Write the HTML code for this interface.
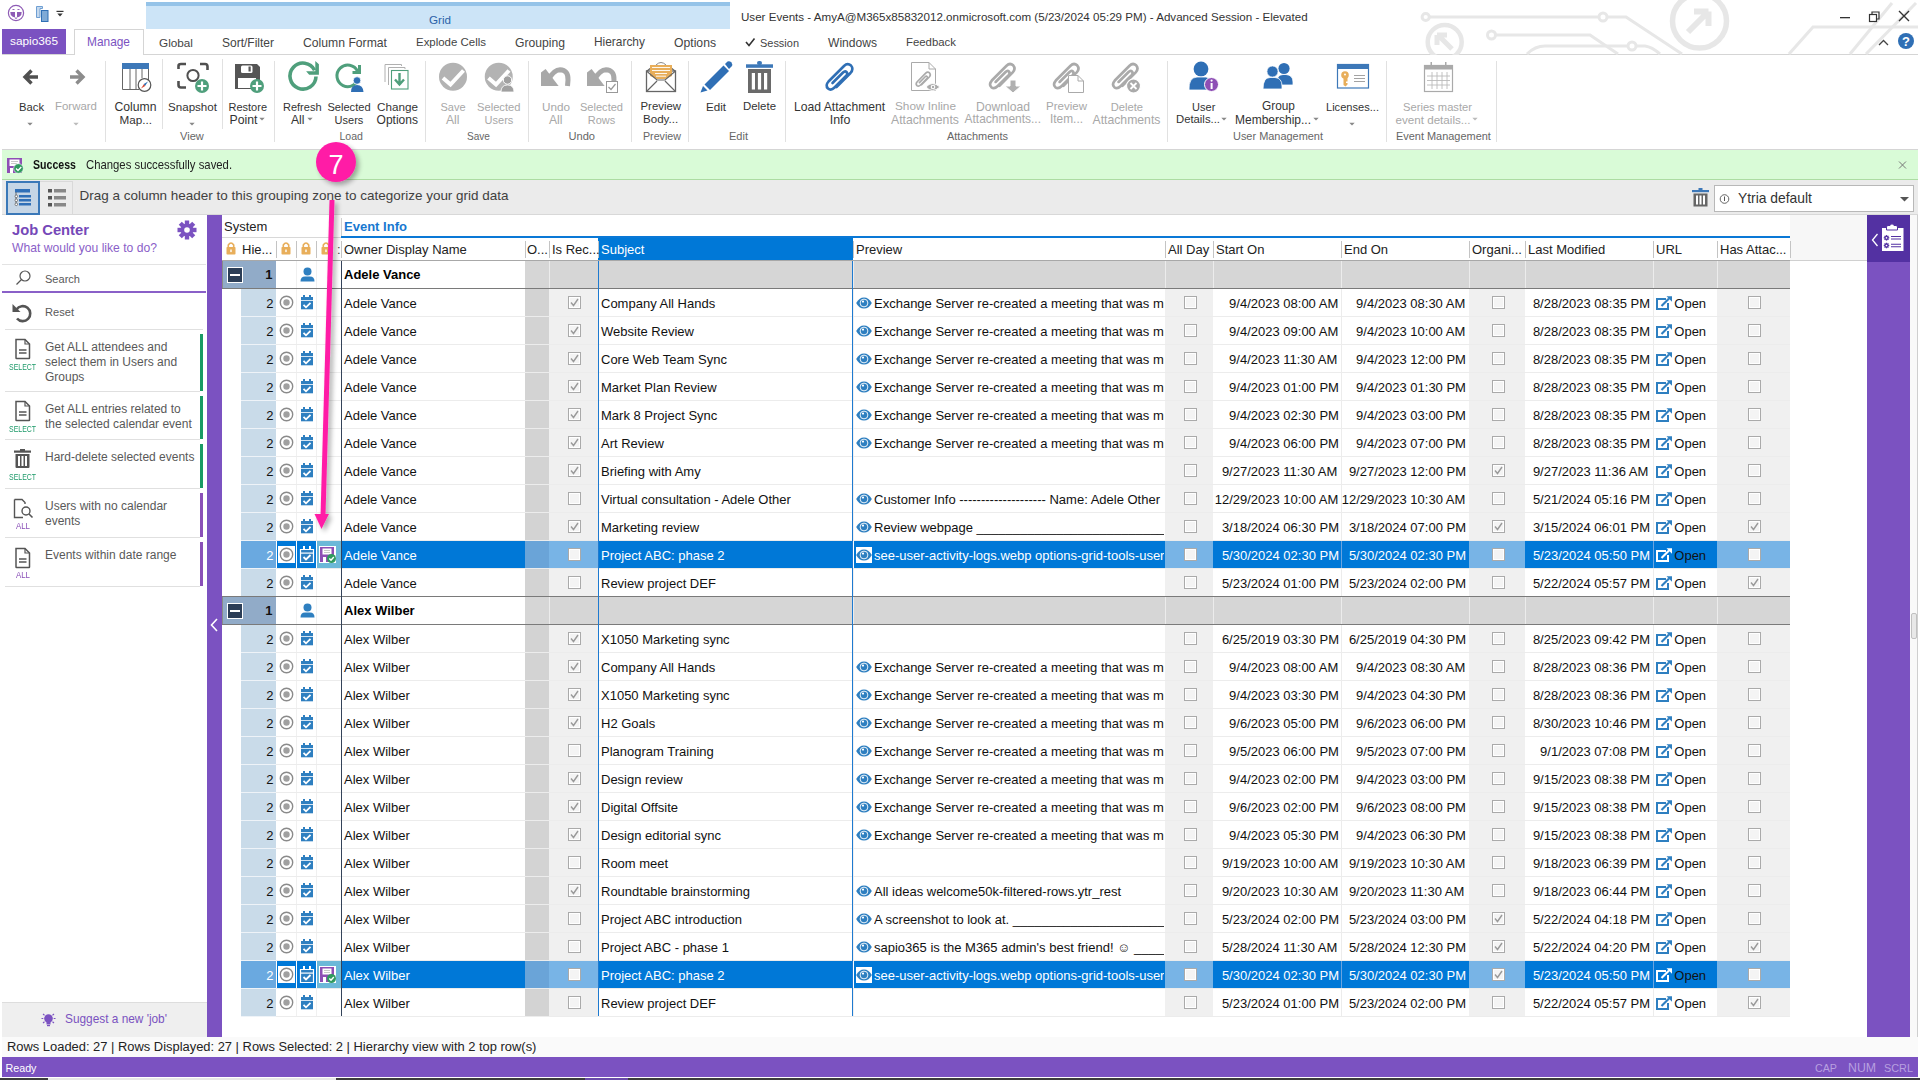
<!DOCTYPE html><html><head><meta charset="utf-8"><style>
html,body{margin:0;padding:0;width:1920px;height:1080px;overflow:hidden;background:#fff;}
body{position:relative;font-family:"Liberation Sans",sans-serif;}
div,svg{position:absolute;box-sizing:border-box;}
.t{white-space:nowrap;}
</style></head><body>
<div style="left:146px;top:2px;width:584px;height:27px;background:#cce4f7;"></div>
<div style="left:146px;top:2px;width:584px;height:4px;background:#95c3e8;"></div>
<div class="t" style="left:429.0px;top:14.1px;font-size:11.65px;line-height:11.65px;color:#2a62a8;">Grid</div>
<div class="t" style="left:741.0px;top:11.2px;font-size:11.6px;line-height:11.6px;color:#333;">User Events - AmyA@M365x85832012.onmicrosoft.com (5/23/2024 05:29 PM) - Advanced Session - Elevated</div>
<div style="left:2px;top:54px;width:1916px;height:1px;background:#d5d5d5;"></div>
<div style="left:2px;top:29px;width:64px;height:25px;background:#7b52c1;"></div>
<div class="t" style="left:10.0px;top:36.0px;font-size:11.83px;line-height:11.83px;color:#fff;">sapio365</div>
<div style="left:74px;top:29px;width:70px;height:26px;background:#fff;border:1px solid #d5d5d5;border-bottom:none"></div>
<div class="t" style="left:87.0px;top:36.9px;font-size:11.9px;line-height:11.9px;color:#7b52c1;">Manage</div>
<div class="t" style="left:159.0px;top:37.0px;font-size:11.76px;line-height:11.76px;color:#444;">Global</div>
<div class="t" style="left:222.0px;top:36.8px;font-size:12.0px;line-height:12.0px;color:#444;">Sort/Filter</div>
<div class="t" style="left:303.0px;top:36.7px;font-size:12.19px;line-height:12.19px;color:#444;">Column Format</div>
<div class="t" style="left:416.0px;top:37.3px;font-size:11.45px;line-height:11.45px;color:#444;">Explode Cells</div>
<div class="t" style="left:515.0px;top:36.7px;font-size:12.15px;line-height:12.15px;color:#444;">Grouping</div>
<div class="t" style="left:594.0px;top:36.9px;font-size:11.92px;line-height:11.92px;color:#444;">Hierarchy</div>
<div class="t" style="left:674.0px;top:36.7px;font-size:12.19px;line-height:12.19px;color:#444;">Options</div>
<div class="t" style="left:760.0px;top:37.7px;font-size:10.96px;line-height:10.96px;color:#444;">Session</div>
<div class="t" style="left:828.0px;top:36.8px;font-size:12.08px;line-height:12.08px;color:#444;">Windows</div>
<div class="t" style="left:906.0px;top:37.4px;font-size:11.39px;line-height:11.39px;color:#444;">Feedback</div>
<div style="left:2px;top:149px;width:1916px;height:1px;background:#d5d5d5;"></div>
<div style="left:105px;top:61px;width:1px;height:81px;background:#e1e1e1;"></div>
<div style="left:162px;top:59px;width:1px;height:70px;background:#e1e1e1;"></div>
<div style="left:222px;top:59px;width:1px;height:70px;background:#e1e1e1;"></div>
<div style="left:274px;top:61px;width:1px;height:81px;background:#e1e1e1;"></div>
<div style="left:425px;top:61px;width:1px;height:81px;background:#e1e1e1;"></div>
<div style="left:528px;top:61px;width:1px;height:81px;background:#e1e1e1;"></div>
<div style="left:631px;top:61px;width:1px;height:81px;background:#e1e1e1;"></div>
<div style="left:688px;top:61px;width:1px;height:81px;background:#e1e1e1;"></div>
<div style="left:785px;top:61px;width:1px;height:81px;background:#e1e1e1;"></div>
<div style="left:1167px;top:61px;width:1px;height:81px;background:#e1e1e1;"></div>
<div style="left:1386px;top:61px;width:1px;height:81px;background:#e1e1e1;"></div>
<div style="left:1496px;top:61px;width:1px;height:81px;background:#e1e1e1;"></div>
<div class="t" style="left:19.0px;top:101.5px;font-size:11.25px;line-height:11.25px;color:#333;">Back</div>
<div class="t" style="left:55.0px;top:101.3px;font-size:11.45px;line-height:11.45px;color:#a8a8a8;">Forward</div>
<div class="t" style="left:114.5px;top:100.7px;font-size:12.19px;line-height:12.19px;color:#333;">Column</div>
<div class="t" style="left:119.5px;top:114.1px;font-size:11.7px;line-height:11.7px;color:#333;">Map...</div>
<div class="t" style="left:168.0px;top:101.2px;font-size:11.6px;line-height:11.6px;color:#333;">Snapshot</div>
<div class="t" style="left:228.5px;top:101.7px;font-size:11.0px;line-height:11.0px;color:#333;">Restore</div>
<div class="t" style="left:229.5px;top:113.6px;font-size:12.28px;line-height:12.28px;color:#333;">Point</div>
<div class="t" style="left:283.0px;top:101.7px;font-size:11.0px;line-height:11.0px;color:#333;">Refresh</div>
<div class="t" style="left:291.0px;top:113.7px;font-size:12.15px;line-height:12.15px;color:#333;">All</div>
<div class="t" style="left:327.4px;top:101.6px;font-size:11.1px;line-height:11.1px;color:#333;">Selected</div>
<div class="t" style="left:334.6px;top:114.7px;font-size:11.0px;line-height:11.0px;color:#333;">Users</div>
<div class="t" style="left:377.0px;top:101.1px;font-size:11.7px;line-height:11.7px;color:#333;">Change</div>
<div class="t" style="left:376.6px;top:113.8px;font-size:12.01px;line-height:12.01px;color:#333;">Options</div>
<div class="t" style="left:440.5px;top:101.7px;font-size:11.0px;line-height:11.0px;color:#a8a8a8;">Save</div>
<div class="t" style="left:446.0px;top:113.7px;font-size:12.15px;line-height:12.15px;color:#a8a8a8;">All</div>
<div class="t" style="left:477.0px;top:101.5px;font-size:11.18px;line-height:11.18px;color:#a8a8a8;">Selected</div>
<div class="t" style="left:484.6px;top:114.7px;font-size:11.0px;line-height:11.0px;color:#a8a8a8;">Users</div>
<div class="t" style="left:542.0px;top:101.1px;font-size:11.71px;line-height:11.71px;color:#a8a8a8;">Undo</div>
<div class="t" style="left:549.0px;top:113.7px;font-size:12.15px;line-height:12.15px;color:#a8a8a8;">All</div>
<div class="t" style="left:580.0px;top:101.6px;font-size:11.05px;line-height:11.05px;color:#a8a8a8;">Selected</div>
<div class="t" style="left:587.7px;top:114.7px;font-size:11.0px;line-height:11.0px;color:#a8a8a8;">Rows</div>
<div class="t" style="left:640.5px;top:101.4px;font-size:11.39px;line-height:11.39px;color:#333;">Preview</div>
<div class="t" style="left:643.0px;top:114.2px;font-size:11.57px;line-height:11.57px;color:#333;">Body...</div>
<div class="t" style="left:706.0px;top:101.2px;font-size:11.61px;line-height:11.61px;color:#333;">Edit</div>
<div class="t" style="left:743.0px;top:101.3px;font-size:11.42px;line-height:11.42px;color:#333;">Delete</div>
<div class="t" style="left:794.0px;top:100.7px;font-size:12.17px;line-height:12.17px;color:#333;">Load Attachment</div>
<div class="t" style="left:829.7px;top:113.5px;font-size:12.4px;line-height:12.4px;color:#333;">Info</div>
<div class="t" style="left:895.0px;top:101.0px;font-size:11.8px;line-height:11.8px;color:#a8a8a8;">Show Inline</div>
<div class="t" style="left:891.0px;top:113.6px;font-size:12.23px;line-height:12.23px;color:#a8a8a8;">Attachments</div>
<div class="t" style="left:976.0px;top:100.7px;font-size:12.14px;line-height:12.14px;color:#a8a8a8;">Download</div>
<div class="t" style="left:964.5px;top:113.9px;font-size:11.97px;line-height:11.97px;color:#a8a8a8;">Attachments...</div>
<div class="t" style="left:1046.0px;top:101.2px;font-size:11.53px;line-height:11.53px;color:#a8a8a8;">Preview</div>
<div class="t" style="left:1050.0px;top:113.9px;font-size:11.88px;line-height:11.88px;color:#a8a8a8;">Item...</div>
<div class="t" style="left:1110.7px;top:101.5px;font-size:11.17px;line-height:11.17px;color:#a8a8a8;">Delete</div>
<div class="t" style="left:1092.5px;top:113.6px;font-size:12.23px;line-height:12.23px;color:#a8a8a8;">Attachments</div>
<div class="t" style="left:1192.1px;top:101.7px;font-size:11.0px;line-height:11.0px;color:#333;">User</div>
<div class="t" style="left:1176.0px;top:114.4px;font-size:11.31px;line-height:11.31px;color:#333;">Details...</div>
<div class="t" style="left:1262.0px;top:101.0px;font-size:11.87px;line-height:11.87px;color:#333;">Group</div>
<div class="t" style="left:1235.0px;top:113.8px;font-size:12.0px;line-height:12.0px;color:#333;">Membership...</div>
<div class="t" style="left:1326.0px;top:101.6px;font-size:11.09px;line-height:11.09px;color:#333;">Licenses...</div>
<div class="t" style="left:1403.0px;top:101.5px;font-size:11.19px;line-height:11.19px;color:#a8a8a8;">Series master</div>
<div class="t" style="left:1395.5px;top:114.2px;font-size:11.63px;line-height:11.63px;color:#a8a8a8;">event details...</div>
<div class="t" style="left:180.0px;top:130.6px;font-size:11.07px;line-height:11.07px;color:#666;">View</div>
<div class="t" style="left:339.5px;top:131.1px;font-size:10.56px;line-height:10.56px;color:#666;">Load</div>
<div class="t" style="left:467.0px;top:131.5px;font-size:10.09px;line-height:10.09px;color:#666;">Save</div>
<div class="t" style="left:568.5px;top:130.6px;font-size:11.08px;line-height:11.08px;color:#666;">Undo</div>
<div class="t" style="left:643.0px;top:131.0px;font-size:10.68px;line-height:10.68px;color:#666;">Preview</div>
<div class="t" style="left:729.0px;top:130.7px;font-size:11.03px;line-height:11.03px;color:#666;">Edit</div>
<div class="t" style="left:947.0px;top:130.7px;font-size:10.97px;line-height:10.97px;color:#666;">Attachments</div>
<div class="t" style="left:1233.0px;top:130.7px;font-size:10.94px;line-height:10.94px;color:#666;">User Management</div>
<div class="t" style="left:1396.0px;top:130.7px;font-size:10.95px;line-height:10.95px;color:#666;">Event Management</div>
<div style="left:2px;top:150px;width:1916px;height:30px;background:#d9fbd7;"></div>
<div style="left:2px;top:179px;width:1916px;height:1px;background:#acdca2;"></div>
<div class="t" style="left:33.0px;top:159.3px;font-size:12.6px;line-height:12.6px;color:#111;font-weight:bold;transform:scaleX(0.841);transform-origin:0 0;">Success</div>
<div class="t" style="left:86.0px;top:159.2px;font-size:12.8px;line-height:12.8px;color:#222;transform:scaleX(0.885);transform-origin:0 0;">Changes successfully saved.</div>
<div style="left:2px;top:180px;width:1916px;height:35px;background:#ebebeb;"></div>
<div style="left:2px;top:214px;width:1916px;height:1px;background:#d8d8d8;"></div>
<div style="left:6px;top:181px;width:34px;height:34px;background:#c6d6e6;border:2px solid #3a78b8"></div>
<div style="left:40px;top:181px;width:33px;height:34px;background:#ececec;border:1px solid #d9d9d9;border-left:none"></div>
<div class="t" style="left:79.5px;top:188.6px;font-size:13.48px;line-height:13.48px;color:#404040;">Drag a column header to this grouping zone to categorize your grid data</div>
<div style="left:1714px;top:185px;width:200px;height:27px;background:#fff;border:1px solid #b8b8b8"></div>
<div class="t" style="left:1738.0px;top:192.3px;font-size:13.87px;line-height:13.87px;color:#333;">Ytria default</div>
<div style="left:0px;top:215px;width:207px;height:822px;background:#fff;"></div>
<div style="left:207px;top:215px;width:15px;height:822px;background:#7b52c1;"></div>
<div class="t" style="left:12.0px;top:223.0px;font-size:14.74px;line-height:14.74px;color:#7548b8;font-weight:bold;">Job Center</div>
<div class="t" style="left:12.0px;top:241.7px;font-size:12.13px;line-height:12.13px;color:#8a60c8;">What would you like to do?</div>
<div style="left:2px;top:264px;width:204px;height:1px;background:#e3e3e3;"></div>
<div class="t" style="left:45.0px;top:273.6px;font-size:11.05px;line-height:11.05px;color:#595959;">Search</div>
<div style="left:2px;top:291px;width:204px;height:2px;background:#8a60c8;"></div>
<div class="t" style="left:45.0px;top:306.6px;font-size:11.1px;line-height:11.1px;color:#595959;">Reset</div>
<div style="left:5px;top:329px;width:198px;height:1px;background:#e0e0e0;"></div>
<div style="left:200px;top:334px;width:3px;height:57px;background:#1a9a64;"></div>
<div style="left:5px;top:391px;width:195px;height:1px;background:#e0e0e0;"></div>
<div class="t" style="left:45.0px;top:340.8px;font-size:12px;line-height:12px;color:#595959;">Get ALL attendees and</div>
<div class="t" style="left:45.0px;top:356.1px;font-size:12px;line-height:12px;color:#595959;">select them in Users and</div>
<div class="t" style="left:45.0px;top:371.4px;font-size:12px;line-height:12px;color:#595959;">Groups</div>
<div class="t" style="left:9.0px;top:362.0px;font-size:9.5px;line-height:9.5px;color:#1e9a6a;transform:scaleX(0.731);transform-origin:0 0;">SELECT</div>
<div style="left:200px;top:396px;width:3px;height:43px;background:#1a9a64;"></div>
<div style="left:5px;top:439px;width:195px;height:1px;background:#e0e0e0;"></div>
<div class="t" style="left:45.0px;top:402.8px;font-size:12px;line-height:12px;color:#595959;">Get ALL entries related to</div>
<div class="t" style="left:45.0px;top:418.1px;font-size:12px;line-height:12px;color:#595959;">the selected calendar event</div>
<div class="t" style="left:9.0px;top:424.0px;font-size:9.5px;line-height:9.5px;color:#1e9a6a;transform:scaleX(0.731);transform-origin:0 0;">SELECT</div>
<div style="left:200px;top:444px;width:3px;height:44px;background:#1a9a64;"></div>
<div style="left:5px;top:488px;width:195px;height:1px;background:#e0e0e0;"></div>
<div class="t" style="left:45.0px;top:450.8px;font-size:12px;line-height:12px;color:#595959;">Hard-delete selected events</div>
<div class="t" style="left:9.0px;top:472.0px;font-size:9.5px;line-height:9.5px;color:#1e9a6a;transform:scaleX(0.731);transform-origin:0 0;">SELECT</div>
<div style="left:200px;top:493px;width:3px;height:44px;background:#8a50b8;"></div>
<div style="left:5px;top:537px;width:195px;height:1px;background:#e0e0e0;"></div>
<div class="t" style="left:45.0px;top:499.8px;font-size:12px;line-height:12px;color:#595959;">Users with no calendar</div>
<div class="t" style="left:45.0px;top:515.1px;font-size:12px;line-height:12px;color:#595959;">events</div>
<div class="t" style="left:15.5px;top:521.0px;font-size:9.5px;line-height:9.5px;color:#8a50b8;transform:scaleX(0.828);transform-origin:0 0;">ALL</div>
<div style="left:200px;top:542px;width:3px;height:44px;background:#8a50b8;"></div>
<div style="left:5px;top:586px;width:195px;height:1px;background:#e0e0e0;"></div>
<div class="t" style="left:45.0px;top:548.8px;font-size:12px;line-height:12px;color:#595959;">Events within date range</div>
<div class="t" style="left:15.5px;top:570.0px;font-size:9.5px;line-height:9.5px;color:#8a50b8;transform:scaleX(0.828);transform-origin:0 0;">ALL</div>
<div style="left:2px;top:1002px;width:205px;height:35px;background:#efefef;"></div>
<div style="left:2px;top:1002px;width:205px;height:1px;background:#dddddd;"></div>
<div class="t" style="left:65.0px;top:1014.0px;font-size:11.85px;line-height:11.85px;color:#7a52c0;">Suggest a new &#x27;job&#x27;</div>
<div style="left:1790px;top:215px;width:77px;height:46px;background:#f7f7f7;"></div>
<div style="left:1790px;top:260px;width:77px;height:1px;background:#d0d0d0;"></div>
<div style="left:1867px;top:215px;width:43px;height:822px;background:#7b52c1;"></div>
<div style="left:1867px;top:215px;width:43px;height:47px;background:#5331a2;"></div>
<div style="left:1910px;top:215px;width:8px;height:822px;background:#f9f9f9;"></div>
<div style="left:1917px;top:215px;width:1px;height:822px;background:#cfcfcf;"></div>
<div style="left:1911px;top:613px;width:6px;height:26px;background:#e8e8e8;border:1px solid #c0c0c0;border-radius:2px"></div>
<div style="left:2px;top:1037px;width:1916px;height:20px;background:#fafafa;"></div>
<div class="t" style="left:7.0px;top:1041.1px;font-size:12.92px;line-height:12.92px;color:#222;">Rows Loaded: 27 | Rows Displayed: 27 | Rows Selected: 2 | Hierarchy view with 2 top row(s)</div>
<div style="left:0px;top:1057px;width:1920px;height:23px;background:#fff;"></div>
<div style="left:2px;top:1057px;width:1916px;height:20px;background:#7b52c1;"></div>
<div style="left:0px;top:1078px;width:1920px;height:2px;background:#3c3c3c;"></div>
<div style="left:48px;top:1078px;width:288px;height:2px;background:#e6e6e6;"></div>
<div style="left:585px;top:1078px;width:43px;height:2px;background:#6a4aa8;"></div>
<div class="t" style="left:5.5px;top:1062.9px;font-size:10.72px;line-height:10.72px;color:#fff;">Ready</div>
<div class="t" style="left:1815.0px;top:1062.9px;font-size:10.7px;line-height:10.7px;color:#b8a0e0;">CAP</div>
<div class="t" style="left:1848.0px;top:1061.6px;font-size:12.3px;line-height:12.3px;color:#b8a0e0;">NUM</div>
<div class="t" style="left:1884.0px;top:1062.8px;font-size:10.87px;line-height:10.87px;color:#b8a0e0;">SCRL</div>
<div style="left:222px;top:215px;width:1568px;height:46px;background:#fff;"></div>
<div class="t" style="left:224.0px;top:220.0px;font-size:13px;line-height:13px;color:#222;">System</div>
<div class="t" style="left:344.0px;top:220.0px;font-size:13.03px;line-height:13.03px;color:#1878d0;font-weight:bold;">Event Info</div>
<div style="left:341px;top:218px;width:1px;height:19px;background:#d0d0d0;"></div>
<div style="left:222px;top:237px;width:119px;height:1px;background:#d8d8d8;"></div>
<div style="left:341px;top:236px;width:1449px;height:2px;background:#0a78d6;"></div>
<div style="left:598px;top:238px;width:255px;height:22px;background:#0078d7;"></div>
<div style="left:222px;top:260px;width:1568px;height:1px;background:#a8a8a8;"></div>
<div style="left:276px;top:241px;width:1px;height:17px;background:#c4c4c4;"></div>
<div style="left:296px;top:241px;width:1px;height:17px;background:#c4c4c4;"></div>
<div style="left:316px;top:241px;width:1px;height:17px;background:#c4c4c4;"></div>
<div style="left:341px;top:241px;width:1px;height:17px;background:#c4c4c4;"></div>
<div style="left:525px;top:241px;width:1px;height:17px;background:#c4c4c4;"></div>
<div style="left:549px;top:241px;width:1px;height:17px;background:#c4c4c4;"></div>
<div style="left:598px;top:241px;width:1px;height:17px;background:#c4c4c4;"></div>
<div style="left:853px;top:241px;width:1px;height:17px;background:#c4c4c4;"></div>
<div style="left:1165px;top:241px;width:1px;height:17px;background:#c4c4c4;"></div>
<div style="left:1213px;top:241px;width:1px;height:17px;background:#c4c4c4;"></div>
<div style="left:1341px;top:241px;width:1px;height:17px;background:#c4c4c4;"></div>
<div style="left:1469px;top:241px;width:1px;height:17px;background:#c4c4c4;"></div>
<div style="left:1525px;top:241px;width:1px;height:17px;background:#c4c4c4;"></div>
<div style="left:1653px;top:241px;width:1px;height:17px;background:#c4c4c4;"></div>
<div style="left:1717px;top:241px;width:1px;height:17px;background:#c4c4c4;"></div>
<div style="left:1790px;top:241px;width:1px;height:17px;background:#c4c4c4;"></div>
<div class="t" style="left:242.0px;top:243.0px;font-size:13px;line-height:13px;color:#222;">Hie...</div>
<div class="t" style="left:344.0px;top:243.0px;font-size:13px;line-height:13px;color:#222;">Owner Display Name</div>
<div class="t" style="left:527.0px;top:243.0px;font-size:13px;line-height:13px;color:#222;">O...</div>
<div class="t" style="left:552.0px;top:243.0px;font-size:13px;line-height:13px;color:#222;">Is Rec...</div>
<div class="t" style="left:601.0px;top:243.0px;font-size:13px;line-height:13px;color:#fff;">Subject</div>
<div class="t" style="left:856.0px;top:243.0px;font-size:13px;line-height:13px;color:#222;">Preview</div>
<div class="t" style="left:1168.0px;top:243.0px;font-size:13px;line-height:13px;color:#222;">All Day</div>
<div class="t" style="left:1216.0px;top:243.0px;font-size:13px;line-height:13px;color:#222;">Start On</div>
<div class="t" style="left:1344.0px;top:243.0px;font-size:13px;line-height:13px;color:#222;">End On</div>
<div class="t" style="left:1472.0px;top:243.0px;font-size:13px;line-height:13px;color:#222;">Organi...</div>
<div class="t" style="left:1528.0px;top:243.0px;font-size:13px;line-height:13px;color:#222;">Last Modified</div>
<div class="t" style="left:1656.0px;top:243.0px;font-size:13px;line-height:13px;color:#222;">URL</div>
<div class="t" style="left:1720.0px;top:243.0px;font-size:13px;line-height:13px;color:#222;">Has Attac...</div>
<div class="t" style="left:337.0px;top:243.0px;font-size:13px;line-height:13px;color:#444;">:</div>
<div style="left:222px;top:261px;width:1568px;height:27px;background:#fff;"></div>
<div style="left:222px;top:261px;width:54px;height:27px;background:#91abc8;"></div>
<div style="left:525px;top:261px;width:1265px;height:27px;background:#d6d6d6;"></div>
<div style="left:549px;top:261px;width:1px;height:27px;background:#ececec;"></div>
<div style="left:598px;top:261px;width:1px;height:27px;background:#ececec;"></div>
<div style="left:853px;top:261px;width:1px;height:27px;background:#ececec;"></div>
<div style="left:1165px;top:261px;width:1px;height:27px;background:#ececec;"></div>
<div style="left:1213px;top:261px;width:1px;height:27px;background:#ececec;"></div>
<div style="left:1341px;top:261px;width:1px;height:27px;background:#ececec;"></div>
<div style="left:1469px;top:261px;width:1px;height:27px;background:#ececec;"></div>
<div style="left:1525px;top:261px;width:1px;height:27px;background:#ececec;"></div>
<div style="left:1653px;top:261px;width:1px;height:27px;background:#ececec;"></div>
<div style="left:1717px;top:261px;width:1px;height:27px;background:#ececec;"></div>
<div style="left:296px;top:261px;width:1px;height:27px;background:#f0f0f0;"></div>
<div style="left:316px;top:261px;width:1px;height:27px;background:#f0f0f0;"></div>
<div style="left:222px;top:288px;width:1568px;height:1px;background:#7a7a7a;"></div>
<div style="left:222px;top:261px;width:1px;height:27px;background:#8a8a8a;"></div>
<svg style="left:227px;top:267px" width="16" height="16" viewBox="0 0 16 16"><rect x="0.5" y="0.5" width="15" height="15" fill="#2c3e57" stroke="#fff"/><rect x="3" y="7" width="10" height="2" fill="#fff"/></svg>
<div class="t" style="left:265.3px;top:268.0px;font-size:13px;line-height:13px;color:#111;font-weight:bold;">1</div>
<svg style="left:300px;top:267px" width="15" height="15" viewBox="0 0 15 15"><circle cx="7.5" cy="4.5" r="4" fill="#2e7fc0"/><path d="M0.5 14.5 Q0.5 9.5 5 9.5 H10 Q14.5 9.5 14.5 14.5 Z" fill="#2e7fc0"/></svg>
<div class="t" style="left:344.0px;top:268.0px;font-size:13px;line-height:13px;color:#000;font-weight:bold;">Adele Vance</div>
<div style="left:222px;top:289px;width:19px;height:27px;background:#fff;"></div>
<div style="left:241px;top:289px;width:35px;height:27px;background:#c9dbe9;"></div>
<div style="left:276px;top:289px;width:65px;height:27px;background:#fff;"></div>
<div style="left:341px;top:289px;width:184px;height:27px;background:#fff;"></div>
<div style="left:525px;top:289px;width:24px;height:27px;background:#d3d3d3;"></div>
<div style="left:549px;top:289px;width:49px;height:27px;background:#f0f0f0;"></div>
<div style="left:598px;top:289px;width:567px;height:27px;background:#fff;"></div>
<div style="left:1165px;top:289px;width:48px;height:27px;background:#f0f0f0;"></div>
<div style="left:1213px;top:289px;width:256px;height:27px;background:#fff;"></div>
<div style="left:1469px;top:289px;width:56px;height:27px;background:#f0f0f0;"></div>
<div style="left:1525px;top:289px;width:192px;height:27px;background:#fff;"></div>
<div style="left:1717px;top:289px;width:73px;height:27px;background:#f0f0f0;"></div>
<div style="left:241px;top:316px;width:1549px;height:1px;background:#ececec;"></div>
<div style="left:241px;top:316px;width:35px;height:1px;background:#eef3f8;"></div>
<div style="left:1341px;top:289px;width:1px;height:27px;background:#ececec;"></div>
<div style="left:1653px;top:289px;width:1px;height:27px;background:#ececec;"></div>
<div style="left:296px;top:289px;width:1px;height:27px;background:#f0f0f0;"></div>
<div style="left:316px;top:289px;width:1px;height:27px;background:#f0f0f0;"></div>
<div style="left:853px;top:289px;width:1px;height:27px;background:#f0f0f0;"></div>
<div class="t" style="left:266.3px;top:296.8px;font-size:13px;line-height:13px;color:#111;">2</div>
<svg style="left:278px;top:294px" width="17" height="17" viewBox="0 0 17 17"><circle cx="8.5" cy="8.5" r="6.2" fill="none" stroke="#8a8a8a" stroke-width="1.4"/><circle cx="8.5" cy="8.5" r="3.2" fill="#a0a0a0"/></svg>
<svg style="left:299px;top:294px" width="16" height="18" viewBox="0 0 16 18"><rect x="2" y="3" width="12" height="3.2" fill="#2e7fc0"/><rect x="4" y="1" width="2" height="3" fill="#2e7fc0"/><rect x="10" y="1" width="2" height="3" fill="#2e7fc0"/><rect x="2" y="7" width="12" height="8.3" fill="#2e7fc0"/><path d="M4.5 10.8 L7 13.3 L11.5 8.8" fill="none" stroke="#fff" stroke-width="1.8"/></svg>
<div class="t" style="left:344.0px;top:296.8px;font-size:13px;line-height:13px;color:#111;">Adele Vance</div>
<svg style="left:568px;top:296px" width="13" height="13" viewBox="0 0 13 13"><rect x="0.5" y="0.5" width="12" height="12" fill="#fff" stroke="#aaaaaa"/><rect x="2" y="2" width="9" height="9" fill="#f4f4f4"/><path d="M3 6.5 L5.5 9.5 L10 3" fill="none" stroke="#9a9a9a" stroke-width="1.4"/></svg>
<div class="t" style="left:601.0px;top:296.8px;font-size:13px;line-height:13px;color:#111;">Company All Hands</div>
<svg style="left:856px;top:296.5px" width="16" height="12" viewBox="0 0 16 12"><path d="M0.2 6 Q3 0.4 8 0.4 Q13 0.4 15.8 6 Q13 11.6 8 11.6 Q3 11.6 0.2 6 Z" fill="#2e7fc0"/><circle cx="8" cy="6" r="3.9" fill="none" stroke="#fff" stroke-width="0.9"/><circle cx="7" cy="4.6" r="1.1" fill="#fff"/></svg>
<div class="t" style="left:874.0px;top:296.8px;font-size:13px;line-height:13px;color:#111;width:290px;overflow:hidden;height:18.2px;">Exchange Server re-created a meeting that was missing</div>
<svg style="left:1184px;top:296px" width="13" height="13" viewBox="0 0 13 13"><rect x="0.5" y="0.5" width="12" height="12" fill="#fff" stroke="#aaaaaa"/><rect x="2" y="2" width="9" height="9" fill="#f4f4f4"/></svg>
<div class="t" style="left:1229.1px;top:296.8px;font-size:13px;line-height:13px;color:#111;">9/4/2023 08:00 AM</div>
<div class="t" style="left:1356.1px;top:296.8px;font-size:13px;line-height:13px;color:#111;">9/4/2023 08:30 AM</div>
<svg style="left:1492px;top:296px" width="13" height="13" viewBox="0 0 13 13"><rect x="0.5" y="0.5" width="12" height="12" fill="#fff" stroke="#aaaaaa"/><rect x="2" y="2" width="9" height="9" fill="#f4f4f4"/></svg>
<div class="t" style="left:1532.9px;top:296.8px;font-size:13px;line-height:13px;color:#111;">8/28/2023 08:35 PM</div>
<svg style="left:1656px;top:294px" width="17" height="17" viewBox="0 0 17 17"><path d="M10 5 H1 V15 H12 V9" fill="none" stroke="#2e7fc0" stroke-width="2"/><path d="M5.5 12 L13 4.5" stroke="#2e7fc0" stroke-width="2.2"/><path d="M10.5 2.2 H16 V7.8 Z" fill="#2e7fc0"/></svg>
<div class="t" style="left:1674.3px;top:296.8px;font-size:13px;line-height:13px;color:#111;">Open</div>
<svg style="left:1748px;top:296px" width="13" height="13" viewBox="0 0 13 13"><rect x="0.5" y="0.5" width="12" height="12" fill="#fff" stroke="#aaaaaa"/><rect x="2" y="2" width="9" height="9" fill="#f4f4f4"/></svg>
<div style="left:222px;top:317px;width:19px;height:27px;background:#fff;"></div>
<div style="left:241px;top:317px;width:35px;height:27px;background:#c9dbe9;"></div>
<div style="left:276px;top:317px;width:65px;height:27px;background:#fff;"></div>
<div style="left:341px;top:317px;width:184px;height:27px;background:#fff;"></div>
<div style="left:525px;top:317px;width:24px;height:27px;background:#d3d3d3;"></div>
<div style="left:549px;top:317px;width:49px;height:27px;background:#f0f0f0;"></div>
<div style="left:598px;top:317px;width:567px;height:27px;background:#fff;"></div>
<div style="left:1165px;top:317px;width:48px;height:27px;background:#f0f0f0;"></div>
<div style="left:1213px;top:317px;width:256px;height:27px;background:#fff;"></div>
<div style="left:1469px;top:317px;width:56px;height:27px;background:#f0f0f0;"></div>
<div style="left:1525px;top:317px;width:192px;height:27px;background:#fff;"></div>
<div style="left:1717px;top:317px;width:73px;height:27px;background:#f0f0f0;"></div>
<div style="left:241px;top:344px;width:1549px;height:1px;background:#ececec;"></div>
<div style="left:241px;top:344px;width:35px;height:1px;background:#eef3f8;"></div>
<div style="left:1341px;top:317px;width:1px;height:27px;background:#ececec;"></div>
<div style="left:1653px;top:317px;width:1px;height:27px;background:#ececec;"></div>
<div style="left:296px;top:317px;width:1px;height:27px;background:#f0f0f0;"></div>
<div style="left:316px;top:317px;width:1px;height:27px;background:#f0f0f0;"></div>
<div style="left:853px;top:317px;width:1px;height:27px;background:#f0f0f0;"></div>
<div class="t" style="left:266.3px;top:324.8px;font-size:13px;line-height:13px;color:#111;">2</div>
<svg style="left:278px;top:322px" width="17" height="17" viewBox="0 0 17 17"><circle cx="8.5" cy="8.5" r="6.2" fill="none" stroke="#8a8a8a" stroke-width="1.4"/><circle cx="8.5" cy="8.5" r="3.2" fill="#a0a0a0"/></svg>
<svg style="left:299px;top:322px" width="16" height="18" viewBox="0 0 16 18"><rect x="2" y="3" width="12" height="3.2" fill="#2e7fc0"/><rect x="4" y="1" width="2" height="3" fill="#2e7fc0"/><rect x="10" y="1" width="2" height="3" fill="#2e7fc0"/><rect x="2" y="7" width="12" height="8.3" fill="#2e7fc0"/><path d="M4.5 10.8 L7 13.3 L11.5 8.8" fill="none" stroke="#fff" stroke-width="1.8"/></svg>
<div class="t" style="left:344.0px;top:324.8px;font-size:13px;line-height:13px;color:#111;">Adele Vance</div>
<svg style="left:568px;top:324px" width="13" height="13" viewBox="0 0 13 13"><rect x="0.5" y="0.5" width="12" height="12" fill="#fff" stroke="#aaaaaa"/><rect x="2" y="2" width="9" height="9" fill="#f4f4f4"/><path d="M3 6.5 L5.5 9.5 L10 3" fill="none" stroke="#9a9a9a" stroke-width="1.4"/></svg>
<div class="t" style="left:601.0px;top:324.8px;font-size:13px;line-height:13px;color:#111;">Website Review</div>
<svg style="left:856px;top:324.5px" width="16" height="12" viewBox="0 0 16 12"><path d="M0.2 6 Q3 0.4 8 0.4 Q13 0.4 15.8 6 Q13 11.6 8 11.6 Q3 11.6 0.2 6 Z" fill="#2e7fc0"/><circle cx="8" cy="6" r="3.9" fill="none" stroke="#fff" stroke-width="0.9"/><circle cx="7" cy="4.6" r="1.1" fill="#fff"/></svg>
<div class="t" style="left:874.0px;top:324.8px;font-size:13px;line-height:13px;color:#111;width:290px;overflow:hidden;height:18.2px;">Exchange Server re-created a meeting that was missing</div>
<svg style="left:1184px;top:324px" width="13" height="13" viewBox="0 0 13 13"><rect x="0.5" y="0.5" width="12" height="12" fill="#fff" stroke="#aaaaaa"/><rect x="2" y="2" width="9" height="9" fill="#f4f4f4"/></svg>
<div class="t" style="left:1229.1px;top:324.8px;font-size:13px;line-height:13px;color:#111;">9/4/2023 09:00 AM</div>
<div class="t" style="left:1356.1px;top:324.8px;font-size:13px;line-height:13px;color:#111;">9/4/2023 10:00 AM</div>
<svg style="left:1492px;top:324px" width="13" height="13" viewBox="0 0 13 13"><rect x="0.5" y="0.5" width="12" height="12" fill="#fff" stroke="#aaaaaa"/><rect x="2" y="2" width="9" height="9" fill="#f4f4f4"/></svg>
<div class="t" style="left:1532.9px;top:324.8px;font-size:13px;line-height:13px;color:#111;">8/28/2023 08:35 PM</div>
<svg style="left:1656px;top:322px" width="17" height="17" viewBox="0 0 17 17"><path d="M10 5 H1 V15 H12 V9" fill="none" stroke="#2e7fc0" stroke-width="2"/><path d="M5.5 12 L13 4.5" stroke="#2e7fc0" stroke-width="2.2"/><path d="M10.5 2.2 H16 V7.8 Z" fill="#2e7fc0"/></svg>
<div class="t" style="left:1674.3px;top:324.8px;font-size:13px;line-height:13px;color:#111;">Open</div>
<svg style="left:1748px;top:324px" width="13" height="13" viewBox="0 0 13 13"><rect x="0.5" y="0.5" width="12" height="12" fill="#fff" stroke="#aaaaaa"/><rect x="2" y="2" width="9" height="9" fill="#f4f4f4"/></svg>
<div style="left:222px;top:345px;width:19px;height:27px;background:#fff;"></div>
<div style="left:241px;top:345px;width:35px;height:27px;background:#c9dbe9;"></div>
<div style="left:276px;top:345px;width:65px;height:27px;background:#fff;"></div>
<div style="left:341px;top:345px;width:184px;height:27px;background:#fff;"></div>
<div style="left:525px;top:345px;width:24px;height:27px;background:#d3d3d3;"></div>
<div style="left:549px;top:345px;width:49px;height:27px;background:#f0f0f0;"></div>
<div style="left:598px;top:345px;width:567px;height:27px;background:#fff;"></div>
<div style="left:1165px;top:345px;width:48px;height:27px;background:#f0f0f0;"></div>
<div style="left:1213px;top:345px;width:256px;height:27px;background:#fff;"></div>
<div style="left:1469px;top:345px;width:56px;height:27px;background:#f0f0f0;"></div>
<div style="left:1525px;top:345px;width:192px;height:27px;background:#fff;"></div>
<div style="left:1717px;top:345px;width:73px;height:27px;background:#f0f0f0;"></div>
<div style="left:241px;top:372px;width:1549px;height:1px;background:#ececec;"></div>
<div style="left:241px;top:372px;width:35px;height:1px;background:#eef3f8;"></div>
<div style="left:1341px;top:345px;width:1px;height:27px;background:#ececec;"></div>
<div style="left:1653px;top:345px;width:1px;height:27px;background:#ececec;"></div>
<div style="left:296px;top:345px;width:1px;height:27px;background:#f0f0f0;"></div>
<div style="left:316px;top:345px;width:1px;height:27px;background:#f0f0f0;"></div>
<div style="left:853px;top:345px;width:1px;height:27px;background:#f0f0f0;"></div>
<div class="t" style="left:266.3px;top:352.8px;font-size:13px;line-height:13px;color:#111;">2</div>
<svg style="left:278px;top:350px" width="17" height="17" viewBox="0 0 17 17"><circle cx="8.5" cy="8.5" r="6.2" fill="none" stroke="#8a8a8a" stroke-width="1.4"/><circle cx="8.5" cy="8.5" r="3.2" fill="#a0a0a0"/></svg>
<svg style="left:299px;top:350px" width="16" height="18" viewBox="0 0 16 18"><rect x="2" y="3" width="12" height="3.2" fill="#2e7fc0"/><rect x="4" y="1" width="2" height="3" fill="#2e7fc0"/><rect x="10" y="1" width="2" height="3" fill="#2e7fc0"/><rect x="2" y="7" width="12" height="8.3" fill="#2e7fc0"/><path d="M4.5 10.8 L7 13.3 L11.5 8.8" fill="none" stroke="#fff" stroke-width="1.8"/></svg>
<div class="t" style="left:344.0px;top:352.8px;font-size:13px;line-height:13px;color:#111;">Adele Vance</div>
<svg style="left:568px;top:352px" width="13" height="13" viewBox="0 0 13 13"><rect x="0.5" y="0.5" width="12" height="12" fill="#fff" stroke="#aaaaaa"/><rect x="2" y="2" width="9" height="9" fill="#f4f4f4"/><path d="M3 6.5 L5.5 9.5 L10 3" fill="none" stroke="#9a9a9a" stroke-width="1.4"/></svg>
<div class="t" style="left:601.0px;top:352.8px;font-size:13px;line-height:13px;color:#111;">Core Web Team Sync</div>
<svg style="left:856px;top:352.5px" width="16" height="12" viewBox="0 0 16 12"><path d="M0.2 6 Q3 0.4 8 0.4 Q13 0.4 15.8 6 Q13 11.6 8 11.6 Q3 11.6 0.2 6 Z" fill="#2e7fc0"/><circle cx="8" cy="6" r="3.9" fill="none" stroke="#fff" stroke-width="0.9"/><circle cx="7" cy="4.6" r="1.1" fill="#fff"/></svg>
<div class="t" style="left:874.0px;top:352.8px;font-size:13px;line-height:13px;color:#111;width:290px;overflow:hidden;height:18.2px;">Exchange Server re-created a meeting that was missing</div>
<svg style="left:1184px;top:352px" width="13" height="13" viewBox="0 0 13 13"><rect x="0.5" y="0.5" width="12" height="12" fill="#fff" stroke="#aaaaaa"/><rect x="2" y="2" width="9" height="9" fill="#f4f4f4"/></svg>
<div class="t" style="left:1229.1px;top:352.8px;font-size:13px;line-height:13px;color:#111;">9/4/2023 11:30 AM</div>
<div class="t" style="left:1356.1px;top:352.8px;font-size:13px;line-height:13px;color:#111;">9/4/2023 12:00 PM</div>
<svg style="left:1492px;top:352px" width="13" height="13" viewBox="0 0 13 13"><rect x="0.5" y="0.5" width="12" height="12" fill="#fff" stroke="#aaaaaa"/><rect x="2" y="2" width="9" height="9" fill="#f4f4f4"/></svg>
<div class="t" style="left:1532.9px;top:352.8px;font-size:13px;line-height:13px;color:#111;">8/28/2023 08:35 PM</div>
<svg style="left:1656px;top:350px" width="17" height="17" viewBox="0 0 17 17"><path d="M10 5 H1 V15 H12 V9" fill="none" stroke="#2e7fc0" stroke-width="2"/><path d="M5.5 12 L13 4.5" stroke="#2e7fc0" stroke-width="2.2"/><path d="M10.5 2.2 H16 V7.8 Z" fill="#2e7fc0"/></svg>
<div class="t" style="left:1674.3px;top:352.8px;font-size:13px;line-height:13px;color:#111;">Open</div>
<svg style="left:1748px;top:352px" width="13" height="13" viewBox="0 0 13 13"><rect x="0.5" y="0.5" width="12" height="12" fill="#fff" stroke="#aaaaaa"/><rect x="2" y="2" width="9" height="9" fill="#f4f4f4"/></svg>
<div style="left:222px;top:373px;width:19px;height:27px;background:#fff;"></div>
<div style="left:241px;top:373px;width:35px;height:27px;background:#c9dbe9;"></div>
<div style="left:276px;top:373px;width:65px;height:27px;background:#fff;"></div>
<div style="left:341px;top:373px;width:184px;height:27px;background:#fff;"></div>
<div style="left:525px;top:373px;width:24px;height:27px;background:#d3d3d3;"></div>
<div style="left:549px;top:373px;width:49px;height:27px;background:#f0f0f0;"></div>
<div style="left:598px;top:373px;width:567px;height:27px;background:#fff;"></div>
<div style="left:1165px;top:373px;width:48px;height:27px;background:#f0f0f0;"></div>
<div style="left:1213px;top:373px;width:256px;height:27px;background:#fff;"></div>
<div style="left:1469px;top:373px;width:56px;height:27px;background:#f0f0f0;"></div>
<div style="left:1525px;top:373px;width:192px;height:27px;background:#fff;"></div>
<div style="left:1717px;top:373px;width:73px;height:27px;background:#f0f0f0;"></div>
<div style="left:241px;top:400px;width:1549px;height:1px;background:#ececec;"></div>
<div style="left:241px;top:400px;width:35px;height:1px;background:#eef3f8;"></div>
<div style="left:1341px;top:373px;width:1px;height:27px;background:#ececec;"></div>
<div style="left:1653px;top:373px;width:1px;height:27px;background:#ececec;"></div>
<div style="left:296px;top:373px;width:1px;height:27px;background:#f0f0f0;"></div>
<div style="left:316px;top:373px;width:1px;height:27px;background:#f0f0f0;"></div>
<div style="left:853px;top:373px;width:1px;height:27px;background:#f0f0f0;"></div>
<div class="t" style="left:266.3px;top:380.8px;font-size:13px;line-height:13px;color:#111;">2</div>
<svg style="left:278px;top:378px" width="17" height="17" viewBox="0 0 17 17"><circle cx="8.5" cy="8.5" r="6.2" fill="none" stroke="#8a8a8a" stroke-width="1.4"/><circle cx="8.5" cy="8.5" r="3.2" fill="#a0a0a0"/></svg>
<svg style="left:299px;top:378px" width="16" height="18" viewBox="0 0 16 18"><rect x="2" y="3" width="12" height="3.2" fill="#2e7fc0"/><rect x="4" y="1" width="2" height="3" fill="#2e7fc0"/><rect x="10" y="1" width="2" height="3" fill="#2e7fc0"/><rect x="2" y="7" width="12" height="8.3" fill="#2e7fc0"/><path d="M4.5 10.8 L7 13.3 L11.5 8.8" fill="none" stroke="#fff" stroke-width="1.8"/></svg>
<div class="t" style="left:344.0px;top:380.8px;font-size:13px;line-height:13px;color:#111;">Adele Vance</div>
<svg style="left:568px;top:380px" width="13" height="13" viewBox="0 0 13 13"><rect x="0.5" y="0.5" width="12" height="12" fill="#fff" stroke="#aaaaaa"/><rect x="2" y="2" width="9" height="9" fill="#f4f4f4"/><path d="M3 6.5 L5.5 9.5 L10 3" fill="none" stroke="#9a9a9a" stroke-width="1.4"/></svg>
<div class="t" style="left:601.0px;top:380.8px;font-size:13px;line-height:13px;color:#111;">Market Plan Review</div>
<svg style="left:856px;top:380.5px" width="16" height="12" viewBox="0 0 16 12"><path d="M0.2 6 Q3 0.4 8 0.4 Q13 0.4 15.8 6 Q13 11.6 8 11.6 Q3 11.6 0.2 6 Z" fill="#2e7fc0"/><circle cx="8" cy="6" r="3.9" fill="none" stroke="#fff" stroke-width="0.9"/><circle cx="7" cy="4.6" r="1.1" fill="#fff"/></svg>
<div class="t" style="left:874.0px;top:380.8px;font-size:13px;line-height:13px;color:#111;width:290px;overflow:hidden;height:18.2px;">Exchange Server re-created a meeting that was missing</div>
<svg style="left:1184px;top:380px" width="13" height="13" viewBox="0 0 13 13"><rect x="0.5" y="0.5" width="12" height="12" fill="#fff" stroke="#aaaaaa"/><rect x="2" y="2" width="9" height="9" fill="#f4f4f4"/></svg>
<div class="t" style="left:1229.1px;top:380.8px;font-size:13px;line-height:13px;color:#111;">9/4/2023 01:00 PM</div>
<div class="t" style="left:1356.1px;top:380.8px;font-size:13px;line-height:13px;color:#111;">9/4/2023 01:30 PM</div>
<svg style="left:1492px;top:380px" width="13" height="13" viewBox="0 0 13 13"><rect x="0.5" y="0.5" width="12" height="12" fill="#fff" stroke="#aaaaaa"/><rect x="2" y="2" width="9" height="9" fill="#f4f4f4"/></svg>
<div class="t" style="left:1532.9px;top:380.8px;font-size:13px;line-height:13px;color:#111;">8/28/2023 08:35 PM</div>
<svg style="left:1656px;top:378px" width="17" height="17" viewBox="0 0 17 17"><path d="M10 5 H1 V15 H12 V9" fill="none" stroke="#2e7fc0" stroke-width="2"/><path d="M5.5 12 L13 4.5" stroke="#2e7fc0" stroke-width="2.2"/><path d="M10.5 2.2 H16 V7.8 Z" fill="#2e7fc0"/></svg>
<div class="t" style="left:1674.3px;top:380.8px;font-size:13px;line-height:13px;color:#111;">Open</div>
<svg style="left:1748px;top:380px" width="13" height="13" viewBox="0 0 13 13"><rect x="0.5" y="0.5" width="12" height="12" fill="#fff" stroke="#aaaaaa"/><rect x="2" y="2" width="9" height="9" fill="#f4f4f4"/></svg>
<div style="left:222px;top:401px;width:19px;height:27px;background:#fff;"></div>
<div style="left:241px;top:401px;width:35px;height:27px;background:#c9dbe9;"></div>
<div style="left:276px;top:401px;width:65px;height:27px;background:#fff;"></div>
<div style="left:341px;top:401px;width:184px;height:27px;background:#fff;"></div>
<div style="left:525px;top:401px;width:24px;height:27px;background:#d3d3d3;"></div>
<div style="left:549px;top:401px;width:49px;height:27px;background:#f0f0f0;"></div>
<div style="left:598px;top:401px;width:567px;height:27px;background:#fff;"></div>
<div style="left:1165px;top:401px;width:48px;height:27px;background:#f0f0f0;"></div>
<div style="left:1213px;top:401px;width:256px;height:27px;background:#fff;"></div>
<div style="left:1469px;top:401px;width:56px;height:27px;background:#f0f0f0;"></div>
<div style="left:1525px;top:401px;width:192px;height:27px;background:#fff;"></div>
<div style="left:1717px;top:401px;width:73px;height:27px;background:#f0f0f0;"></div>
<div style="left:241px;top:428px;width:1549px;height:1px;background:#ececec;"></div>
<div style="left:241px;top:428px;width:35px;height:1px;background:#eef3f8;"></div>
<div style="left:1341px;top:401px;width:1px;height:27px;background:#ececec;"></div>
<div style="left:1653px;top:401px;width:1px;height:27px;background:#ececec;"></div>
<div style="left:296px;top:401px;width:1px;height:27px;background:#f0f0f0;"></div>
<div style="left:316px;top:401px;width:1px;height:27px;background:#f0f0f0;"></div>
<div style="left:853px;top:401px;width:1px;height:27px;background:#f0f0f0;"></div>
<div class="t" style="left:266.3px;top:408.8px;font-size:13px;line-height:13px;color:#111;">2</div>
<svg style="left:278px;top:406px" width="17" height="17" viewBox="0 0 17 17"><circle cx="8.5" cy="8.5" r="6.2" fill="none" stroke="#8a8a8a" stroke-width="1.4"/><circle cx="8.5" cy="8.5" r="3.2" fill="#a0a0a0"/></svg>
<svg style="left:299px;top:406px" width="16" height="18" viewBox="0 0 16 18"><rect x="2" y="3" width="12" height="3.2" fill="#2e7fc0"/><rect x="4" y="1" width="2" height="3" fill="#2e7fc0"/><rect x="10" y="1" width="2" height="3" fill="#2e7fc0"/><rect x="2" y="7" width="12" height="8.3" fill="#2e7fc0"/><path d="M4.5 10.8 L7 13.3 L11.5 8.8" fill="none" stroke="#fff" stroke-width="1.8"/></svg>
<div class="t" style="left:344.0px;top:408.8px;font-size:13px;line-height:13px;color:#111;">Adele Vance</div>
<svg style="left:568px;top:408px" width="13" height="13" viewBox="0 0 13 13"><rect x="0.5" y="0.5" width="12" height="12" fill="#fff" stroke="#aaaaaa"/><rect x="2" y="2" width="9" height="9" fill="#f4f4f4"/><path d="M3 6.5 L5.5 9.5 L10 3" fill="none" stroke="#9a9a9a" stroke-width="1.4"/></svg>
<div class="t" style="left:601.0px;top:408.8px;font-size:13px;line-height:13px;color:#111;">Mark 8 Project Sync</div>
<svg style="left:856px;top:408.5px" width="16" height="12" viewBox="0 0 16 12"><path d="M0.2 6 Q3 0.4 8 0.4 Q13 0.4 15.8 6 Q13 11.6 8 11.6 Q3 11.6 0.2 6 Z" fill="#2e7fc0"/><circle cx="8" cy="6" r="3.9" fill="none" stroke="#fff" stroke-width="0.9"/><circle cx="7" cy="4.6" r="1.1" fill="#fff"/></svg>
<div class="t" style="left:874.0px;top:408.8px;font-size:13px;line-height:13px;color:#111;width:290px;overflow:hidden;height:18.2px;">Exchange Server re-created a meeting that was missing</div>
<svg style="left:1184px;top:408px" width="13" height="13" viewBox="0 0 13 13"><rect x="0.5" y="0.5" width="12" height="12" fill="#fff" stroke="#aaaaaa"/><rect x="2" y="2" width="9" height="9" fill="#f4f4f4"/></svg>
<div class="t" style="left:1229.1px;top:408.8px;font-size:13px;line-height:13px;color:#111;">9/4/2023 02:30 PM</div>
<div class="t" style="left:1356.1px;top:408.8px;font-size:13px;line-height:13px;color:#111;">9/4/2023 03:00 PM</div>
<svg style="left:1492px;top:408px" width="13" height="13" viewBox="0 0 13 13"><rect x="0.5" y="0.5" width="12" height="12" fill="#fff" stroke="#aaaaaa"/><rect x="2" y="2" width="9" height="9" fill="#f4f4f4"/></svg>
<div class="t" style="left:1532.9px;top:408.8px;font-size:13px;line-height:13px;color:#111;">8/28/2023 08:35 PM</div>
<svg style="left:1656px;top:406px" width="17" height="17" viewBox="0 0 17 17"><path d="M10 5 H1 V15 H12 V9" fill="none" stroke="#2e7fc0" stroke-width="2"/><path d="M5.5 12 L13 4.5" stroke="#2e7fc0" stroke-width="2.2"/><path d="M10.5 2.2 H16 V7.8 Z" fill="#2e7fc0"/></svg>
<div class="t" style="left:1674.3px;top:408.8px;font-size:13px;line-height:13px;color:#111;">Open</div>
<svg style="left:1748px;top:408px" width="13" height="13" viewBox="0 0 13 13"><rect x="0.5" y="0.5" width="12" height="12" fill="#fff" stroke="#aaaaaa"/><rect x="2" y="2" width="9" height="9" fill="#f4f4f4"/></svg>
<div style="left:222px;top:429px;width:19px;height:27px;background:#fff;"></div>
<div style="left:241px;top:429px;width:35px;height:27px;background:#c9dbe9;"></div>
<div style="left:276px;top:429px;width:65px;height:27px;background:#fff;"></div>
<div style="left:341px;top:429px;width:184px;height:27px;background:#fff;"></div>
<div style="left:525px;top:429px;width:24px;height:27px;background:#d3d3d3;"></div>
<div style="left:549px;top:429px;width:49px;height:27px;background:#f0f0f0;"></div>
<div style="left:598px;top:429px;width:567px;height:27px;background:#fff;"></div>
<div style="left:1165px;top:429px;width:48px;height:27px;background:#f0f0f0;"></div>
<div style="left:1213px;top:429px;width:256px;height:27px;background:#fff;"></div>
<div style="left:1469px;top:429px;width:56px;height:27px;background:#f0f0f0;"></div>
<div style="left:1525px;top:429px;width:192px;height:27px;background:#fff;"></div>
<div style="left:1717px;top:429px;width:73px;height:27px;background:#f0f0f0;"></div>
<div style="left:241px;top:456px;width:1549px;height:1px;background:#ececec;"></div>
<div style="left:241px;top:456px;width:35px;height:1px;background:#eef3f8;"></div>
<div style="left:1341px;top:429px;width:1px;height:27px;background:#ececec;"></div>
<div style="left:1653px;top:429px;width:1px;height:27px;background:#ececec;"></div>
<div style="left:296px;top:429px;width:1px;height:27px;background:#f0f0f0;"></div>
<div style="left:316px;top:429px;width:1px;height:27px;background:#f0f0f0;"></div>
<div style="left:853px;top:429px;width:1px;height:27px;background:#f0f0f0;"></div>
<div class="t" style="left:266.3px;top:436.8px;font-size:13px;line-height:13px;color:#111;">2</div>
<svg style="left:278px;top:434px" width="17" height="17" viewBox="0 0 17 17"><circle cx="8.5" cy="8.5" r="6.2" fill="none" stroke="#8a8a8a" stroke-width="1.4"/><circle cx="8.5" cy="8.5" r="3.2" fill="#a0a0a0"/></svg>
<svg style="left:299px;top:434px" width="16" height="18" viewBox="0 0 16 18"><rect x="2" y="3" width="12" height="3.2" fill="#2e7fc0"/><rect x="4" y="1" width="2" height="3" fill="#2e7fc0"/><rect x="10" y="1" width="2" height="3" fill="#2e7fc0"/><rect x="2" y="7" width="12" height="8.3" fill="#2e7fc0"/><path d="M4.5 10.8 L7 13.3 L11.5 8.8" fill="none" stroke="#fff" stroke-width="1.8"/></svg>
<div class="t" style="left:344.0px;top:436.8px;font-size:13px;line-height:13px;color:#111;">Adele Vance</div>
<svg style="left:568px;top:436px" width="13" height="13" viewBox="0 0 13 13"><rect x="0.5" y="0.5" width="12" height="12" fill="#fff" stroke="#aaaaaa"/><rect x="2" y="2" width="9" height="9" fill="#f4f4f4"/><path d="M3 6.5 L5.5 9.5 L10 3" fill="none" stroke="#9a9a9a" stroke-width="1.4"/></svg>
<div class="t" style="left:601.0px;top:436.8px;font-size:13px;line-height:13px;color:#111;">Art Review</div>
<svg style="left:856px;top:436.5px" width="16" height="12" viewBox="0 0 16 12"><path d="M0.2 6 Q3 0.4 8 0.4 Q13 0.4 15.8 6 Q13 11.6 8 11.6 Q3 11.6 0.2 6 Z" fill="#2e7fc0"/><circle cx="8" cy="6" r="3.9" fill="none" stroke="#fff" stroke-width="0.9"/><circle cx="7" cy="4.6" r="1.1" fill="#fff"/></svg>
<div class="t" style="left:874.0px;top:436.8px;font-size:13px;line-height:13px;color:#111;width:290px;overflow:hidden;height:18.2px;">Exchange Server re-created a meeting that was missing</div>
<svg style="left:1184px;top:436px" width="13" height="13" viewBox="0 0 13 13"><rect x="0.5" y="0.5" width="12" height="12" fill="#fff" stroke="#aaaaaa"/><rect x="2" y="2" width="9" height="9" fill="#f4f4f4"/></svg>
<div class="t" style="left:1229.1px;top:436.8px;font-size:13px;line-height:13px;color:#111;">9/4/2023 06:00 PM</div>
<div class="t" style="left:1356.1px;top:436.8px;font-size:13px;line-height:13px;color:#111;">9/4/2023 07:00 PM</div>
<svg style="left:1492px;top:436px" width="13" height="13" viewBox="0 0 13 13"><rect x="0.5" y="0.5" width="12" height="12" fill="#fff" stroke="#aaaaaa"/><rect x="2" y="2" width="9" height="9" fill="#f4f4f4"/></svg>
<div class="t" style="left:1532.9px;top:436.8px;font-size:13px;line-height:13px;color:#111;">8/28/2023 08:35 PM</div>
<svg style="left:1656px;top:434px" width="17" height="17" viewBox="0 0 17 17"><path d="M10 5 H1 V15 H12 V9" fill="none" stroke="#2e7fc0" stroke-width="2"/><path d="M5.5 12 L13 4.5" stroke="#2e7fc0" stroke-width="2.2"/><path d="M10.5 2.2 H16 V7.8 Z" fill="#2e7fc0"/></svg>
<div class="t" style="left:1674.3px;top:436.8px;font-size:13px;line-height:13px;color:#111;">Open</div>
<svg style="left:1748px;top:436px" width="13" height="13" viewBox="0 0 13 13"><rect x="0.5" y="0.5" width="12" height="12" fill="#fff" stroke="#aaaaaa"/><rect x="2" y="2" width="9" height="9" fill="#f4f4f4"/></svg>
<div style="left:222px;top:457px;width:19px;height:27px;background:#fff;"></div>
<div style="left:241px;top:457px;width:35px;height:27px;background:#c9dbe9;"></div>
<div style="left:276px;top:457px;width:65px;height:27px;background:#fff;"></div>
<div style="left:341px;top:457px;width:184px;height:27px;background:#fff;"></div>
<div style="left:525px;top:457px;width:24px;height:27px;background:#d3d3d3;"></div>
<div style="left:549px;top:457px;width:49px;height:27px;background:#f0f0f0;"></div>
<div style="left:598px;top:457px;width:567px;height:27px;background:#fff;"></div>
<div style="left:1165px;top:457px;width:48px;height:27px;background:#f0f0f0;"></div>
<div style="left:1213px;top:457px;width:256px;height:27px;background:#fff;"></div>
<div style="left:1469px;top:457px;width:56px;height:27px;background:#f0f0f0;"></div>
<div style="left:1525px;top:457px;width:192px;height:27px;background:#fff;"></div>
<div style="left:1717px;top:457px;width:73px;height:27px;background:#f0f0f0;"></div>
<div style="left:241px;top:484px;width:1549px;height:1px;background:#ececec;"></div>
<div style="left:241px;top:484px;width:35px;height:1px;background:#eef3f8;"></div>
<div style="left:1341px;top:457px;width:1px;height:27px;background:#ececec;"></div>
<div style="left:1653px;top:457px;width:1px;height:27px;background:#ececec;"></div>
<div style="left:296px;top:457px;width:1px;height:27px;background:#f0f0f0;"></div>
<div style="left:316px;top:457px;width:1px;height:27px;background:#f0f0f0;"></div>
<div style="left:853px;top:457px;width:1px;height:27px;background:#f0f0f0;"></div>
<div class="t" style="left:266.3px;top:464.8px;font-size:13px;line-height:13px;color:#111;">2</div>
<svg style="left:278px;top:462px" width="17" height="17" viewBox="0 0 17 17"><circle cx="8.5" cy="8.5" r="6.2" fill="none" stroke="#8a8a8a" stroke-width="1.4"/><circle cx="8.5" cy="8.5" r="3.2" fill="#a0a0a0"/></svg>
<svg style="left:299px;top:462px" width="16" height="18" viewBox="0 0 16 18"><rect x="2" y="3" width="12" height="3.2" fill="#2e7fc0"/><rect x="4" y="1" width="2" height="3" fill="#2e7fc0"/><rect x="10" y="1" width="2" height="3" fill="#2e7fc0"/><rect x="2" y="7" width="12" height="8.3" fill="#2e7fc0"/><path d="M4.5 10.8 L7 13.3 L11.5 8.8" fill="none" stroke="#fff" stroke-width="1.8"/></svg>
<div class="t" style="left:344.0px;top:464.8px;font-size:13px;line-height:13px;color:#111;">Adele Vance</div>
<svg style="left:568px;top:464px" width="13" height="13" viewBox="0 0 13 13"><rect x="0.5" y="0.5" width="12" height="12" fill="#fff" stroke="#aaaaaa"/><rect x="2" y="2" width="9" height="9" fill="#f4f4f4"/><path d="M3 6.5 L5.5 9.5 L10 3" fill="none" stroke="#9a9a9a" stroke-width="1.4"/></svg>
<div class="t" style="left:601.0px;top:464.8px;font-size:13px;line-height:13px;color:#111;">Briefing with Amy</div>
<svg style="left:1184px;top:464px" width="13" height="13" viewBox="0 0 13 13"><rect x="0.5" y="0.5" width="12" height="12" fill="#fff" stroke="#aaaaaa"/><rect x="2" y="2" width="9" height="9" fill="#f4f4f4"/></svg>
<div class="t" style="left:1221.9px;top:464.8px;font-size:13px;line-height:13px;color:#111;">9/27/2023 11:30 AM</div>
<div class="t" style="left:1348.9px;top:464.8px;font-size:13px;line-height:13px;color:#111;">9/27/2023 12:00 PM</div>
<svg style="left:1492px;top:464px" width="13" height="13" viewBox="0 0 13 13"><rect x="0.5" y="0.5" width="12" height="12" fill="#fff" stroke="#aaaaaa"/><rect x="2" y="2" width="9" height="9" fill="#f4f4f4"/><path d="M3 6.5 L5.5 9.5 L10 3" fill="none" stroke="#9a9a9a" stroke-width="1.4"/></svg>
<div class="t" style="left:1532.9px;top:464.8px;font-size:13px;line-height:13px;color:#111;">9/27/2023 11:36 AM</div>
<svg style="left:1656px;top:462px" width="17" height="17" viewBox="0 0 17 17"><path d="M10 5 H1 V15 H12 V9" fill="none" stroke="#2e7fc0" stroke-width="2"/><path d="M5.5 12 L13 4.5" stroke="#2e7fc0" stroke-width="2.2"/><path d="M10.5 2.2 H16 V7.8 Z" fill="#2e7fc0"/></svg>
<div class="t" style="left:1674.3px;top:464.8px;font-size:13px;line-height:13px;color:#111;">Open</div>
<svg style="left:1748px;top:464px" width="13" height="13" viewBox="0 0 13 13"><rect x="0.5" y="0.5" width="12" height="12" fill="#fff" stroke="#aaaaaa"/><rect x="2" y="2" width="9" height="9" fill="#f4f4f4"/></svg>
<div style="left:222px;top:485px;width:19px;height:27px;background:#fff;"></div>
<div style="left:241px;top:485px;width:35px;height:27px;background:#c9dbe9;"></div>
<div style="left:276px;top:485px;width:65px;height:27px;background:#fff;"></div>
<div style="left:341px;top:485px;width:184px;height:27px;background:#fff;"></div>
<div style="left:525px;top:485px;width:24px;height:27px;background:#d3d3d3;"></div>
<div style="left:549px;top:485px;width:49px;height:27px;background:#f0f0f0;"></div>
<div style="left:598px;top:485px;width:567px;height:27px;background:#fff;"></div>
<div style="left:1165px;top:485px;width:48px;height:27px;background:#f0f0f0;"></div>
<div style="left:1213px;top:485px;width:256px;height:27px;background:#fff;"></div>
<div style="left:1469px;top:485px;width:56px;height:27px;background:#f0f0f0;"></div>
<div style="left:1525px;top:485px;width:192px;height:27px;background:#fff;"></div>
<div style="left:1717px;top:485px;width:73px;height:27px;background:#f0f0f0;"></div>
<div style="left:241px;top:512px;width:1549px;height:1px;background:#ececec;"></div>
<div style="left:241px;top:512px;width:35px;height:1px;background:#eef3f8;"></div>
<div style="left:1341px;top:485px;width:1px;height:27px;background:#ececec;"></div>
<div style="left:1653px;top:485px;width:1px;height:27px;background:#ececec;"></div>
<div style="left:296px;top:485px;width:1px;height:27px;background:#f0f0f0;"></div>
<div style="left:316px;top:485px;width:1px;height:27px;background:#f0f0f0;"></div>
<div style="left:853px;top:485px;width:1px;height:27px;background:#f0f0f0;"></div>
<div class="t" style="left:266.3px;top:492.8px;font-size:13px;line-height:13px;color:#111;">2</div>
<svg style="left:278px;top:490px" width="17" height="17" viewBox="0 0 17 17"><circle cx="8.5" cy="8.5" r="6.2" fill="none" stroke="#8a8a8a" stroke-width="1.4"/><circle cx="8.5" cy="8.5" r="3.2" fill="#a0a0a0"/></svg>
<svg style="left:299px;top:490px" width="16" height="18" viewBox="0 0 16 18"><rect x="2" y="3" width="12" height="3.2" fill="#2e7fc0"/><rect x="4" y="1" width="2" height="3" fill="#2e7fc0"/><rect x="10" y="1" width="2" height="3" fill="#2e7fc0"/><rect x="2" y="7" width="12" height="8.3" fill="#2e7fc0"/><path d="M4.5 10.8 L7 13.3 L11.5 8.8" fill="none" stroke="#fff" stroke-width="1.8"/></svg>
<div class="t" style="left:344.0px;top:492.8px;font-size:13px;line-height:13px;color:#111;">Adele Vance</div>
<svg style="left:568px;top:492px" width="13" height="13" viewBox="0 0 13 13"><rect x="0.5" y="0.5" width="12" height="12" fill="#fff" stroke="#aaaaaa"/><rect x="2" y="2" width="9" height="9" fill="#f4f4f4"/></svg>
<div class="t" style="left:601.0px;top:492.8px;font-size:13px;line-height:13px;color:#111;">Virtual consultation - Adele Other</div>
<svg style="left:856px;top:492.5px" width="16" height="12" viewBox="0 0 16 12"><path d="M0.2 6 Q3 0.4 8 0.4 Q13 0.4 15.8 6 Q13 11.6 8 11.6 Q3 11.6 0.2 6 Z" fill="#2e7fc0"/><circle cx="8" cy="6" r="3.9" fill="none" stroke="#fff" stroke-width="0.9"/><circle cx="7" cy="4.6" r="1.1" fill="#fff"/></svg>
<div class="t" style="left:874.0px;top:492.8px;font-size:13px;line-height:13px;color:#111;width:290px;overflow:hidden;height:18.2px;">Customer Info -------------------- Name: Adele Other</div>
<svg style="left:1184px;top:492px" width="13" height="13" viewBox="0 0 13 13"><rect x="0.5" y="0.5" width="12" height="12" fill="#fff" stroke="#aaaaaa"/><rect x="2" y="2" width="9" height="9" fill="#f4f4f4"/></svg>
<div class="t" style="left:1214.7px;top:492.8px;font-size:13px;line-height:13px;color:#111;">12/29/2023 10:00 AM</div>
<div class="t" style="left:1341.7px;top:492.8px;font-size:13px;line-height:13px;color:#111;">12/29/2023 10:30 AM</div>
<svg style="left:1492px;top:492px" width="13" height="13" viewBox="0 0 13 13"><rect x="0.5" y="0.5" width="12" height="12" fill="#fff" stroke="#aaaaaa"/><rect x="2" y="2" width="9" height="9" fill="#f4f4f4"/></svg>
<div class="t" style="left:1532.9px;top:492.8px;font-size:13px;line-height:13px;color:#111;">5/21/2024 05:16 PM</div>
<svg style="left:1656px;top:490px" width="17" height="17" viewBox="0 0 17 17"><path d="M10 5 H1 V15 H12 V9" fill="none" stroke="#2e7fc0" stroke-width="2"/><path d="M5.5 12 L13 4.5" stroke="#2e7fc0" stroke-width="2.2"/><path d="M10.5 2.2 H16 V7.8 Z" fill="#2e7fc0"/></svg>
<div class="t" style="left:1674.3px;top:492.8px;font-size:13px;line-height:13px;color:#111;">Open</div>
<svg style="left:1748px;top:492px" width="13" height="13" viewBox="0 0 13 13"><rect x="0.5" y="0.5" width="12" height="12" fill="#fff" stroke="#aaaaaa"/><rect x="2" y="2" width="9" height="9" fill="#f4f4f4"/></svg>
<div style="left:222px;top:513px;width:19px;height:27px;background:#fff;"></div>
<div style="left:241px;top:513px;width:35px;height:27px;background:#c9dbe9;"></div>
<div style="left:276px;top:513px;width:65px;height:27px;background:#fff;"></div>
<div style="left:341px;top:513px;width:184px;height:27px;background:#fff;"></div>
<div style="left:525px;top:513px;width:24px;height:27px;background:#d3d3d3;"></div>
<div style="left:549px;top:513px;width:49px;height:27px;background:#f0f0f0;"></div>
<div style="left:598px;top:513px;width:567px;height:27px;background:#fff;"></div>
<div style="left:1165px;top:513px;width:48px;height:27px;background:#f0f0f0;"></div>
<div style="left:1213px;top:513px;width:256px;height:27px;background:#fff;"></div>
<div style="left:1469px;top:513px;width:56px;height:27px;background:#f0f0f0;"></div>
<div style="left:1525px;top:513px;width:192px;height:27px;background:#fff;"></div>
<div style="left:1717px;top:513px;width:73px;height:27px;background:#f0f0f0;"></div>
<div style="left:241px;top:540px;width:1549px;height:1px;background:#ececec;"></div>
<div style="left:241px;top:540px;width:35px;height:1px;background:#eef3f8;"></div>
<div style="left:1341px;top:513px;width:1px;height:27px;background:#ececec;"></div>
<div style="left:1653px;top:513px;width:1px;height:27px;background:#ececec;"></div>
<div style="left:296px;top:513px;width:1px;height:27px;background:#f0f0f0;"></div>
<div style="left:316px;top:513px;width:1px;height:27px;background:#f0f0f0;"></div>
<div style="left:853px;top:513px;width:1px;height:27px;background:#f0f0f0;"></div>
<div class="t" style="left:266.3px;top:520.8px;font-size:13px;line-height:13px;color:#111;">2</div>
<svg style="left:278px;top:518px" width="17" height="17" viewBox="0 0 17 17"><circle cx="8.5" cy="8.5" r="6.2" fill="none" stroke="#8a8a8a" stroke-width="1.4"/><circle cx="8.5" cy="8.5" r="3.2" fill="#a0a0a0"/></svg>
<svg style="left:299px;top:518px" width="16" height="18" viewBox="0 0 16 18"><rect x="2" y="3" width="12" height="3.2" fill="#2e7fc0"/><rect x="4" y="1" width="2" height="3" fill="#2e7fc0"/><rect x="10" y="1" width="2" height="3" fill="#2e7fc0"/><rect x="2" y="7" width="12" height="8.3" fill="#2e7fc0"/><path d="M4.5 10.8 L7 13.3 L11.5 8.8" fill="none" stroke="#fff" stroke-width="1.8"/></svg>
<div class="t" style="left:344.0px;top:520.8px;font-size:13px;line-height:13px;color:#111;">Adele Vance</div>
<svg style="left:568px;top:520px" width="13" height="13" viewBox="0 0 13 13"><rect x="0.5" y="0.5" width="12" height="12" fill="#fff" stroke="#aaaaaa"/><rect x="2" y="2" width="9" height="9" fill="#f4f4f4"/><path d="M3 6.5 L5.5 9.5 L10 3" fill="none" stroke="#9a9a9a" stroke-width="1.4"/></svg>
<div class="t" style="left:601.0px;top:520.8px;font-size:13px;line-height:13px;color:#111;">Marketing review</div>
<svg style="left:856px;top:520.5px" width="16" height="12" viewBox="0 0 16 12"><path d="M0.2 6 Q3 0.4 8 0.4 Q13 0.4 15.8 6 Q13 11.6 8 11.6 Q3 11.6 0.2 6 Z" fill="#2e7fc0"/><circle cx="8" cy="6" r="3.9" fill="none" stroke="#fff" stroke-width="0.9"/><circle cx="7" cy="4.6" r="1.1" fill="#fff"/></svg>
<div class="t" style="left:874.0px;top:520.8px;font-size:13px;line-height:13px;color:#111;width:290px;overflow:hidden;height:18.2px;">Review webpage ______________________________</div>
<svg style="left:1184px;top:520px" width="13" height="13" viewBox="0 0 13 13"><rect x="0.5" y="0.5" width="12" height="12" fill="#fff" stroke="#aaaaaa"/><rect x="2" y="2" width="9" height="9" fill="#f4f4f4"/></svg>
<div class="t" style="left:1221.9px;top:520.8px;font-size:13px;line-height:13px;color:#111;">3/18/2024 06:30 PM</div>
<div class="t" style="left:1348.9px;top:520.8px;font-size:13px;line-height:13px;color:#111;">3/18/2024 07:00 PM</div>
<svg style="left:1492px;top:520px" width="13" height="13" viewBox="0 0 13 13"><rect x="0.5" y="0.5" width="12" height="12" fill="#fff" stroke="#aaaaaa"/><rect x="2" y="2" width="9" height="9" fill="#f4f4f4"/><path d="M3 6.5 L5.5 9.5 L10 3" fill="none" stroke="#9a9a9a" stroke-width="1.4"/></svg>
<div class="t" style="left:1532.9px;top:520.8px;font-size:13px;line-height:13px;color:#111;">3/15/2024 06:01 PM</div>
<svg style="left:1656px;top:518px" width="17" height="17" viewBox="0 0 17 17"><path d="M10 5 H1 V15 H12 V9" fill="none" stroke="#2e7fc0" stroke-width="2"/><path d="M5.5 12 L13 4.5" stroke="#2e7fc0" stroke-width="2.2"/><path d="M10.5 2.2 H16 V7.8 Z" fill="#2e7fc0"/></svg>
<div class="t" style="left:1674.3px;top:520.8px;font-size:13px;line-height:13px;color:#111;">Open</div>
<svg style="left:1748px;top:520px" width="13" height="13" viewBox="0 0 13 13"><rect x="0.5" y="0.5" width="12" height="12" fill="#fff" stroke="#aaaaaa"/><rect x="2" y="2" width="9" height="9" fill="#f4f4f4"/><path d="M3 6.5 L5.5 9.5 L10 3" fill="none" stroke="#9a9a9a" stroke-width="1.4"/></svg>
<div style="left:222px;top:541px;width:19px;height:27px;background:#fff;"></div>
<div style="left:241px;top:541px;width:35px;height:27px;background:#6aa9e0;"></div>
<div style="left:276px;top:541px;width:65px;height:27px;background:#fff;"></div>
<div style="left:277px;top:541px;width:19px;height:27px;background:#0078d7;"></div>
<div style="left:297px;top:541px;width:19px;height:27px;background:#0078d7;"></div>
<div style="left:317px;top:541px;width:24px;height:27px;background:#6cb8d8;"></div>
<div style="left:341px;top:541px;width:184px;height:27px;background:#0078d7;"></div>
<div style="left:525px;top:541px;width:24px;height:27px;background:#6aa4d8;"></div>
<div style="left:549px;top:541px;width:49px;height:27px;background:#78b4e6;"></div>
<div style="left:598px;top:541px;width:567px;height:27px;background:#0078d7;"></div>
<div style="left:1165px;top:541px;width:48px;height:27px;background:#78b4e6;"></div>
<div style="left:1213px;top:541px;width:256px;height:27px;background:#0078d7;"></div>
<div style="left:1469px;top:541px;width:56px;height:27px;background:#78b4e6;"></div>
<div style="left:1525px;top:541px;width:192px;height:27px;background:#0078d7;"></div>
<div style="left:1717px;top:541px;width:73px;height:27px;background:#78b4e6;"></div>
<div style="left:241px;top:568px;width:1549px;height:1px;background:#ececec;"></div>
<div style="left:241px;top:568px;width:35px;height:1px;background:#eef3f8;"></div>
<div style="left:1341px;top:541px;width:1px;height:27px;background:#6aa4e0;"></div>
<div style="left:1653px;top:541px;width:1px;height:27px;background:#6aa4e0;"></div>
<div style="left:296px;top:541px;width:1px;height:27px;background:#fff;"></div>
<div style="left:316px;top:541px;width:1px;height:27px;background:#fff;"></div>
<div style="left:853px;top:541px;width:1px;height:27px;background:#fff;"></div>
<div class="t" style="left:266.3px;top:548.8px;font-size:13px;line-height:13px;color:#fff;">2</div>
<svg style="left:278px;top:546px" width="17" height="17" viewBox="0 0 17 17"><rect x="0" y="0" width="17" height="17" fill="#fff"/><circle cx="8.5" cy="8.5" r="6.2" fill="none" stroke="#8a8a8a" stroke-width="1.4"/><circle cx="8.5" cy="8.5" r="3.2" fill="#a0a0a0"/></svg>
<svg style="left:299px;top:545px" width="16" height="19" viewBox="0 0 16 19"><path d="M1.5 4.5 H14.5 V17.5 H1.5 Z" fill="#2e7fc0" stroke="#fff" stroke-width="1.2"/><rect x="4" y="1" width="2" height="4" fill="#fff"/><rect x="10" y="1" width="2" height="4" fill="#fff"/><rect x="2" y="7.5" width="12" height="1.2" fill="#fff"/><path d="M4.5 12 L7 14.5 L11.5 10" fill="none" stroke="#fff" stroke-width="1.8"/></svg>
<svg style="left:319px;top:546px" width="17" height="17" viewBox="0 0 17 17"><rect x="0" y="0" width="17" height="17" fill="#fff"/><path d="M1 1 H15 V16 H1 Z" fill="#8e4fb5"/><rect x="3.5" y="2.5" width="9" height="6" fill="#fff"/><rect x="5" y="4" width="6" height="0.8" fill="#bbb"/><rect x="5" y="6" width="6" height="0.8" fill="#bbb"/><rect x="4" y="11" width="3" height="5" fill="#fff"/><circle cx="12.5" cy="12.5" r="4.5" fill="#2f9a5e"/><path d="M10.3 12.5 L12 14.2 L14.8 11" fill="none" stroke="#fff" stroke-width="1.4"/></svg>
<div class="t" style="left:344.0px;top:548.8px;font-size:13px;line-height:13px;color:#fff;">Adele Vance</div>
<svg style="left:568px;top:548px" width="13" height="13" viewBox="0 0 13 13"><rect x="0.5" y="0.5" width="12" height="12" fill="#fff" stroke="#aaaaaa"/><rect x="2" y="2" width="9" height="9" fill="#f4f4f4"/></svg>
<div class="t" style="left:601.0px;top:548.8px;font-size:13px;line-height:13px;color:#fff;">Project ABC: phase 2</div>
<div style="left:856px;top:547px;width:16px;height:16px;background:#fff;"></div>
<svg style="left:856px;top:548.5px" width="16" height="12" viewBox="0 0 16 12"><path d="M0.2 6 Q3 0.4 8 0.4 Q13 0.4 15.8 6 Q13 11.6 8 11.6 Q3 11.6 0.2 6 Z" fill="#2e7fc0"/><circle cx="8" cy="6" r="3.9" fill="none" stroke="#fff" stroke-width="0.9"/><circle cx="7" cy="4.6" r="1.1" fill="#fff"/></svg>
<div class="t" style="left:874.0px;top:548.8px;font-size:13px;line-height:13px;color:#fff;width:290px;overflow:hidden;height:18.2px;">see-user-activity-logs.webp options-grid-tools-user</div>
<svg style="left:1184px;top:548px" width="13" height="13" viewBox="0 0 13 13"><rect x="0.5" y="0.5" width="12" height="12" fill="#fff" stroke="#aaaaaa"/><rect x="2" y="2" width="9" height="9" fill="#f4f4f4"/></svg>
<div class="t" style="left:1221.9px;top:548.8px;font-size:13px;line-height:13px;color:#fff;">5/30/2024 02:30 PM</div>
<div class="t" style="left:1348.9px;top:548.8px;font-size:13px;line-height:13px;color:#fff;">5/30/2024 02:30 PM</div>
<svg style="left:1492px;top:548px" width="13" height="13" viewBox="0 0 13 13"><rect x="0.5" y="0.5" width="12" height="12" fill="#fff" stroke="#aaaaaa"/><rect x="2" y="2" width="9" height="9" fill="#f4f4f4"/></svg>
<div class="t" style="left:1532.9px;top:548.8px;font-size:13px;line-height:13px;color:#fff;">5/23/2024 05:50 PM</div>
<svg style="left:1656px;top:546px" width="17" height="17" viewBox="0 0 17 17"><path d="M10 5 H1 V15 H12 V9" fill="none" stroke="#fff" stroke-width="2"/><path d="M5.5 12 L13 4.5" stroke="#fff" stroke-width="2.2"/><path d="M10.5 2.2 H16 V7.8 Z" fill="#fff"/></svg>
<div class="t" style="left:1674.3px;top:548.8px;font-size:13px;line-height:13px;color:#111;">Open</div>
<svg style="left:1748px;top:548px" width="13" height="13" viewBox="0 0 13 13"><rect x="0.5" y="0.5" width="12" height="12" fill="#fff" stroke="#aaaaaa"/><rect x="2" y="2" width="9" height="9" fill="#f4f4f4"/></svg>
<div style="left:222px;top:569px;width:19px;height:27px;background:#fff;"></div>
<div style="left:241px;top:569px;width:35px;height:27px;background:#c9dbe9;"></div>
<div style="left:276px;top:569px;width:65px;height:27px;background:#fff;"></div>
<div style="left:341px;top:569px;width:184px;height:27px;background:#fff;"></div>
<div style="left:525px;top:569px;width:24px;height:27px;background:#d3d3d3;"></div>
<div style="left:549px;top:569px;width:49px;height:27px;background:#f0f0f0;"></div>
<div style="left:598px;top:569px;width:567px;height:27px;background:#fff;"></div>
<div style="left:1165px;top:569px;width:48px;height:27px;background:#f0f0f0;"></div>
<div style="left:1213px;top:569px;width:256px;height:27px;background:#fff;"></div>
<div style="left:1469px;top:569px;width:56px;height:27px;background:#f0f0f0;"></div>
<div style="left:1525px;top:569px;width:192px;height:27px;background:#fff;"></div>
<div style="left:1717px;top:569px;width:73px;height:27px;background:#f0f0f0;"></div>
<div style="left:241px;top:596px;width:1549px;height:1px;background:#ececec;"></div>
<div style="left:241px;top:596px;width:35px;height:1px;background:#eef3f8;"></div>
<div style="left:1341px;top:569px;width:1px;height:27px;background:#ececec;"></div>
<div style="left:1653px;top:569px;width:1px;height:27px;background:#ececec;"></div>
<div style="left:296px;top:569px;width:1px;height:27px;background:#f0f0f0;"></div>
<div style="left:316px;top:569px;width:1px;height:27px;background:#f0f0f0;"></div>
<div style="left:853px;top:569px;width:1px;height:27px;background:#f0f0f0;"></div>
<div class="t" style="left:266.3px;top:576.8px;font-size:13px;line-height:13px;color:#111;">2</div>
<svg style="left:278px;top:574px" width="17" height="17" viewBox="0 0 17 17"><circle cx="8.5" cy="8.5" r="6.2" fill="none" stroke="#8a8a8a" stroke-width="1.4"/><circle cx="8.5" cy="8.5" r="3.2" fill="#a0a0a0"/></svg>
<svg style="left:299px;top:574px" width="16" height="18" viewBox="0 0 16 18"><rect x="2" y="3" width="12" height="3.2" fill="#2e7fc0"/><rect x="4" y="1" width="2" height="3" fill="#2e7fc0"/><rect x="10" y="1" width="2" height="3" fill="#2e7fc0"/><rect x="2" y="7" width="12" height="8.3" fill="#2e7fc0"/><path d="M4.5 10.8 L7 13.3 L11.5 8.8" fill="none" stroke="#fff" stroke-width="1.8"/></svg>
<div class="t" style="left:344.0px;top:576.8px;font-size:13px;line-height:13px;color:#111;">Adele Vance</div>
<svg style="left:568px;top:576px" width="13" height="13" viewBox="0 0 13 13"><rect x="0.5" y="0.5" width="12" height="12" fill="#fff" stroke="#aaaaaa"/><rect x="2" y="2" width="9" height="9" fill="#f4f4f4"/></svg>
<div class="t" style="left:601.0px;top:576.8px;font-size:13px;line-height:13px;color:#111;">Review project DEF</div>
<svg style="left:1184px;top:576px" width="13" height="13" viewBox="0 0 13 13"><rect x="0.5" y="0.5" width="12" height="12" fill="#fff" stroke="#aaaaaa"/><rect x="2" y="2" width="9" height="9" fill="#f4f4f4"/></svg>
<div class="t" style="left:1221.9px;top:576.8px;font-size:13px;line-height:13px;color:#111;">5/23/2024 01:00 PM</div>
<div class="t" style="left:1348.9px;top:576.8px;font-size:13px;line-height:13px;color:#111;">5/23/2024 02:00 PM</div>
<svg style="left:1492px;top:576px" width="13" height="13" viewBox="0 0 13 13"><rect x="0.5" y="0.5" width="12" height="12" fill="#fff" stroke="#aaaaaa"/><rect x="2" y="2" width="9" height="9" fill="#f4f4f4"/></svg>
<div class="t" style="left:1532.9px;top:576.8px;font-size:13px;line-height:13px;color:#111;">5/22/2024 05:57 PM</div>
<svg style="left:1656px;top:574px" width="17" height="17" viewBox="0 0 17 17"><path d="M10 5 H1 V15 H12 V9" fill="none" stroke="#2e7fc0" stroke-width="2"/><path d="M5.5 12 L13 4.5" stroke="#2e7fc0" stroke-width="2.2"/><path d="M10.5 2.2 H16 V7.8 Z" fill="#2e7fc0"/></svg>
<div class="t" style="left:1674.3px;top:576.8px;font-size:13px;line-height:13px;color:#111;">Open</div>
<svg style="left:1748px;top:576px" width="13" height="13" viewBox="0 0 13 13"><rect x="0.5" y="0.5" width="12" height="12" fill="#fff" stroke="#aaaaaa"/><rect x="2" y="2" width="9" height="9" fill="#f4f4f4"/><path d="M3 6.5 L5.5 9.5 L10 3" fill="none" stroke="#9a9a9a" stroke-width="1.4"/></svg>
<div style="left:222px;top:597px;width:1568px;height:27px;background:#fff;"></div>
<div style="left:222px;top:597px;width:54px;height:27px;background:#91abc8;"></div>
<div style="left:525px;top:597px;width:1265px;height:27px;background:#d6d6d6;"></div>
<div style="left:549px;top:597px;width:1px;height:27px;background:#ececec;"></div>
<div style="left:598px;top:597px;width:1px;height:27px;background:#ececec;"></div>
<div style="left:853px;top:597px;width:1px;height:27px;background:#ececec;"></div>
<div style="left:1165px;top:597px;width:1px;height:27px;background:#ececec;"></div>
<div style="left:1213px;top:597px;width:1px;height:27px;background:#ececec;"></div>
<div style="left:1341px;top:597px;width:1px;height:27px;background:#ececec;"></div>
<div style="left:1469px;top:597px;width:1px;height:27px;background:#ececec;"></div>
<div style="left:1525px;top:597px;width:1px;height:27px;background:#ececec;"></div>
<div style="left:1653px;top:597px;width:1px;height:27px;background:#ececec;"></div>
<div style="left:1717px;top:597px;width:1px;height:27px;background:#ececec;"></div>
<div style="left:296px;top:597px;width:1px;height:27px;background:#f0f0f0;"></div>
<div style="left:316px;top:597px;width:1px;height:27px;background:#f0f0f0;"></div>
<div style="left:222px;top:624px;width:1568px;height:1px;background:#7a7a7a;"></div>
<div style="left:222px;top:597px;width:1px;height:27px;background:#8a8a8a;"></div>
<div style="left:222px;top:596px;width:1568px;height:1px;background:#7a7a7a;"></div>
<svg style="left:227px;top:603px" width="16" height="16" viewBox="0 0 16 16"><rect x="0.5" y="0.5" width="15" height="15" fill="#2c3e57" stroke="#fff"/><rect x="3" y="7" width="10" height="2" fill="#fff"/></svg>
<div class="t" style="left:265.3px;top:604.0px;font-size:13px;line-height:13px;color:#111;font-weight:bold;">1</div>
<svg style="left:300px;top:603px" width="15" height="15" viewBox="0 0 15 15"><circle cx="7.5" cy="4.5" r="4" fill="#2e7fc0"/><path d="M0.5 14.5 Q0.5 9.5 5 9.5 H10 Q14.5 9.5 14.5 14.5 Z" fill="#2e7fc0"/></svg>
<div class="t" style="left:344.0px;top:604.0px;font-size:13px;line-height:13px;color:#000;font-weight:bold;">Alex Wilber</div>
<div style="left:222px;top:625px;width:19px;height:27px;background:#fff;"></div>
<div style="left:241px;top:625px;width:35px;height:27px;background:#c9dbe9;"></div>
<div style="left:276px;top:625px;width:65px;height:27px;background:#fff;"></div>
<div style="left:341px;top:625px;width:184px;height:27px;background:#fff;"></div>
<div style="left:525px;top:625px;width:24px;height:27px;background:#d3d3d3;"></div>
<div style="left:549px;top:625px;width:49px;height:27px;background:#f0f0f0;"></div>
<div style="left:598px;top:625px;width:567px;height:27px;background:#fff;"></div>
<div style="left:1165px;top:625px;width:48px;height:27px;background:#f0f0f0;"></div>
<div style="left:1213px;top:625px;width:256px;height:27px;background:#fff;"></div>
<div style="left:1469px;top:625px;width:56px;height:27px;background:#f0f0f0;"></div>
<div style="left:1525px;top:625px;width:192px;height:27px;background:#fff;"></div>
<div style="left:1717px;top:625px;width:73px;height:27px;background:#f0f0f0;"></div>
<div style="left:241px;top:652px;width:1549px;height:1px;background:#ececec;"></div>
<div style="left:241px;top:652px;width:35px;height:1px;background:#eef3f8;"></div>
<div style="left:1341px;top:625px;width:1px;height:27px;background:#ececec;"></div>
<div style="left:1653px;top:625px;width:1px;height:27px;background:#ececec;"></div>
<div style="left:296px;top:625px;width:1px;height:27px;background:#f0f0f0;"></div>
<div style="left:316px;top:625px;width:1px;height:27px;background:#f0f0f0;"></div>
<div style="left:853px;top:625px;width:1px;height:27px;background:#f0f0f0;"></div>
<div class="t" style="left:266.3px;top:632.8px;font-size:13px;line-height:13px;color:#111;">2</div>
<svg style="left:278px;top:630px" width="17" height="17" viewBox="0 0 17 17"><circle cx="8.5" cy="8.5" r="6.2" fill="none" stroke="#8a8a8a" stroke-width="1.4"/><circle cx="8.5" cy="8.5" r="3.2" fill="#a0a0a0"/></svg>
<svg style="left:299px;top:630px" width="16" height="18" viewBox="0 0 16 18"><rect x="2" y="3" width="12" height="3.2" fill="#2e7fc0"/><rect x="4" y="1" width="2" height="3" fill="#2e7fc0"/><rect x="10" y="1" width="2" height="3" fill="#2e7fc0"/><rect x="2" y="7" width="12" height="8.3" fill="#2e7fc0"/><path d="M4.5 10.8 L7 13.3 L11.5 8.8" fill="none" stroke="#fff" stroke-width="1.8"/></svg>
<div class="t" style="left:344.0px;top:632.8px;font-size:13px;line-height:13px;color:#111;">Alex Wilber</div>
<svg style="left:568px;top:632px" width="13" height="13" viewBox="0 0 13 13"><rect x="0.5" y="0.5" width="12" height="12" fill="#fff" stroke="#aaaaaa"/><rect x="2" y="2" width="9" height="9" fill="#f4f4f4"/><path d="M3 6.5 L5.5 9.5 L10 3" fill="none" stroke="#9a9a9a" stroke-width="1.4"/></svg>
<div class="t" style="left:601.0px;top:632.8px;font-size:13px;line-height:13px;color:#111;">X1050 Marketing sync</div>
<svg style="left:1184px;top:632px" width="13" height="13" viewBox="0 0 13 13"><rect x="0.5" y="0.5" width="12" height="12" fill="#fff" stroke="#aaaaaa"/><rect x="2" y="2" width="9" height="9" fill="#f4f4f4"/></svg>
<div class="t" style="left:1221.9px;top:632.8px;font-size:13px;line-height:13px;color:#111;">6/25/2019 03:30 PM</div>
<div class="t" style="left:1348.9px;top:632.8px;font-size:13px;line-height:13px;color:#111;">6/25/2019 04:30 PM</div>
<svg style="left:1492px;top:632px" width="13" height="13" viewBox="0 0 13 13"><rect x="0.5" y="0.5" width="12" height="12" fill="#fff" stroke="#aaaaaa"/><rect x="2" y="2" width="9" height="9" fill="#f4f4f4"/></svg>
<div class="t" style="left:1532.9px;top:632.8px;font-size:13px;line-height:13px;color:#111;">8/25/2023 09:42 PM</div>
<svg style="left:1656px;top:630px" width="17" height="17" viewBox="0 0 17 17"><path d="M10 5 H1 V15 H12 V9" fill="none" stroke="#2e7fc0" stroke-width="2"/><path d="M5.5 12 L13 4.5" stroke="#2e7fc0" stroke-width="2.2"/><path d="M10.5 2.2 H16 V7.8 Z" fill="#2e7fc0"/></svg>
<div class="t" style="left:1674.3px;top:632.8px;font-size:13px;line-height:13px;color:#111;">Open</div>
<svg style="left:1748px;top:632px" width="13" height="13" viewBox="0 0 13 13"><rect x="0.5" y="0.5" width="12" height="12" fill="#fff" stroke="#aaaaaa"/><rect x="2" y="2" width="9" height="9" fill="#f4f4f4"/></svg>
<div style="left:222px;top:653px;width:19px;height:27px;background:#fff;"></div>
<div style="left:241px;top:653px;width:35px;height:27px;background:#c9dbe9;"></div>
<div style="left:276px;top:653px;width:65px;height:27px;background:#fff;"></div>
<div style="left:341px;top:653px;width:184px;height:27px;background:#fff;"></div>
<div style="left:525px;top:653px;width:24px;height:27px;background:#d3d3d3;"></div>
<div style="left:549px;top:653px;width:49px;height:27px;background:#f0f0f0;"></div>
<div style="left:598px;top:653px;width:567px;height:27px;background:#fff;"></div>
<div style="left:1165px;top:653px;width:48px;height:27px;background:#f0f0f0;"></div>
<div style="left:1213px;top:653px;width:256px;height:27px;background:#fff;"></div>
<div style="left:1469px;top:653px;width:56px;height:27px;background:#f0f0f0;"></div>
<div style="left:1525px;top:653px;width:192px;height:27px;background:#fff;"></div>
<div style="left:1717px;top:653px;width:73px;height:27px;background:#f0f0f0;"></div>
<div style="left:241px;top:680px;width:1549px;height:1px;background:#ececec;"></div>
<div style="left:241px;top:680px;width:35px;height:1px;background:#eef3f8;"></div>
<div style="left:1341px;top:653px;width:1px;height:27px;background:#ececec;"></div>
<div style="left:1653px;top:653px;width:1px;height:27px;background:#ececec;"></div>
<div style="left:296px;top:653px;width:1px;height:27px;background:#f0f0f0;"></div>
<div style="left:316px;top:653px;width:1px;height:27px;background:#f0f0f0;"></div>
<div style="left:853px;top:653px;width:1px;height:27px;background:#f0f0f0;"></div>
<div class="t" style="left:266.3px;top:660.8px;font-size:13px;line-height:13px;color:#111;">2</div>
<svg style="left:278px;top:658px" width="17" height="17" viewBox="0 0 17 17"><circle cx="8.5" cy="8.5" r="6.2" fill="none" stroke="#8a8a8a" stroke-width="1.4"/><circle cx="8.5" cy="8.5" r="3.2" fill="#a0a0a0"/></svg>
<svg style="left:299px;top:658px" width="16" height="18" viewBox="0 0 16 18"><rect x="2" y="3" width="12" height="3.2" fill="#2e7fc0"/><rect x="4" y="1" width="2" height="3" fill="#2e7fc0"/><rect x="10" y="1" width="2" height="3" fill="#2e7fc0"/><rect x="2" y="7" width="12" height="8.3" fill="#2e7fc0"/><path d="M4.5 10.8 L7 13.3 L11.5 8.8" fill="none" stroke="#fff" stroke-width="1.8"/></svg>
<div class="t" style="left:344.0px;top:660.8px;font-size:13px;line-height:13px;color:#111;">Alex Wilber</div>
<svg style="left:568px;top:660px" width="13" height="13" viewBox="0 0 13 13"><rect x="0.5" y="0.5" width="12" height="12" fill="#fff" stroke="#aaaaaa"/><rect x="2" y="2" width="9" height="9" fill="#f4f4f4"/><path d="M3 6.5 L5.5 9.5 L10 3" fill="none" stroke="#9a9a9a" stroke-width="1.4"/></svg>
<div class="t" style="left:601.0px;top:660.8px;font-size:13px;line-height:13px;color:#111;">Company All Hands</div>
<svg style="left:856px;top:660.5px" width="16" height="12" viewBox="0 0 16 12"><path d="M0.2 6 Q3 0.4 8 0.4 Q13 0.4 15.8 6 Q13 11.6 8 11.6 Q3 11.6 0.2 6 Z" fill="#2e7fc0"/><circle cx="8" cy="6" r="3.9" fill="none" stroke="#fff" stroke-width="0.9"/><circle cx="7" cy="4.6" r="1.1" fill="#fff"/></svg>
<div class="t" style="left:874.0px;top:660.8px;font-size:13px;line-height:13px;color:#111;width:290px;overflow:hidden;height:18.2px;">Exchange Server re-created a meeting that was missing</div>
<svg style="left:1184px;top:660px" width="13" height="13" viewBox="0 0 13 13"><rect x="0.5" y="0.5" width="12" height="12" fill="#fff" stroke="#aaaaaa"/><rect x="2" y="2" width="9" height="9" fill="#f4f4f4"/></svg>
<div class="t" style="left:1229.1px;top:660.8px;font-size:13px;line-height:13px;color:#111;">9/4/2023 08:00 AM</div>
<div class="t" style="left:1356.1px;top:660.8px;font-size:13px;line-height:13px;color:#111;">9/4/2023 08:30 AM</div>
<svg style="left:1492px;top:660px" width="13" height="13" viewBox="0 0 13 13"><rect x="0.5" y="0.5" width="12" height="12" fill="#fff" stroke="#aaaaaa"/><rect x="2" y="2" width="9" height="9" fill="#f4f4f4"/></svg>
<div class="t" style="left:1532.9px;top:660.8px;font-size:13px;line-height:13px;color:#111;">8/28/2023 08:36 PM</div>
<svg style="left:1656px;top:658px" width="17" height="17" viewBox="0 0 17 17"><path d="M10 5 H1 V15 H12 V9" fill="none" stroke="#2e7fc0" stroke-width="2"/><path d="M5.5 12 L13 4.5" stroke="#2e7fc0" stroke-width="2.2"/><path d="M10.5 2.2 H16 V7.8 Z" fill="#2e7fc0"/></svg>
<div class="t" style="left:1674.3px;top:660.8px;font-size:13px;line-height:13px;color:#111;">Open</div>
<svg style="left:1748px;top:660px" width="13" height="13" viewBox="0 0 13 13"><rect x="0.5" y="0.5" width="12" height="12" fill="#fff" stroke="#aaaaaa"/><rect x="2" y="2" width="9" height="9" fill="#f4f4f4"/></svg>
<div style="left:222px;top:681px;width:19px;height:27px;background:#fff;"></div>
<div style="left:241px;top:681px;width:35px;height:27px;background:#c9dbe9;"></div>
<div style="left:276px;top:681px;width:65px;height:27px;background:#fff;"></div>
<div style="left:341px;top:681px;width:184px;height:27px;background:#fff;"></div>
<div style="left:525px;top:681px;width:24px;height:27px;background:#d3d3d3;"></div>
<div style="left:549px;top:681px;width:49px;height:27px;background:#f0f0f0;"></div>
<div style="left:598px;top:681px;width:567px;height:27px;background:#fff;"></div>
<div style="left:1165px;top:681px;width:48px;height:27px;background:#f0f0f0;"></div>
<div style="left:1213px;top:681px;width:256px;height:27px;background:#fff;"></div>
<div style="left:1469px;top:681px;width:56px;height:27px;background:#f0f0f0;"></div>
<div style="left:1525px;top:681px;width:192px;height:27px;background:#fff;"></div>
<div style="left:1717px;top:681px;width:73px;height:27px;background:#f0f0f0;"></div>
<div style="left:241px;top:708px;width:1549px;height:1px;background:#ececec;"></div>
<div style="left:241px;top:708px;width:35px;height:1px;background:#eef3f8;"></div>
<div style="left:1341px;top:681px;width:1px;height:27px;background:#ececec;"></div>
<div style="left:1653px;top:681px;width:1px;height:27px;background:#ececec;"></div>
<div style="left:296px;top:681px;width:1px;height:27px;background:#f0f0f0;"></div>
<div style="left:316px;top:681px;width:1px;height:27px;background:#f0f0f0;"></div>
<div style="left:853px;top:681px;width:1px;height:27px;background:#f0f0f0;"></div>
<div class="t" style="left:266.3px;top:688.8px;font-size:13px;line-height:13px;color:#111;">2</div>
<svg style="left:278px;top:686px" width="17" height="17" viewBox="0 0 17 17"><circle cx="8.5" cy="8.5" r="6.2" fill="none" stroke="#8a8a8a" stroke-width="1.4"/><circle cx="8.5" cy="8.5" r="3.2" fill="#a0a0a0"/></svg>
<svg style="left:299px;top:686px" width="16" height="18" viewBox="0 0 16 18"><rect x="2" y="3" width="12" height="3.2" fill="#2e7fc0"/><rect x="4" y="1" width="2" height="3" fill="#2e7fc0"/><rect x="10" y="1" width="2" height="3" fill="#2e7fc0"/><rect x="2" y="7" width="12" height="8.3" fill="#2e7fc0"/><path d="M4.5 10.8 L7 13.3 L11.5 8.8" fill="none" stroke="#fff" stroke-width="1.8"/></svg>
<div class="t" style="left:344.0px;top:688.8px;font-size:13px;line-height:13px;color:#111;">Alex Wilber</div>
<svg style="left:568px;top:688px" width="13" height="13" viewBox="0 0 13 13"><rect x="0.5" y="0.5" width="12" height="12" fill="#fff" stroke="#aaaaaa"/><rect x="2" y="2" width="9" height="9" fill="#f4f4f4"/><path d="M3 6.5 L5.5 9.5 L10 3" fill="none" stroke="#9a9a9a" stroke-width="1.4"/></svg>
<div class="t" style="left:601.0px;top:688.8px;font-size:13px;line-height:13px;color:#111;">X1050 Marketing sync</div>
<svg style="left:856px;top:688.5px" width="16" height="12" viewBox="0 0 16 12"><path d="M0.2 6 Q3 0.4 8 0.4 Q13 0.4 15.8 6 Q13 11.6 8 11.6 Q3 11.6 0.2 6 Z" fill="#2e7fc0"/><circle cx="8" cy="6" r="3.9" fill="none" stroke="#fff" stroke-width="0.9"/><circle cx="7" cy="4.6" r="1.1" fill="#fff"/></svg>
<div class="t" style="left:874.0px;top:688.8px;font-size:13px;line-height:13px;color:#111;width:290px;overflow:hidden;height:18.2px;">Exchange Server re-created a meeting that was missing</div>
<svg style="left:1184px;top:688px" width="13" height="13" viewBox="0 0 13 13"><rect x="0.5" y="0.5" width="12" height="12" fill="#fff" stroke="#aaaaaa"/><rect x="2" y="2" width="9" height="9" fill="#f4f4f4"/></svg>
<div class="t" style="left:1229.1px;top:688.8px;font-size:13px;line-height:13px;color:#111;">9/4/2023 03:30 PM</div>
<div class="t" style="left:1356.1px;top:688.8px;font-size:13px;line-height:13px;color:#111;">9/4/2023 04:30 PM</div>
<svg style="left:1492px;top:688px" width="13" height="13" viewBox="0 0 13 13"><rect x="0.5" y="0.5" width="12" height="12" fill="#fff" stroke="#aaaaaa"/><rect x="2" y="2" width="9" height="9" fill="#f4f4f4"/></svg>
<div class="t" style="left:1532.9px;top:688.8px;font-size:13px;line-height:13px;color:#111;">8/28/2023 08:36 PM</div>
<svg style="left:1656px;top:686px" width="17" height="17" viewBox="0 0 17 17"><path d="M10 5 H1 V15 H12 V9" fill="none" stroke="#2e7fc0" stroke-width="2"/><path d="M5.5 12 L13 4.5" stroke="#2e7fc0" stroke-width="2.2"/><path d="M10.5 2.2 H16 V7.8 Z" fill="#2e7fc0"/></svg>
<div class="t" style="left:1674.3px;top:688.8px;font-size:13px;line-height:13px;color:#111;">Open</div>
<svg style="left:1748px;top:688px" width="13" height="13" viewBox="0 0 13 13"><rect x="0.5" y="0.5" width="12" height="12" fill="#fff" stroke="#aaaaaa"/><rect x="2" y="2" width="9" height="9" fill="#f4f4f4"/></svg>
<div style="left:222px;top:709px;width:19px;height:27px;background:#fff;"></div>
<div style="left:241px;top:709px;width:35px;height:27px;background:#c9dbe9;"></div>
<div style="left:276px;top:709px;width:65px;height:27px;background:#fff;"></div>
<div style="left:341px;top:709px;width:184px;height:27px;background:#fff;"></div>
<div style="left:525px;top:709px;width:24px;height:27px;background:#d3d3d3;"></div>
<div style="left:549px;top:709px;width:49px;height:27px;background:#f0f0f0;"></div>
<div style="left:598px;top:709px;width:567px;height:27px;background:#fff;"></div>
<div style="left:1165px;top:709px;width:48px;height:27px;background:#f0f0f0;"></div>
<div style="left:1213px;top:709px;width:256px;height:27px;background:#fff;"></div>
<div style="left:1469px;top:709px;width:56px;height:27px;background:#f0f0f0;"></div>
<div style="left:1525px;top:709px;width:192px;height:27px;background:#fff;"></div>
<div style="left:1717px;top:709px;width:73px;height:27px;background:#f0f0f0;"></div>
<div style="left:241px;top:736px;width:1549px;height:1px;background:#ececec;"></div>
<div style="left:241px;top:736px;width:35px;height:1px;background:#eef3f8;"></div>
<div style="left:1341px;top:709px;width:1px;height:27px;background:#ececec;"></div>
<div style="left:1653px;top:709px;width:1px;height:27px;background:#ececec;"></div>
<div style="left:296px;top:709px;width:1px;height:27px;background:#f0f0f0;"></div>
<div style="left:316px;top:709px;width:1px;height:27px;background:#f0f0f0;"></div>
<div style="left:853px;top:709px;width:1px;height:27px;background:#f0f0f0;"></div>
<div class="t" style="left:266.3px;top:716.8px;font-size:13px;line-height:13px;color:#111;">2</div>
<svg style="left:278px;top:714px" width="17" height="17" viewBox="0 0 17 17"><circle cx="8.5" cy="8.5" r="6.2" fill="none" stroke="#8a8a8a" stroke-width="1.4"/><circle cx="8.5" cy="8.5" r="3.2" fill="#a0a0a0"/></svg>
<svg style="left:299px;top:714px" width="16" height="18" viewBox="0 0 16 18"><rect x="2" y="3" width="12" height="3.2" fill="#2e7fc0"/><rect x="4" y="1" width="2" height="3" fill="#2e7fc0"/><rect x="10" y="1" width="2" height="3" fill="#2e7fc0"/><rect x="2" y="7" width="12" height="8.3" fill="#2e7fc0"/><path d="M4.5 10.8 L7 13.3 L11.5 8.8" fill="none" stroke="#fff" stroke-width="1.8"/></svg>
<div class="t" style="left:344.0px;top:716.8px;font-size:13px;line-height:13px;color:#111;">Alex Wilber</div>
<svg style="left:568px;top:716px" width="13" height="13" viewBox="0 0 13 13"><rect x="0.5" y="0.5" width="12" height="12" fill="#fff" stroke="#aaaaaa"/><rect x="2" y="2" width="9" height="9" fill="#f4f4f4"/><path d="M3 6.5 L5.5 9.5 L10 3" fill="none" stroke="#9a9a9a" stroke-width="1.4"/></svg>
<div class="t" style="left:601.0px;top:716.8px;font-size:13px;line-height:13px;color:#111;">H2 Goals</div>
<svg style="left:856px;top:716.5px" width="16" height="12" viewBox="0 0 16 12"><path d="M0.2 6 Q3 0.4 8 0.4 Q13 0.4 15.8 6 Q13 11.6 8 11.6 Q3 11.6 0.2 6 Z" fill="#2e7fc0"/><circle cx="8" cy="6" r="3.9" fill="none" stroke="#fff" stroke-width="0.9"/><circle cx="7" cy="4.6" r="1.1" fill="#fff"/></svg>
<div class="t" style="left:874.0px;top:716.8px;font-size:13px;line-height:13px;color:#111;width:290px;overflow:hidden;height:18.2px;">Exchange Server re-created a meeting that was missing</div>
<svg style="left:1184px;top:716px" width="13" height="13" viewBox="0 0 13 13"><rect x="0.5" y="0.5" width="12" height="12" fill="#fff" stroke="#aaaaaa"/><rect x="2" y="2" width="9" height="9" fill="#f4f4f4"/></svg>
<div class="t" style="left:1229.1px;top:716.8px;font-size:13px;line-height:13px;color:#111;">9/6/2023 05:00 PM</div>
<div class="t" style="left:1356.1px;top:716.8px;font-size:13px;line-height:13px;color:#111;">9/6/2023 06:00 PM</div>
<svg style="left:1492px;top:716px" width="13" height="13" viewBox="0 0 13 13"><rect x="0.5" y="0.5" width="12" height="12" fill="#fff" stroke="#aaaaaa"/><rect x="2" y="2" width="9" height="9" fill="#f4f4f4"/></svg>
<div class="t" style="left:1532.9px;top:716.8px;font-size:13px;line-height:13px;color:#111;">8/30/2023 10:46 PM</div>
<svg style="left:1656px;top:714px" width="17" height="17" viewBox="0 0 17 17"><path d="M10 5 H1 V15 H12 V9" fill="none" stroke="#2e7fc0" stroke-width="2"/><path d="M5.5 12 L13 4.5" stroke="#2e7fc0" stroke-width="2.2"/><path d="M10.5 2.2 H16 V7.8 Z" fill="#2e7fc0"/></svg>
<div class="t" style="left:1674.3px;top:716.8px;font-size:13px;line-height:13px;color:#111;">Open</div>
<svg style="left:1748px;top:716px" width="13" height="13" viewBox="0 0 13 13"><rect x="0.5" y="0.5" width="12" height="12" fill="#fff" stroke="#aaaaaa"/><rect x="2" y="2" width="9" height="9" fill="#f4f4f4"/></svg>
<div style="left:222px;top:737px;width:19px;height:27px;background:#fff;"></div>
<div style="left:241px;top:737px;width:35px;height:27px;background:#c9dbe9;"></div>
<div style="left:276px;top:737px;width:65px;height:27px;background:#fff;"></div>
<div style="left:341px;top:737px;width:184px;height:27px;background:#fff;"></div>
<div style="left:525px;top:737px;width:24px;height:27px;background:#d3d3d3;"></div>
<div style="left:549px;top:737px;width:49px;height:27px;background:#f0f0f0;"></div>
<div style="left:598px;top:737px;width:567px;height:27px;background:#fff;"></div>
<div style="left:1165px;top:737px;width:48px;height:27px;background:#f0f0f0;"></div>
<div style="left:1213px;top:737px;width:256px;height:27px;background:#fff;"></div>
<div style="left:1469px;top:737px;width:56px;height:27px;background:#f0f0f0;"></div>
<div style="left:1525px;top:737px;width:192px;height:27px;background:#fff;"></div>
<div style="left:1717px;top:737px;width:73px;height:27px;background:#f0f0f0;"></div>
<div style="left:241px;top:764px;width:1549px;height:1px;background:#ececec;"></div>
<div style="left:241px;top:764px;width:35px;height:1px;background:#eef3f8;"></div>
<div style="left:1341px;top:737px;width:1px;height:27px;background:#ececec;"></div>
<div style="left:1653px;top:737px;width:1px;height:27px;background:#ececec;"></div>
<div style="left:296px;top:737px;width:1px;height:27px;background:#f0f0f0;"></div>
<div style="left:316px;top:737px;width:1px;height:27px;background:#f0f0f0;"></div>
<div style="left:853px;top:737px;width:1px;height:27px;background:#f0f0f0;"></div>
<div class="t" style="left:266.3px;top:744.8px;font-size:13px;line-height:13px;color:#111;">2</div>
<svg style="left:278px;top:742px" width="17" height="17" viewBox="0 0 17 17"><circle cx="8.5" cy="8.5" r="6.2" fill="none" stroke="#8a8a8a" stroke-width="1.4"/><circle cx="8.5" cy="8.5" r="3.2" fill="#a0a0a0"/></svg>
<svg style="left:299px;top:742px" width="16" height="18" viewBox="0 0 16 18"><rect x="2" y="3" width="12" height="3.2" fill="#2e7fc0"/><rect x="4" y="1" width="2" height="3" fill="#2e7fc0"/><rect x="10" y="1" width="2" height="3" fill="#2e7fc0"/><rect x="2" y="7" width="12" height="8.3" fill="#2e7fc0"/><path d="M4.5 10.8 L7 13.3 L11.5 8.8" fill="none" stroke="#fff" stroke-width="1.8"/></svg>
<div class="t" style="left:344.0px;top:744.8px;font-size:13px;line-height:13px;color:#111;">Alex Wilber</div>
<svg style="left:568px;top:744px" width="13" height="13" viewBox="0 0 13 13"><rect x="0.5" y="0.5" width="12" height="12" fill="#fff" stroke="#aaaaaa"/><rect x="2" y="2" width="9" height="9" fill="#f4f4f4"/></svg>
<div class="t" style="left:601.0px;top:744.8px;font-size:13px;line-height:13px;color:#111;">Planogram Training</div>
<svg style="left:856px;top:744.5px" width="16" height="12" viewBox="0 0 16 12"><path d="M0.2 6 Q3 0.4 8 0.4 Q13 0.4 15.8 6 Q13 11.6 8 11.6 Q3 11.6 0.2 6 Z" fill="#2e7fc0"/><circle cx="8" cy="6" r="3.9" fill="none" stroke="#fff" stroke-width="0.9"/><circle cx="7" cy="4.6" r="1.1" fill="#fff"/></svg>
<div class="t" style="left:874.0px;top:744.8px;font-size:13px;line-height:13px;color:#111;width:290px;overflow:hidden;height:18.2px;">Exchange Server re-created a meeting that was missing</div>
<svg style="left:1184px;top:744px" width="13" height="13" viewBox="0 0 13 13"><rect x="0.5" y="0.5" width="12" height="12" fill="#fff" stroke="#aaaaaa"/><rect x="2" y="2" width="9" height="9" fill="#f4f4f4"/></svg>
<div class="t" style="left:1229.1px;top:744.8px;font-size:13px;line-height:13px;color:#111;">9/5/2023 06:00 PM</div>
<div class="t" style="left:1356.1px;top:744.8px;font-size:13px;line-height:13px;color:#111;">9/5/2023 07:00 PM</div>
<svg style="left:1492px;top:744px" width="13" height="13" viewBox="0 0 13 13"><rect x="0.5" y="0.5" width="12" height="12" fill="#fff" stroke="#aaaaaa"/><rect x="2" y="2" width="9" height="9" fill="#f4f4f4"/></svg>
<div class="t" style="left:1540.1px;top:744.8px;font-size:13px;line-height:13px;color:#111;">9/1/2023 07:08 PM</div>
<svg style="left:1656px;top:742px" width="17" height="17" viewBox="0 0 17 17"><path d="M10 5 H1 V15 H12 V9" fill="none" stroke="#2e7fc0" stroke-width="2"/><path d="M5.5 12 L13 4.5" stroke="#2e7fc0" stroke-width="2.2"/><path d="M10.5 2.2 H16 V7.8 Z" fill="#2e7fc0"/></svg>
<div class="t" style="left:1674.3px;top:744.8px;font-size:13px;line-height:13px;color:#111;">Open</div>
<svg style="left:1748px;top:744px" width="13" height="13" viewBox="0 0 13 13"><rect x="0.5" y="0.5" width="12" height="12" fill="#fff" stroke="#aaaaaa"/><rect x="2" y="2" width="9" height="9" fill="#f4f4f4"/></svg>
<div style="left:222px;top:765px;width:19px;height:27px;background:#fff;"></div>
<div style="left:241px;top:765px;width:35px;height:27px;background:#c9dbe9;"></div>
<div style="left:276px;top:765px;width:65px;height:27px;background:#fff;"></div>
<div style="left:341px;top:765px;width:184px;height:27px;background:#fff;"></div>
<div style="left:525px;top:765px;width:24px;height:27px;background:#d3d3d3;"></div>
<div style="left:549px;top:765px;width:49px;height:27px;background:#f0f0f0;"></div>
<div style="left:598px;top:765px;width:567px;height:27px;background:#fff;"></div>
<div style="left:1165px;top:765px;width:48px;height:27px;background:#f0f0f0;"></div>
<div style="left:1213px;top:765px;width:256px;height:27px;background:#fff;"></div>
<div style="left:1469px;top:765px;width:56px;height:27px;background:#f0f0f0;"></div>
<div style="left:1525px;top:765px;width:192px;height:27px;background:#fff;"></div>
<div style="left:1717px;top:765px;width:73px;height:27px;background:#f0f0f0;"></div>
<div style="left:241px;top:792px;width:1549px;height:1px;background:#ececec;"></div>
<div style="left:241px;top:792px;width:35px;height:1px;background:#eef3f8;"></div>
<div style="left:1341px;top:765px;width:1px;height:27px;background:#ececec;"></div>
<div style="left:1653px;top:765px;width:1px;height:27px;background:#ececec;"></div>
<div style="left:296px;top:765px;width:1px;height:27px;background:#f0f0f0;"></div>
<div style="left:316px;top:765px;width:1px;height:27px;background:#f0f0f0;"></div>
<div style="left:853px;top:765px;width:1px;height:27px;background:#f0f0f0;"></div>
<div class="t" style="left:266.3px;top:772.8px;font-size:13px;line-height:13px;color:#111;">2</div>
<svg style="left:278px;top:770px" width="17" height="17" viewBox="0 0 17 17"><circle cx="8.5" cy="8.5" r="6.2" fill="none" stroke="#8a8a8a" stroke-width="1.4"/><circle cx="8.5" cy="8.5" r="3.2" fill="#a0a0a0"/></svg>
<svg style="left:299px;top:770px" width="16" height="18" viewBox="0 0 16 18"><rect x="2" y="3" width="12" height="3.2" fill="#2e7fc0"/><rect x="4" y="1" width="2" height="3" fill="#2e7fc0"/><rect x="10" y="1" width="2" height="3" fill="#2e7fc0"/><rect x="2" y="7" width="12" height="8.3" fill="#2e7fc0"/><path d="M4.5 10.8 L7 13.3 L11.5 8.8" fill="none" stroke="#fff" stroke-width="1.8"/></svg>
<div class="t" style="left:344.0px;top:772.8px;font-size:13px;line-height:13px;color:#111;">Alex Wilber</div>
<svg style="left:568px;top:772px" width="13" height="13" viewBox="0 0 13 13"><rect x="0.5" y="0.5" width="12" height="12" fill="#fff" stroke="#aaaaaa"/><rect x="2" y="2" width="9" height="9" fill="#f4f4f4"/><path d="M3 6.5 L5.5 9.5 L10 3" fill="none" stroke="#9a9a9a" stroke-width="1.4"/></svg>
<div class="t" style="left:601.0px;top:772.8px;font-size:13px;line-height:13px;color:#111;">Design review</div>
<svg style="left:856px;top:772.5px" width="16" height="12" viewBox="0 0 16 12"><path d="M0.2 6 Q3 0.4 8 0.4 Q13 0.4 15.8 6 Q13 11.6 8 11.6 Q3 11.6 0.2 6 Z" fill="#2e7fc0"/><circle cx="8" cy="6" r="3.9" fill="none" stroke="#fff" stroke-width="0.9"/><circle cx="7" cy="4.6" r="1.1" fill="#fff"/></svg>
<div class="t" style="left:874.0px;top:772.8px;font-size:13px;line-height:13px;color:#111;width:290px;overflow:hidden;height:18.2px;">Exchange Server re-created a meeting that was missing</div>
<svg style="left:1184px;top:772px" width="13" height="13" viewBox="0 0 13 13"><rect x="0.5" y="0.5" width="12" height="12" fill="#fff" stroke="#aaaaaa"/><rect x="2" y="2" width="9" height="9" fill="#f4f4f4"/></svg>
<div class="t" style="left:1229.1px;top:772.8px;font-size:13px;line-height:13px;color:#111;">9/4/2023 02:00 PM</div>
<div class="t" style="left:1356.1px;top:772.8px;font-size:13px;line-height:13px;color:#111;">9/4/2023 03:00 PM</div>
<svg style="left:1492px;top:772px" width="13" height="13" viewBox="0 0 13 13"><rect x="0.5" y="0.5" width="12" height="12" fill="#fff" stroke="#aaaaaa"/><rect x="2" y="2" width="9" height="9" fill="#f4f4f4"/></svg>
<div class="t" style="left:1532.9px;top:772.8px;font-size:13px;line-height:13px;color:#111;">9/15/2023 08:38 PM</div>
<svg style="left:1656px;top:770px" width="17" height="17" viewBox="0 0 17 17"><path d="M10 5 H1 V15 H12 V9" fill="none" stroke="#2e7fc0" stroke-width="2"/><path d="M5.5 12 L13 4.5" stroke="#2e7fc0" stroke-width="2.2"/><path d="M10.5 2.2 H16 V7.8 Z" fill="#2e7fc0"/></svg>
<div class="t" style="left:1674.3px;top:772.8px;font-size:13px;line-height:13px;color:#111;">Open</div>
<svg style="left:1748px;top:772px" width="13" height="13" viewBox="0 0 13 13"><rect x="0.5" y="0.5" width="12" height="12" fill="#fff" stroke="#aaaaaa"/><rect x="2" y="2" width="9" height="9" fill="#f4f4f4"/></svg>
<div style="left:222px;top:793px;width:19px;height:27px;background:#fff;"></div>
<div style="left:241px;top:793px;width:35px;height:27px;background:#c9dbe9;"></div>
<div style="left:276px;top:793px;width:65px;height:27px;background:#fff;"></div>
<div style="left:341px;top:793px;width:184px;height:27px;background:#fff;"></div>
<div style="left:525px;top:793px;width:24px;height:27px;background:#d3d3d3;"></div>
<div style="left:549px;top:793px;width:49px;height:27px;background:#f0f0f0;"></div>
<div style="left:598px;top:793px;width:567px;height:27px;background:#fff;"></div>
<div style="left:1165px;top:793px;width:48px;height:27px;background:#f0f0f0;"></div>
<div style="left:1213px;top:793px;width:256px;height:27px;background:#fff;"></div>
<div style="left:1469px;top:793px;width:56px;height:27px;background:#f0f0f0;"></div>
<div style="left:1525px;top:793px;width:192px;height:27px;background:#fff;"></div>
<div style="left:1717px;top:793px;width:73px;height:27px;background:#f0f0f0;"></div>
<div style="left:241px;top:820px;width:1549px;height:1px;background:#ececec;"></div>
<div style="left:241px;top:820px;width:35px;height:1px;background:#eef3f8;"></div>
<div style="left:1341px;top:793px;width:1px;height:27px;background:#ececec;"></div>
<div style="left:1653px;top:793px;width:1px;height:27px;background:#ececec;"></div>
<div style="left:296px;top:793px;width:1px;height:27px;background:#f0f0f0;"></div>
<div style="left:316px;top:793px;width:1px;height:27px;background:#f0f0f0;"></div>
<div style="left:853px;top:793px;width:1px;height:27px;background:#f0f0f0;"></div>
<div class="t" style="left:266.3px;top:800.8px;font-size:13px;line-height:13px;color:#111;">2</div>
<svg style="left:278px;top:798px" width="17" height="17" viewBox="0 0 17 17"><circle cx="8.5" cy="8.5" r="6.2" fill="none" stroke="#8a8a8a" stroke-width="1.4"/><circle cx="8.5" cy="8.5" r="3.2" fill="#a0a0a0"/></svg>
<svg style="left:299px;top:798px" width="16" height="18" viewBox="0 0 16 18"><rect x="2" y="3" width="12" height="3.2" fill="#2e7fc0"/><rect x="4" y="1" width="2" height="3" fill="#2e7fc0"/><rect x="10" y="1" width="2" height="3" fill="#2e7fc0"/><rect x="2" y="7" width="12" height="8.3" fill="#2e7fc0"/><path d="M4.5 10.8 L7 13.3 L11.5 8.8" fill="none" stroke="#fff" stroke-width="1.8"/></svg>
<div class="t" style="left:344.0px;top:800.8px;font-size:13px;line-height:13px;color:#111;">Alex Wilber</div>
<svg style="left:568px;top:800px" width="13" height="13" viewBox="0 0 13 13"><rect x="0.5" y="0.5" width="12" height="12" fill="#fff" stroke="#aaaaaa"/><rect x="2" y="2" width="9" height="9" fill="#f4f4f4"/><path d="M3 6.5 L5.5 9.5 L10 3" fill="none" stroke="#9a9a9a" stroke-width="1.4"/></svg>
<div class="t" style="left:601.0px;top:800.8px;font-size:13px;line-height:13px;color:#111;">Digital Offsite</div>
<svg style="left:856px;top:800.5px" width="16" height="12" viewBox="0 0 16 12"><path d="M0.2 6 Q3 0.4 8 0.4 Q13 0.4 15.8 6 Q13 11.6 8 11.6 Q3 11.6 0.2 6 Z" fill="#2e7fc0"/><circle cx="8" cy="6" r="3.9" fill="none" stroke="#fff" stroke-width="0.9"/><circle cx="7" cy="4.6" r="1.1" fill="#fff"/></svg>
<div class="t" style="left:874.0px;top:800.8px;font-size:13px;line-height:13px;color:#111;width:290px;overflow:hidden;height:18.2px;">Exchange Server re-created a meeting that was missing</div>
<svg style="left:1184px;top:800px" width="13" height="13" viewBox="0 0 13 13"><rect x="0.5" y="0.5" width="12" height="12" fill="#fff" stroke="#aaaaaa"/><rect x="2" y="2" width="9" height="9" fill="#f4f4f4"/></svg>
<div class="t" style="left:1229.1px;top:800.8px;font-size:13px;line-height:13px;color:#111;">9/6/2023 02:00 PM</div>
<div class="t" style="left:1356.1px;top:800.8px;font-size:13px;line-height:13px;color:#111;">9/6/2023 08:00 PM</div>
<svg style="left:1492px;top:800px" width="13" height="13" viewBox="0 0 13 13"><rect x="0.5" y="0.5" width="12" height="12" fill="#fff" stroke="#aaaaaa"/><rect x="2" y="2" width="9" height="9" fill="#f4f4f4"/></svg>
<div class="t" style="left:1532.9px;top:800.8px;font-size:13px;line-height:13px;color:#111;">9/15/2023 08:38 PM</div>
<svg style="left:1656px;top:798px" width="17" height="17" viewBox="0 0 17 17"><path d="M10 5 H1 V15 H12 V9" fill="none" stroke="#2e7fc0" stroke-width="2"/><path d="M5.5 12 L13 4.5" stroke="#2e7fc0" stroke-width="2.2"/><path d="M10.5 2.2 H16 V7.8 Z" fill="#2e7fc0"/></svg>
<div class="t" style="left:1674.3px;top:800.8px;font-size:13px;line-height:13px;color:#111;">Open</div>
<svg style="left:1748px;top:800px" width="13" height="13" viewBox="0 0 13 13"><rect x="0.5" y="0.5" width="12" height="12" fill="#fff" stroke="#aaaaaa"/><rect x="2" y="2" width="9" height="9" fill="#f4f4f4"/></svg>
<div style="left:222px;top:821px;width:19px;height:27px;background:#fff;"></div>
<div style="left:241px;top:821px;width:35px;height:27px;background:#c9dbe9;"></div>
<div style="left:276px;top:821px;width:65px;height:27px;background:#fff;"></div>
<div style="left:341px;top:821px;width:184px;height:27px;background:#fff;"></div>
<div style="left:525px;top:821px;width:24px;height:27px;background:#d3d3d3;"></div>
<div style="left:549px;top:821px;width:49px;height:27px;background:#f0f0f0;"></div>
<div style="left:598px;top:821px;width:567px;height:27px;background:#fff;"></div>
<div style="left:1165px;top:821px;width:48px;height:27px;background:#f0f0f0;"></div>
<div style="left:1213px;top:821px;width:256px;height:27px;background:#fff;"></div>
<div style="left:1469px;top:821px;width:56px;height:27px;background:#f0f0f0;"></div>
<div style="left:1525px;top:821px;width:192px;height:27px;background:#fff;"></div>
<div style="left:1717px;top:821px;width:73px;height:27px;background:#f0f0f0;"></div>
<div style="left:241px;top:848px;width:1549px;height:1px;background:#ececec;"></div>
<div style="left:241px;top:848px;width:35px;height:1px;background:#eef3f8;"></div>
<div style="left:1341px;top:821px;width:1px;height:27px;background:#ececec;"></div>
<div style="left:1653px;top:821px;width:1px;height:27px;background:#ececec;"></div>
<div style="left:296px;top:821px;width:1px;height:27px;background:#f0f0f0;"></div>
<div style="left:316px;top:821px;width:1px;height:27px;background:#f0f0f0;"></div>
<div style="left:853px;top:821px;width:1px;height:27px;background:#f0f0f0;"></div>
<div class="t" style="left:266.3px;top:828.8px;font-size:13px;line-height:13px;color:#111;">2</div>
<svg style="left:278px;top:826px" width="17" height="17" viewBox="0 0 17 17"><circle cx="8.5" cy="8.5" r="6.2" fill="none" stroke="#8a8a8a" stroke-width="1.4"/><circle cx="8.5" cy="8.5" r="3.2" fill="#a0a0a0"/></svg>
<svg style="left:299px;top:826px" width="16" height="18" viewBox="0 0 16 18"><rect x="2" y="3" width="12" height="3.2" fill="#2e7fc0"/><rect x="4" y="1" width="2" height="3" fill="#2e7fc0"/><rect x="10" y="1" width="2" height="3" fill="#2e7fc0"/><rect x="2" y="7" width="12" height="8.3" fill="#2e7fc0"/><path d="M4.5 10.8 L7 13.3 L11.5 8.8" fill="none" stroke="#fff" stroke-width="1.8"/></svg>
<div class="t" style="left:344.0px;top:828.8px;font-size:13px;line-height:13px;color:#111;">Alex Wilber</div>
<svg style="left:568px;top:828px" width="13" height="13" viewBox="0 0 13 13"><rect x="0.5" y="0.5" width="12" height="12" fill="#fff" stroke="#aaaaaa"/><rect x="2" y="2" width="9" height="9" fill="#f4f4f4"/><path d="M3 6.5 L5.5 9.5 L10 3" fill="none" stroke="#9a9a9a" stroke-width="1.4"/></svg>
<div class="t" style="left:601.0px;top:828.8px;font-size:13px;line-height:13px;color:#111;">Design editorial sync</div>
<svg style="left:856px;top:828.5px" width="16" height="12" viewBox="0 0 16 12"><path d="M0.2 6 Q3 0.4 8 0.4 Q13 0.4 15.8 6 Q13 11.6 8 11.6 Q3 11.6 0.2 6 Z" fill="#2e7fc0"/><circle cx="8" cy="6" r="3.9" fill="none" stroke="#fff" stroke-width="0.9"/><circle cx="7" cy="4.6" r="1.1" fill="#fff"/></svg>
<div class="t" style="left:874.0px;top:828.8px;font-size:13px;line-height:13px;color:#111;width:290px;overflow:hidden;height:18.2px;">Exchange Server re-created a meeting that was missing</div>
<svg style="left:1184px;top:828px" width="13" height="13" viewBox="0 0 13 13"><rect x="0.5" y="0.5" width="12" height="12" fill="#fff" stroke="#aaaaaa"/><rect x="2" y="2" width="9" height="9" fill="#f4f4f4"/></svg>
<div class="t" style="left:1229.1px;top:828.8px;font-size:13px;line-height:13px;color:#111;">9/4/2023 05:30 PM</div>
<div class="t" style="left:1356.1px;top:828.8px;font-size:13px;line-height:13px;color:#111;">9/4/2023 06:30 PM</div>
<svg style="left:1492px;top:828px" width="13" height="13" viewBox="0 0 13 13"><rect x="0.5" y="0.5" width="12" height="12" fill="#fff" stroke="#aaaaaa"/><rect x="2" y="2" width="9" height="9" fill="#f4f4f4"/></svg>
<div class="t" style="left:1532.9px;top:828.8px;font-size:13px;line-height:13px;color:#111;">9/15/2023 08:38 PM</div>
<svg style="left:1656px;top:826px" width="17" height="17" viewBox="0 0 17 17"><path d="M10 5 H1 V15 H12 V9" fill="none" stroke="#2e7fc0" stroke-width="2"/><path d="M5.5 12 L13 4.5" stroke="#2e7fc0" stroke-width="2.2"/><path d="M10.5 2.2 H16 V7.8 Z" fill="#2e7fc0"/></svg>
<div class="t" style="left:1674.3px;top:828.8px;font-size:13px;line-height:13px;color:#111;">Open</div>
<svg style="left:1748px;top:828px" width="13" height="13" viewBox="0 0 13 13"><rect x="0.5" y="0.5" width="12" height="12" fill="#fff" stroke="#aaaaaa"/><rect x="2" y="2" width="9" height="9" fill="#f4f4f4"/></svg>
<div style="left:222px;top:849px;width:19px;height:27px;background:#fff;"></div>
<div style="left:241px;top:849px;width:35px;height:27px;background:#c9dbe9;"></div>
<div style="left:276px;top:849px;width:65px;height:27px;background:#fff;"></div>
<div style="left:341px;top:849px;width:184px;height:27px;background:#fff;"></div>
<div style="left:525px;top:849px;width:24px;height:27px;background:#d3d3d3;"></div>
<div style="left:549px;top:849px;width:49px;height:27px;background:#f0f0f0;"></div>
<div style="left:598px;top:849px;width:567px;height:27px;background:#fff;"></div>
<div style="left:1165px;top:849px;width:48px;height:27px;background:#f0f0f0;"></div>
<div style="left:1213px;top:849px;width:256px;height:27px;background:#fff;"></div>
<div style="left:1469px;top:849px;width:56px;height:27px;background:#f0f0f0;"></div>
<div style="left:1525px;top:849px;width:192px;height:27px;background:#fff;"></div>
<div style="left:1717px;top:849px;width:73px;height:27px;background:#f0f0f0;"></div>
<div style="left:241px;top:876px;width:1549px;height:1px;background:#ececec;"></div>
<div style="left:241px;top:876px;width:35px;height:1px;background:#eef3f8;"></div>
<div style="left:1341px;top:849px;width:1px;height:27px;background:#ececec;"></div>
<div style="left:1653px;top:849px;width:1px;height:27px;background:#ececec;"></div>
<div style="left:296px;top:849px;width:1px;height:27px;background:#f0f0f0;"></div>
<div style="left:316px;top:849px;width:1px;height:27px;background:#f0f0f0;"></div>
<div style="left:853px;top:849px;width:1px;height:27px;background:#f0f0f0;"></div>
<div class="t" style="left:266.3px;top:856.8px;font-size:13px;line-height:13px;color:#111;">2</div>
<svg style="left:278px;top:854px" width="17" height="17" viewBox="0 0 17 17"><circle cx="8.5" cy="8.5" r="6.2" fill="none" stroke="#8a8a8a" stroke-width="1.4"/><circle cx="8.5" cy="8.5" r="3.2" fill="#a0a0a0"/></svg>
<svg style="left:299px;top:854px" width="16" height="18" viewBox="0 0 16 18"><rect x="2" y="3" width="12" height="3.2" fill="#2e7fc0"/><rect x="4" y="1" width="2" height="3" fill="#2e7fc0"/><rect x="10" y="1" width="2" height="3" fill="#2e7fc0"/><rect x="2" y="7" width="12" height="8.3" fill="#2e7fc0"/><path d="M4.5 10.8 L7 13.3 L11.5 8.8" fill="none" stroke="#fff" stroke-width="1.8"/></svg>
<div class="t" style="left:344.0px;top:856.8px;font-size:13px;line-height:13px;color:#111;">Alex Wilber</div>
<svg style="left:568px;top:856px" width="13" height="13" viewBox="0 0 13 13"><rect x="0.5" y="0.5" width="12" height="12" fill="#fff" stroke="#aaaaaa"/><rect x="2" y="2" width="9" height="9" fill="#f4f4f4"/></svg>
<div class="t" style="left:601.0px;top:856.8px;font-size:13px;line-height:13px;color:#111;">Room meet</div>
<svg style="left:1184px;top:856px" width="13" height="13" viewBox="0 0 13 13"><rect x="0.5" y="0.5" width="12" height="12" fill="#fff" stroke="#aaaaaa"/><rect x="2" y="2" width="9" height="9" fill="#f4f4f4"/></svg>
<div class="t" style="left:1221.9px;top:856.8px;font-size:13px;line-height:13px;color:#111;">9/19/2023 10:00 AM</div>
<div class="t" style="left:1348.9px;top:856.8px;font-size:13px;line-height:13px;color:#111;">9/19/2023 10:30 AM</div>
<svg style="left:1492px;top:856px" width="13" height="13" viewBox="0 0 13 13"><rect x="0.5" y="0.5" width="12" height="12" fill="#fff" stroke="#aaaaaa"/><rect x="2" y="2" width="9" height="9" fill="#f4f4f4"/></svg>
<div class="t" style="left:1532.9px;top:856.8px;font-size:13px;line-height:13px;color:#111;">9/18/2023 06:39 PM</div>
<svg style="left:1656px;top:854px" width="17" height="17" viewBox="0 0 17 17"><path d="M10 5 H1 V15 H12 V9" fill="none" stroke="#2e7fc0" stroke-width="2"/><path d="M5.5 12 L13 4.5" stroke="#2e7fc0" stroke-width="2.2"/><path d="M10.5 2.2 H16 V7.8 Z" fill="#2e7fc0"/></svg>
<div class="t" style="left:1674.3px;top:856.8px;font-size:13px;line-height:13px;color:#111;">Open</div>
<svg style="left:1748px;top:856px" width="13" height="13" viewBox="0 0 13 13"><rect x="0.5" y="0.5" width="12" height="12" fill="#fff" stroke="#aaaaaa"/><rect x="2" y="2" width="9" height="9" fill="#f4f4f4"/></svg>
<div style="left:222px;top:877px;width:19px;height:27px;background:#fff;"></div>
<div style="left:241px;top:877px;width:35px;height:27px;background:#c9dbe9;"></div>
<div style="left:276px;top:877px;width:65px;height:27px;background:#fff;"></div>
<div style="left:341px;top:877px;width:184px;height:27px;background:#fff;"></div>
<div style="left:525px;top:877px;width:24px;height:27px;background:#d3d3d3;"></div>
<div style="left:549px;top:877px;width:49px;height:27px;background:#f0f0f0;"></div>
<div style="left:598px;top:877px;width:567px;height:27px;background:#fff;"></div>
<div style="left:1165px;top:877px;width:48px;height:27px;background:#f0f0f0;"></div>
<div style="left:1213px;top:877px;width:256px;height:27px;background:#fff;"></div>
<div style="left:1469px;top:877px;width:56px;height:27px;background:#f0f0f0;"></div>
<div style="left:1525px;top:877px;width:192px;height:27px;background:#fff;"></div>
<div style="left:1717px;top:877px;width:73px;height:27px;background:#f0f0f0;"></div>
<div style="left:241px;top:904px;width:1549px;height:1px;background:#ececec;"></div>
<div style="left:241px;top:904px;width:35px;height:1px;background:#eef3f8;"></div>
<div style="left:1341px;top:877px;width:1px;height:27px;background:#ececec;"></div>
<div style="left:1653px;top:877px;width:1px;height:27px;background:#ececec;"></div>
<div style="left:296px;top:877px;width:1px;height:27px;background:#f0f0f0;"></div>
<div style="left:316px;top:877px;width:1px;height:27px;background:#f0f0f0;"></div>
<div style="left:853px;top:877px;width:1px;height:27px;background:#f0f0f0;"></div>
<div class="t" style="left:266.3px;top:884.8px;font-size:13px;line-height:13px;color:#111;">2</div>
<svg style="left:278px;top:882px" width="17" height="17" viewBox="0 0 17 17"><circle cx="8.5" cy="8.5" r="6.2" fill="none" stroke="#8a8a8a" stroke-width="1.4"/><circle cx="8.5" cy="8.5" r="3.2" fill="#a0a0a0"/></svg>
<svg style="left:299px;top:882px" width="16" height="18" viewBox="0 0 16 18"><rect x="2" y="3" width="12" height="3.2" fill="#2e7fc0"/><rect x="4" y="1" width="2" height="3" fill="#2e7fc0"/><rect x="10" y="1" width="2" height="3" fill="#2e7fc0"/><rect x="2" y="7" width="12" height="8.3" fill="#2e7fc0"/><path d="M4.5 10.8 L7 13.3 L11.5 8.8" fill="none" stroke="#fff" stroke-width="1.8"/></svg>
<div class="t" style="left:344.0px;top:884.8px;font-size:13px;line-height:13px;color:#111;">Alex Wilber</div>
<svg style="left:568px;top:884px" width="13" height="13" viewBox="0 0 13 13"><rect x="0.5" y="0.5" width="12" height="12" fill="#fff" stroke="#aaaaaa"/><rect x="2" y="2" width="9" height="9" fill="#f4f4f4"/><path d="M3 6.5 L5.5 9.5 L10 3" fill="none" stroke="#9a9a9a" stroke-width="1.4"/></svg>
<div class="t" style="left:601.0px;top:884.8px;font-size:13px;line-height:13px;color:#111;">Roundtable brainstorming</div>
<svg style="left:856px;top:884.5px" width="16" height="12" viewBox="0 0 16 12"><path d="M0.2 6 Q3 0.4 8 0.4 Q13 0.4 15.8 6 Q13 11.6 8 11.6 Q3 11.6 0.2 6 Z" fill="#2e7fc0"/><circle cx="8" cy="6" r="3.9" fill="none" stroke="#fff" stroke-width="0.9"/><circle cx="7" cy="4.6" r="1.1" fill="#fff"/></svg>
<div class="t" style="left:874.0px;top:884.8px;font-size:13px;line-height:13px;color:#111;width:290px;overflow:hidden;height:18.2px;">All ideas welcome50k-filtered-rows.ytr_rest</div>
<svg style="left:1184px;top:884px" width="13" height="13" viewBox="0 0 13 13"><rect x="0.5" y="0.5" width="12" height="12" fill="#fff" stroke="#aaaaaa"/><rect x="2" y="2" width="9" height="9" fill="#f4f4f4"/></svg>
<div class="t" style="left:1221.9px;top:884.8px;font-size:13px;line-height:13px;color:#111;">9/20/2023 10:30 AM</div>
<div class="t" style="left:1348.9px;top:884.8px;font-size:13px;line-height:13px;color:#111;">9/20/2023 11:30 AM</div>
<svg style="left:1492px;top:884px" width="13" height="13" viewBox="0 0 13 13"><rect x="0.5" y="0.5" width="12" height="12" fill="#fff" stroke="#aaaaaa"/><rect x="2" y="2" width="9" height="9" fill="#f4f4f4"/></svg>
<div class="t" style="left:1532.9px;top:884.8px;font-size:13px;line-height:13px;color:#111;">9/18/2023 06:44 PM</div>
<svg style="left:1656px;top:882px" width="17" height="17" viewBox="0 0 17 17"><path d="M10 5 H1 V15 H12 V9" fill="none" stroke="#2e7fc0" stroke-width="2"/><path d="M5.5 12 L13 4.5" stroke="#2e7fc0" stroke-width="2.2"/><path d="M10.5 2.2 H16 V7.8 Z" fill="#2e7fc0"/></svg>
<div class="t" style="left:1674.3px;top:884.8px;font-size:13px;line-height:13px;color:#111;">Open</div>
<svg style="left:1748px;top:884px" width="13" height="13" viewBox="0 0 13 13"><rect x="0.5" y="0.5" width="12" height="12" fill="#fff" stroke="#aaaaaa"/><rect x="2" y="2" width="9" height="9" fill="#f4f4f4"/></svg>
<div style="left:222px;top:905px;width:19px;height:27px;background:#fff;"></div>
<div style="left:241px;top:905px;width:35px;height:27px;background:#c9dbe9;"></div>
<div style="left:276px;top:905px;width:65px;height:27px;background:#fff;"></div>
<div style="left:341px;top:905px;width:184px;height:27px;background:#fff;"></div>
<div style="left:525px;top:905px;width:24px;height:27px;background:#d3d3d3;"></div>
<div style="left:549px;top:905px;width:49px;height:27px;background:#f0f0f0;"></div>
<div style="left:598px;top:905px;width:567px;height:27px;background:#fff;"></div>
<div style="left:1165px;top:905px;width:48px;height:27px;background:#f0f0f0;"></div>
<div style="left:1213px;top:905px;width:256px;height:27px;background:#fff;"></div>
<div style="left:1469px;top:905px;width:56px;height:27px;background:#f0f0f0;"></div>
<div style="left:1525px;top:905px;width:192px;height:27px;background:#fff;"></div>
<div style="left:1717px;top:905px;width:73px;height:27px;background:#f0f0f0;"></div>
<div style="left:241px;top:932px;width:1549px;height:1px;background:#ececec;"></div>
<div style="left:241px;top:932px;width:35px;height:1px;background:#eef3f8;"></div>
<div style="left:1341px;top:905px;width:1px;height:27px;background:#ececec;"></div>
<div style="left:1653px;top:905px;width:1px;height:27px;background:#ececec;"></div>
<div style="left:296px;top:905px;width:1px;height:27px;background:#f0f0f0;"></div>
<div style="left:316px;top:905px;width:1px;height:27px;background:#f0f0f0;"></div>
<div style="left:853px;top:905px;width:1px;height:27px;background:#f0f0f0;"></div>
<div class="t" style="left:266.3px;top:912.8px;font-size:13px;line-height:13px;color:#111;">2</div>
<svg style="left:278px;top:910px" width="17" height="17" viewBox="0 0 17 17"><circle cx="8.5" cy="8.5" r="6.2" fill="none" stroke="#8a8a8a" stroke-width="1.4"/><circle cx="8.5" cy="8.5" r="3.2" fill="#a0a0a0"/></svg>
<svg style="left:299px;top:910px" width="16" height="18" viewBox="0 0 16 18"><rect x="2" y="3" width="12" height="3.2" fill="#2e7fc0"/><rect x="4" y="1" width="2" height="3" fill="#2e7fc0"/><rect x="10" y="1" width="2" height="3" fill="#2e7fc0"/><rect x="2" y="7" width="12" height="8.3" fill="#2e7fc0"/><path d="M4.5 10.8 L7 13.3 L11.5 8.8" fill="none" stroke="#fff" stroke-width="1.8"/></svg>
<div class="t" style="left:344.0px;top:912.8px;font-size:13px;line-height:13px;color:#111;">Alex Wilber</div>
<svg style="left:568px;top:912px" width="13" height="13" viewBox="0 0 13 13"><rect x="0.5" y="0.5" width="12" height="12" fill="#fff" stroke="#aaaaaa"/><rect x="2" y="2" width="9" height="9" fill="#f4f4f4"/></svg>
<div class="t" style="left:601.0px;top:912.8px;font-size:13px;line-height:13px;color:#111;">Project ABC introduction</div>
<svg style="left:856px;top:912.5px" width="16" height="12" viewBox="0 0 16 12"><path d="M0.2 6 Q3 0.4 8 0.4 Q13 0.4 15.8 6 Q13 11.6 8 11.6 Q3 11.6 0.2 6 Z" fill="#2e7fc0"/><circle cx="8" cy="6" r="3.9" fill="none" stroke="#fff" stroke-width="0.9"/><circle cx="7" cy="4.6" r="1.1" fill="#fff"/></svg>
<div class="t" style="left:874.0px;top:912.8px;font-size:13px;line-height:13px;color:#111;width:290px;overflow:hidden;height:18.2px;">A screenshot to look at. ______________________________</div>
<svg style="left:1184px;top:912px" width="13" height="13" viewBox="0 0 13 13"><rect x="0.5" y="0.5" width="12" height="12" fill="#fff" stroke="#aaaaaa"/><rect x="2" y="2" width="9" height="9" fill="#f4f4f4"/></svg>
<div class="t" style="left:1221.9px;top:912.8px;font-size:13px;line-height:13px;color:#111;">5/23/2024 02:00 PM</div>
<div class="t" style="left:1348.9px;top:912.8px;font-size:13px;line-height:13px;color:#111;">5/23/2024 03:00 PM</div>
<svg style="left:1492px;top:912px" width="13" height="13" viewBox="0 0 13 13"><rect x="0.5" y="0.5" width="12" height="12" fill="#fff" stroke="#aaaaaa"/><rect x="2" y="2" width="9" height="9" fill="#f4f4f4"/><path d="M3 6.5 L5.5 9.5 L10 3" fill="none" stroke="#9a9a9a" stroke-width="1.4"/></svg>
<div class="t" style="left:1532.9px;top:912.8px;font-size:13px;line-height:13px;color:#111;">5/22/2024 04:18 PM</div>
<svg style="left:1656px;top:910px" width="17" height="17" viewBox="0 0 17 17"><path d="M10 5 H1 V15 H12 V9" fill="none" stroke="#2e7fc0" stroke-width="2"/><path d="M5.5 12 L13 4.5" stroke="#2e7fc0" stroke-width="2.2"/><path d="M10.5 2.2 H16 V7.8 Z" fill="#2e7fc0"/></svg>
<div class="t" style="left:1674.3px;top:912.8px;font-size:13px;line-height:13px;color:#111;">Open</div>
<svg style="left:1748px;top:912px" width="13" height="13" viewBox="0 0 13 13"><rect x="0.5" y="0.5" width="12" height="12" fill="#fff" stroke="#aaaaaa"/><rect x="2" y="2" width="9" height="9" fill="#f4f4f4"/></svg>
<div style="left:222px;top:933px;width:19px;height:27px;background:#fff;"></div>
<div style="left:241px;top:933px;width:35px;height:27px;background:#c9dbe9;"></div>
<div style="left:276px;top:933px;width:65px;height:27px;background:#fff;"></div>
<div style="left:341px;top:933px;width:184px;height:27px;background:#fff;"></div>
<div style="left:525px;top:933px;width:24px;height:27px;background:#d3d3d3;"></div>
<div style="left:549px;top:933px;width:49px;height:27px;background:#f0f0f0;"></div>
<div style="left:598px;top:933px;width:567px;height:27px;background:#fff;"></div>
<div style="left:1165px;top:933px;width:48px;height:27px;background:#f0f0f0;"></div>
<div style="left:1213px;top:933px;width:256px;height:27px;background:#fff;"></div>
<div style="left:1469px;top:933px;width:56px;height:27px;background:#f0f0f0;"></div>
<div style="left:1525px;top:933px;width:192px;height:27px;background:#fff;"></div>
<div style="left:1717px;top:933px;width:73px;height:27px;background:#f0f0f0;"></div>
<div style="left:241px;top:960px;width:1549px;height:1px;background:#ececec;"></div>
<div style="left:241px;top:960px;width:35px;height:1px;background:#eef3f8;"></div>
<div style="left:1341px;top:933px;width:1px;height:27px;background:#ececec;"></div>
<div style="left:1653px;top:933px;width:1px;height:27px;background:#ececec;"></div>
<div style="left:296px;top:933px;width:1px;height:27px;background:#f0f0f0;"></div>
<div style="left:316px;top:933px;width:1px;height:27px;background:#f0f0f0;"></div>
<div style="left:853px;top:933px;width:1px;height:27px;background:#f0f0f0;"></div>
<div class="t" style="left:266.3px;top:940.8px;font-size:13px;line-height:13px;color:#111;">2</div>
<svg style="left:278px;top:938px" width="17" height="17" viewBox="0 0 17 17"><circle cx="8.5" cy="8.5" r="6.2" fill="none" stroke="#8a8a8a" stroke-width="1.4"/><circle cx="8.5" cy="8.5" r="3.2" fill="#a0a0a0"/></svg>
<svg style="left:299px;top:938px" width="16" height="18" viewBox="0 0 16 18"><rect x="2" y="3" width="12" height="3.2" fill="#2e7fc0"/><rect x="4" y="1" width="2" height="3" fill="#2e7fc0"/><rect x="10" y="1" width="2" height="3" fill="#2e7fc0"/><rect x="2" y="7" width="12" height="8.3" fill="#2e7fc0"/><path d="M4.5 10.8 L7 13.3 L11.5 8.8" fill="none" stroke="#fff" stroke-width="1.8"/></svg>
<div class="t" style="left:344.0px;top:940.8px;font-size:13px;line-height:13px;color:#111;">Alex Wilber</div>
<svg style="left:568px;top:940px" width="13" height="13" viewBox="0 0 13 13"><rect x="0.5" y="0.5" width="12" height="12" fill="#fff" stroke="#aaaaaa"/><rect x="2" y="2" width="9" height="9" fill="#f4f4f4"/></svg>
<div class="t" style="left:601.0px;top:940.8px;font-size:13px;line-height:13px;color:#111;">Project ABC - phase 1</div>
<svg style="left:856px;top:940.5px" width="16" height="12" viewBox="0 0 16 12"><path d="M0.2 6 Q3 0.4 8 0.4 Q13 0.4 15.8 6 Q13 11.6 8 11.6 Q3 11.6 0.2 6 Z" fill="#2e7fc0"/><circle cx="8" cy="6" r="3.9" fill="none" stroke="#fff" stroke-width="0.9"/><circle cx="7" cy="4.6" r="1.1" fill="#fff"/></svg>
<div class="t" style="left:874.0px;top:940.8px;font-size:13px;line-height:13px;color:#111;width:290px;overflow:hidden;height:18.2px;">sapio365 is the M365 admin&#x27;s best friend! ☺ ______________</div>
<svg style="left:1184px;top:940px" width="13" height="13" viewBox="0 0 13 13"><rect x="0.5" y="0.5" width="12" height="12" fill="#fff" stroke="#aaaaaa"/><rect x="2" y="2" width="9" height="9" fill="#f4f4f4"/></svg>
<div class="t" style="left:1221.9px;top:940.8px;font-size:13px;line-height:13px;color:#111;">5/28/2024 11:30 AM</div>
<div class="t" style="left:1348.9px;top:940.8px;font-size:13px;line-height:13px;color:#111;">5/28/2024 12:30 PM</div>
<svg style="left:1492px;top:940px" width="13" height="13" viewBox="0 0 13 13"><rect x="0.5" y="0.5" width="12" height="12" fill="#fff" stroke="#aaaaaa"/><rect x="2" y="2" width="9" height="9" fill="#f4f4f4"/><path d="M3 6.5 L5.5 9.5 L10 3" fill="none" stroke="#9a9a9a" stroke-width="1.4"/></svg>
<div class="t" style="left:1532.9px;top:940.8px;font-size:13px;line-height:13px;color:#111;">5/22/2024 04:20 PM</div>
<svg style="left:1656px;top:938px" width="17" height="17" viewBox="0 0 17 17"><path d="M10 5 H1 V15 H12 V9" fill="none" stroke="#2e7fc0" stroke-width="2"/><path d="M5.5 12 L13 4.5" stroke="#2e7fc0" stroke-width="2.2"/><path d="M10.5 2.2 H16 V7.8 Z" fill="#2e7fc0"/></svg>
<div class="t" style="left:1674.3px;top:940.8px;font-size:13px;line-height:13px;color:#111;">Open</div>
<svg style="left:1748px;top:940px" width="13" height="13" viewBox="0 0 13 13"><rect x="0.5" y="0.5" width="12" height="12" fill="#fff" stroke="#aaaaaa"/><rect x="2" y="2" width="9" height="9" fill="#f4f4f4"/><path d="M3 6.5 L5.5 9.5 L10 3" fill="none" stroke="#9a9a9a" stroke-width="1.4"/></svg>
<div style="left:222px;top:961px;width:19px;height:27px;background:#fff;"></div>
<div style="left:241px;top:961px;width:35px;height:27px;background:#6aa9e0;"></div>
<div style="left:276px;top:961px;width:65px;height:27px;background:#fff;"></div>
<div style="left:277px;top:961px;width:19px;height:27px;background:#0078d7;"></div>
<div style="left:297px;top:961px;width:19px;height:27px;background:#0078d7;"></div>
<div style="left:317px;top:961px;width:24px;height:27px;background:#6cb8d8;"></div>
<div style="left:341px;top:961px;width:184px;height:27px;background:#0078d7;"></div>
<div style="left:525px;top:961px;width:24px;height:27px;background:#6aa4d8;"></div>
<div style="left:549px;top:961px;width:49px;height:27px;background:#78b4e6;"></div>
<div style="left:598px;top:961px;width:567px;height:27px;background:#0078d7;"></div>
<div style="left:1165px;top:961px;width:48px;height:27px;background:#78b4e6;"></div>
<div style="left:1213px;top:961px;width:256px;height:27px;background:#0078d7;"></div>
<div style="left:1469px;top:961px;width:56px;height:27px;background:#78b4e6;"></div>
<div style="left:1525px;top:961px;width:192px;height:27px;background:#0078d7;"></div>
<div style="left:1717px;top:961px;width:73px;height:27px;background:#78b4e6;"></div>
<div style="left:241px;top:988px;width:1549px;height:1px;background:#ececec;"></div>
<div style="left:241px;top:988px;width:35px;height:1px;background:#eef3f8;"></div>
<div style="left:1341px;top:961px;width:1px;height:27px;background:#6aa4e0;"></div>
<div style="left:1653px;top:961px;width:1px;height:27px;background:#6aa4e0;"></div>
<div style="left:296px;top:961px;width:1px;height:27px;background:#fff;"></div>
<div style="left:316px;top:961px;width:1px;height:27px;background:#fff;"></div>
<div style="left:853px;top:961px;width:1px;height:27px;background:#fff;"></div>
<div class="t" style="left:266.3px;top:968.8px;font-size:13px;line-height:13px;color:#fff;">2</div>
<svg style="left:278px;top:966px" width="17" height="17" viewBox="0 0 17 17"><rect x="0" y="0" width="17" height="17" fill="#fff"/><circle cx="8.5" cy="8.5" r="6.2" fill="none" stroke="#8a8a8a" stroke-width="1.4"/><circle cx="8.5" cy="8.5" r="3.2" fill="#a0a0a0"/></svg>
<svg style="left:299px;top:965px" width="16" height="19" viewBox="0 0 16 19"><path d="M1.5 4.5 H14.5 V17.5 H1.5 Z" fill="#2e7fc0" stroke="#fff" stroke-width="1.2"/><rect x="4" y="1" width="2" height="4" fill="#fff"/><rect x="10" y="1" width="2" height="4" fill="#fff"/><rect x="2" y="7.5" width="12" height="1.2" fill="#fff"/><path d="M4.5 12 L7 14.5 L11.5 10" fill="none" stroke="#fff" stroke-width="1.8"/></svg>
<svg style="left:319px;top:966px" width="17" height="17" viewBox="0 0 17 17"><rect x="0" y="0" width="17" height="17" fill="#fff"/><path d="M1 1 H15 V16 H1 Z" fill="#8e4fb5"/><rect x="3.5" y="2.5" width="9" height="6" fill="#fff"/><rect x="5" y="4" width="6" height="0.8" fill="#bbb"/><rect x="5" y="6" width="6" height="0.8" fill="#bbb"/><rect x="4" y="11" width="3" height="5" fill="#fff"/><circle cx="12.5" cy="12.5" r="4.5" fill="#2f9a5e"/><path d="M10.3 12.5 L12 14.2 L14.8 11" fill="none" stroke="#fff" stroke-width="1.4"/></svg>
<div class="t" style="left:344.0px;top:968.8px;font-size:13px;line-height:13px;color:#fff;">Alex Wilber</div>
<svg style="left:568px;top:968px" width="13" height="13" viewBox="0 0 13 13"><rect x="0.5" y="0.5" width="12" height="12" fill="#fff" stroke="#aaaaaa"/><rect x="2" y="2" width="9" height="9" fill="#f4f4f4"/></svg>
<div class="t" style="left:601.0px;top:968.8px;font-size:13px;line-height:13px;color:#fff;">Project ABC: phase 2</div>
<div style="left:856px;top:967px;width:16px;height:16px;background:#fff;"></div>
<svg style="left:856px;top:968.5px" width="16" height="12" viewBox="0 0 16 12"><path d="M0.2 6 Q3 0.4 8 0.4 Q13 0.4 15.8 6 Q13 11.6 8 11.6 Q3 11.6 0.2 6 Z" fill="#2e7fc0"/><circle cx="8" cy="6" r="3.9" fill="none" stroke="#fff" stroke-width="0.9"/><circle cx="7" cy="4.6" r="1.1" fill="#fff"/></svg>
<div class="t" style="left:874.0px;top:968.8px;font-size:13px;line-height:13px;color:#fff;width:290px;overflow:hidden;height:18.2px;">see-user-activity-logs.webp options-grid-tools-user</div>
<svg style="left:1184px;top:968px" width="13" height="13" viewBox="0 0 13 13"><rect x="0.5" y="0.5" width="12" height="12" fill="#fff" stroke="#aaaaaa"/><rect x="2" y="2" width="9" height="9" fill="#f4f4f4"/></svg>
<div class="t" style="left:1221.9px;top:968.8px;font-size:13px;line-height:13px;color:#fff;">5/30/2024 02:30 PM</div>
<div class="t" style="left:1348.9px;top:968.8px;font-size:13px;line-height:13px;color:#fff;">5/30/2024 02:30 PM</div>
<svg style="left:1492px;top:968px" width="13" height="13" viewBox="0 0 13 13"><rect x="0.5" y="0.5" width="12" height="12" fill="#fff" stroke="#aaaaaa"/><rect x="2" y="2" width="9" height="9" fill="#f4f4f4"/><path d="M3 6.5 L5.5 9.5 L10 3" fill="none" stroke="#9a9a9a" stroke-width="1.4"/></svg>
<div class="t" style="left:1532.9px;top:968.8px;font-size:13px;line-height:13px;color:#fff;">5/23/2024 05:50 PM</div>
<svg style="left:1656px;top:966px" width="17" height="17" viewBox="0 0 17 17"><path d="M10 5 H1 V15 H12 V9" fill="none" stroke="#fff" stroke-width="2"/><path d="M5.5 12 L13 4.5" stroke="#fff" stroke-width="2.2"/><path d="M10.5 2.2 H16 V7.8 Z" fill="#fff"/></svg>
<div class="t" style="left:1674.3px;top:968.8px;font-size:13px;line-height:13px;color:#111;">Open</div>
<svg style="left:1748px;top:968px" width="13" height="13" viewBox="0 0 13 13"><rect x="0.5" y="0.5" width="12" height="12" fill="#fff" stroke="#aaaaaa"/><rect x="2" y="2" width="9" height="9" fill="#f4f4f4"/></svg>
<div style="left:222px;top:989px;width:19px;height:27px;background:#fff;"></div>
<div style="left:241px;top:989px;width:35px;height:27px;background:#c9dbe9;"></div>
<div style="left:276px;top:989px;width:65px;height:27px;background:#fff;"></div>
<div style="left:341px;top:989px;width:184px;height:27px;background:#fff;"></div>
<div style="left:525px;top:989px;width:24px;height:27px;background:#d3d3d3;"></div>
<div style="left:549px;top:989px;width:49px;height:27px;background:#f0f0f0;"></div>
<div style="left:598px;top:989px;width:567px;height:27px;background:#fff;"></div>
<div style="left:1165px;top:989px;width:48px;height:27px;background:#f0f0f0;"></div>
<div style="left:1213px;top:989px;width:256px;height:27px;background:#fff;"></div>
<div style="left:1469px;top:989px;width:56px;height:27px;background:#f0f0f0;"></div>
<div style="left:1525px;top:989px;width:192px;height:27px;background:#fff;"></div>
<div style="left:1717px;top:989px;width:73px;height:27px;background:#f0f0f0;"></div>
<div style="left:241px;top:1016px;width:1549px;height:1px;background:#ececec;"></div>
<div style="left:241px;top:1016px;width:35px;height:1px;background:#eef3f8;"></div>
<div style="left:1341px;top:989px;width:1px;height:27px;background:#ececec;"></div>
<div style="left:1653px;top:989px;width:1px;height:27px;background:#ececec;"></div>
<div style="left:296px;top:989px;width:1px;height:27px;background:#f0f0f0;"></div>
<div style="left:316px;top:989px;width:1px;height:27px;background:#f0f0f0;"></div>
<div style="left:853px;top:989px;width:1px;height:27px;background:#f0f0f0;"></div>
<div class="t" style="left:266.3px;top:996.8px;font-size:13px;line-height:13px;color:#111;">2</div>
<svg style="left:278px;top:994px" width="17" height="17" viewBox="0 0 17 17"><circle cx="8.5" cy="8.5" r="6.2" fill="none" stroke="#8a8a8a" stroke-width="1.4"/><circle cx="8.5" cy="8.5" r="3.2" fill="#a0a0a0"/></svg>
<svg style="left:299px;top:994px" width="16" height="18" viewBox="0 0 16 18"><rect x="2" y="3" width="12" height="3.2" fill="#2e7fc0"/><rect x="4" y="1" width="2" height="3" fill="#2e7fc0"/><rect x="10" y="1" width="2" height="3" fill="#2e7fc0"/><rect x="2" y="7" width="12" height="8.3" fill="#2e7fc0"/><path d="M4.5 10.8 L7 13.3 L11.5 8.8" fill="none" stroke="#fff" stroke-width="1.8"/></svg>
<div class="t" style="left:344.0px;top:996.8px;font-size:13px;line-height:13px;color:#111;">Alex Wilber</div>
<svg style="left:568px;top:996px" width="13" height="13" viewBox="0 0 13 13"><rect x="0.5" y="0.5" width="12" height="12" fill="#fff" stroke="#aaaaaa"/><rect x="2" y="2" width="9" height="9" fill="#f4f4f4"/></svg>
<div class="t" style="left:601.0px;top:996.8px;font-size:13px;line-height:13px;color:#111;">Review project DEF</div>
<svg style="left:1184px;top:996px" width="13" height="13" viewBox="0 0 13 13"><rect x="0.5" y="0.5" width="12" height="12" fill="#fff" stroke="#aaaaaa"/><rect x="2" y="2" width="9" height="9" fill="#f4f4f4"/></svg>
<div class="t" style="left:1221.9px;top:996.8px;font-size:13px;line-height:13px;color:#111;">5/23/2024 01:00 PM</div>
<div class="t" style="left:1348.9px;top:996.8px;font-size:13px;line-height:13px;color:#111;">5/23/2024 02:00 PM</div>
<svg style="left:1492px;top:996px" width="13" height="13" viewBox="0 0 13 13"><rect x="0.5" y="0.5" width="12" height="12" fill="#fff" stroke="#aaaaaa"/><rect x="2" y="2" width="9" height="9" fill="#f4f4f4"/></svg>
<div class="t" style="left:1532.9px;top:996.8px;font-size:13px;line-height:13px;color:#111;">5/22/2024 05:57 PM</div>
<svg style="left:1656px;top:994px" width="17" height="17" viewBox="0 0 17 17"><path d="M10 5 H1 V15 H12 V9" fill="none" stroke="#2e7fc0" stroke-width="2"/><path d="M5.5 12 L13 4.5" stroke="#2e7fc0" stroke-width="2.2"/><path d="M10.5 2.2 H16 V7.8 Z" fill="#2e7fc0"/></svg>
<div class="t" style="left:1674.3px;top:996.8px;font-size:13px;line-height:13px;color:#111;">Open</div>
<svg style="left:1748px;top:996px" width="13" height="13" viewBox="0 0 13 13"><rect x="0.5" y="0.5" width="12" height="12" fill="#fff" stroke="#aaaaaa"/><rect x="2" y="2" width="9" height="9" fill="#f4f4f4"/><path d="M3 6.5 L5.5 9.5 L10 3" fill="none" stroke="#9a9a9a" stroke-width="1.4"/></svg>
<div style="left:341px;top:261px;width:1px;height:755px;background:#34435a;"></div>
<div style="left:598px;top:261px;width:1px;height:755px;background:#1e7ad0;"></div>
<div style="left:852px;top:261px;width:1px;height:755px;background:#1e7ad0;"></div>
<div style="left:222px;top:1017px;width:1568px;height:20px;background:#fff;"></div>
<svg style="left:0px;top:0px" width="80" height="28" viewBox="0 0 80 28"><circle cx="16" cy="13" r="7.6" fill="none" stroke="#8e5bb5" stroke-width="1.2"/><path d="M12 10 Q13.5 8 15 10 Z M17 10 Q18.5 8 20 10 Z" fill="#8e5bb5"/><path d="M10.3 12 H15 V17.5 Q12.5 17 10.8 15 Z M17 12 H21.7 L21.2 15 Q19.5 17 17 17.5 Z" fill="#8e5bb5"/><path d="M14.8 18.8 L16 16.8 L17.2 18.8 Z" fill="#8e5bb5"/><path d="M36.5 6.5 H42.5 V8.5 H40 V17.5 H36.5 Z" fill="#c5d9ee" stroke="#6f9fd3" stroke-width="1"/><rect x="41.5" y="10.5" width="6.5" height="11" fill="#7faad6" stroke="#2f6fb5" stroke-width="1"/><rect x="56.5" y="10.8" width="7" height="1.2" fill="#333"/><path d="M57.3 13.5 H62.7 L60 16.5 Z" fill="#333"/></svg>
<svg style="left:1400px;top:0px" width="520" height="55" viewBox="1400 0 520 55"><g fill="none" stroke="#e7e7e7" stroke-width="3"><path d="M1429 17 H1626 L1682 54"/><circle cx="1425.7" cy="17" r="3.6" fill="#fff"/><circle cx="1603" cy="17" r="4" fill="#fff"/><path d="M1495 35 H1590 L1618 54"/><circle cx="1491.5" cy="35" r="4" fill="#fff"/><path d="M1527 54 Q1535 46 1545 46 H1628 M1636 46 H1645 Q1652 47 1660 54"/><circle cx="1632" cy="46" r="4" fill="#fff"/><circle cx="1444.7" cy="42" r="17" stroke-width="4.5"/><path d="M1452 49 L1438 35 M1437 35 V45 M1437 35 H1447" stroke-width="5"/><circle cx="1699.5" cy="21" r="27" stroke-width="5.5"/><path d="M1688 32 L1707 13 M1708.5 11.5 H1694 M1708.5 11.5 V26" stroke-width="6"/><path d="M1789 54 L1813 27 H1918"/><path d="M1850 54 L1892 3"/><path d="M1866 54 L1916 3"/></g></svg>
<svg style="left:1830px;top:0px" width="90" height="60" viewBox="1830 0 90 60"><rect x="1840" y="17" width="10" height="1.3" fill="#333"/><rect x="1869.5" y="14.5" width="7" height="7" fill="none" stroke="#333" stroke-width="1.2"/><path d="M1872 14.5 V12 H1879 V19 H1876.5" fill="none" stroke="#333" stroke-width="1.2"/><path d="M1899 11 L1909 21 M1909 11 L1899 21" stroke="#333" stroke-width="1.4"/><path d="M1879 45 L1883.5 40.5 L1888 45" fill="none" stroke="#444" stroke-width="1.3"/><circle cx="1906" cy="41" r="8" fill="#2f6fb5"/></svg>
<div class="t" style="left:1902.0px;top:35.0px;font-size:13px;line-height:13px;color:#fff;font-weight:bold;">?</div>
<svg style="left:15px;top:60px" width="80" height="35" viewBox="15 60 80 35"><path d="M38 77 H25 M31.5 70.5 L25 77 L31.5 83.5" fill="none" stroke="#505050" stroke-width="3.4" stroke-linecap="butt"/><path d="M70 77 H83 M76.5 70.5 L83 77 L76.5 83.5" fill="none" stroke="#8c8c8c" stroke-width="3.4"/></svg>
<svg style="left:25.6px;top:120.5px" width="8" height="6" viewBox="25.6 120.5 8 6"><path d="M26.900000000000002 122.2 H32.300000000000004 L29.6 125.0 Z" fill="#888"/></svg>
<svg style="left:71.6px;top:120.5px" width="8" height="6" viewBox="71.6 120.5 8 6"><path d="M72.89999999999999 122.2 H78.3 L75.6 125.0 Z" fill="#bbb"/></svg>
<svg style="left:187.5px;top:120.5px" width="8" height="6" viewBox="187.5 120.5 8 6"><path d="M188.8 122.2 H194.2 L191.5 125.0 Z" fill="#888"/></svg>
<svg style="left:258px;top:115.5px" width="8" height="6" viewBox="258 115.5 8 6"><path d="M259.3 117.2 H264.7 L262 120.0 Z" fill="#888"/></svg>
<svg style="left:306px;top:115.5px" width="8" height="6" viewBox="306 115.5 8 6"><path d="M307.3 117.2 H312.7 L310 120.0 Z" fill="#888"/></svg>
<svg style="left:1220px;top:115.5px" width="8" height="6" viewBox="1220 115.5 8 6"><path d="M1221.3 117.2 H1226.7 L1224 120.0 Z" fill="#888"/></svg>
<svg style="left:1311.5px;top:115.5px" width="8" height="6" viewBox="1311.5 115.5 8 6"><path d="M1312.8 117.2 H1318.2 L1315.5 120.0 Z" fill="#888"/></svg>
<svg style="left:1347.5px;top:120.5px" width="8" height="6" viewBox="1347.5 120.5 8 6"><path d="M1348.8 122.2 H1354.2 L1351.5 125.0 Z" fill="#888"/></svg>
<svg style="left:1471px;top:115.5px" width="8" height="6" viewBox="1471 115.5 8 6"><path d="M1472.3 117.2 H1477.7 L1475 120.0 Z" fill="#bbb"/></svg>
<svg style="left:118px;top:60px" width="36" height="34" viewBox="118 60 36 34"><rect x="122" y="63" width="27" height="6" fill="#3d78b8"/><path d="M122.5 69 V89.5 H139 M130 69 V89 M136 69 V89 M142 69 V78 M148.5 69 V80" fill="none" stroke="#666" stroke-width="1"/><circle cx="144.5" cy="85" r="6.3" fill="#fff" stroke="#555" stroke-width="1.2"/><path d="M141 88.5 L144 84 L145.2 86 Z" fill="#d9462f"/><path d="M148 81.5 L145 86 L143.8 84 Z" fill="#2f6fb5"/></svg>
<svg style="left:175px;top:60px" width="36" height="36" viewBox="175 60 36 36"><path d="M178.5 69 V66 Q178.5 64 181 64 H186 M200 64 H205 Q207.5 64 207.5 66.5 V70 M178.5 81 V85 Q178.5 87.5 181 87.5 H186" fill="none" stroke="#505050" stroke-width="2.6"/><circle cx="193" cy="75.5" r="5.6" fill="none" stroke="#505050" stroke-width="2"/><circle cx="202" cy="86" r="7" fill="#4f9f7c"/><path d="M202 81.5 V90.5 M197.5 86 H206.5" stroke="#fff" stroke-width="2.2"/></svg>
<svg style="left:232px;top:60px" width="36" height="36" viewBox="232 60 36 36"><path d="M235 64 H257 L260 67 V89 H235 Z" fill="#555"/><rect x="241" y="65.5" width="11.5" height="7.5" rx="1.5" fill="#fff"/><rect x="248.5" y="66.5" width="2.2" height="5" fill="#555"/><rect x="238" y="78" width="18" height="10" fill="#fff"/><circle cx="257" cy="86" r="7" fill="#4f9f7c"/><path d="M257 81.5 V90.5 M252.5 86 H261.5" stroke="#fff" stroke-width="2.2"/></svg>
<svg style="left:285px;top:58px" width="38" height="38" viewBox="285 58 38 38"><path d="M316 76.5 A13 13 0 1 1 314.6 70.2" fill="none" stroke="#4f9f7c" stroke-width="3.6"/><path d="M315.3 60.9 L318.9 64.2 L318.9 74.7 L309.2 74.7 L306.1 71.2 L315.3 71.2 Z" fill="#4f9f7c"/></svg>
<svg style="left:333px;top:60px" width="34" height="36" viewBox="333 60 34 36"><path d="M358.5 77 A10.8 10.8 0 1 1 357.6 71.4" fill="none" stroke="#4f9f7c" stroke-width="3"/><path d="M358 65 L361 65 L361 74 L352.5 74 L352.5 71 L358 71 Z" fill="#4f9f7c"/><circle cx="357" cy="80.5" r="3.8" fill="#2f6fb5" stroke="#fff" stroke-width="0.8"/><path d="M351 92 Q351 85 357 85 Q363 85 363.5 92 Z" fill="#2f6fb5"/></svg>
<svg style="left:384px;top:62px" width="30" height="30" viewBox="384 62 30 30"><path d="M385 82 V64.5 H401.5 V66" fill="none" stroke="#b0b0b0" stroke-width="1"/><path d="M388.5 85 V67.5 H405 V69" fill="none" stroke="#b0b0b0" stroke-width="1"/><rect x="391.5" y="70.5" width="16.5" height="18.5" fill="#fff" stroke="#4f9f7c" stroke-width="1.1"/><path d="M399.5 73 V84 M395 79.5 L399.5 84.5 L404 79.5" fill="none" stroke="#4f9f7c" stroke-width="2.4"/></svg>
<svg style="left:436px;top:60px" width="80" height="36" viewBox="436 60 80 36"><circle cx="453" cy="76.75" r="14" fill="#b3b3b3"/><path d="M443 78 L450.5 84.5 L463.5 70.5" fill="none" stroke="#fff" stroke-width="4"/><circle cx="498.75" cy="76.75" r="14" fill="#b3b3b3"/><path d="M488.5 78 L496 84.5 L509 70.5" fill="none" stroke="#fff" stroke-width="4"/><circle cx="507.5" cy="80" r="4.2" fill="#a0a0a0" stroke="#fff" stroke-width="1"/><path d="M501 92 Q501 85 507.5 85 Q514 85 514 92 Z" fill="#a0a0a0" stroke="#fff" stroke-width="0.8"/></svg>
<svg style="left:536px;top:60px" width="90" height="36" viewBox="536 60 90 36"><path d="M545.6 69 L541 72.6 L541 86 L558.6 86 Z" fill="#a8a8a8"/><path d="M548 80 Q554 69.7 560 69.7 Q568.5 70 568 80 L567.5 86" fill="none" stroke="#a8a8a8" stroke-width="5"/><path d="M591.6 69 L587 72.6 L587 86 L604.6 86 Z" fill="#a8a8a8"/><path d="M594 80 Q600 69.7 606 69.7 Q614.5 70 614 80 L613.5 86" fill="none" stroke="#a8a8a8" stroke-width="5"/><rect x="606.5" y="81.5" width="11" height="11" fill="#fff" stroke="#999" stroke-width="1"/><path d="M608.5 87 L611 89.5 L615.5 84" fill="none" stroke="#999" stroke-width="1.2"/></svg>
<svg style="left:644px;top:60px" width="34" height="34" viewBox="644 60 34 34"><path d="M646.5 71.5 L652 67 M675.5 71.5 L670 67" stroke="#666" stroke-width="1.3"/><path d="M656 65 Q661 60 666 65" fill="none" stroke="#888" stroke-width="1"/><rect x="646.5" y="71" width="29" height="20.5" fill="#fff" stroke="#666" stroke-width="1.3"/><path d="M650 65 H672 V76 L665 79 H657 L650 76 Z" fill="#e8ae5a"/><path d="M652 67.5 H670 M652 70.5 H670 M655 73.5 H667 M656 76.2 H666" stroke="#fff" stroke-width="0.9"/><path d="M646.5 71 L657 80 H665 L675.5 71 M647 91 L657 81 M675 91 L665 81" fill="none" stroke="#666" stroke-width="1.2"/></svg>
<svg style="left:698px;top:60px" width="36" height="36" viewBox="698 60 36 36"><path d="M700.5 92.5 L703 86 L707.5 90.5 Z" fill="#2f6fb5"/><path d="M704.5 84.5 L723.5 65.5 L729 71 L710 90 Z" fill="#2f6fb5"/><path d="M725 64 L727.5 61.5 Q729.5 60.5 731.5 62.5 Q733 64.5 731.5 66.5 L729 69 Z" fill="#2f6fb5"/></svg>
<svg style="left:744px;top:58px" width="32" height="38" viewBox="744 58 32 38"><rect x="746" y="64.3" width="27" height="3.5" fill="#3d78b8"/><rect x="757" y="61" width="5" height="4" rx="2" fill="#3d78b8"/><rect x="748" y="69" width="23" height="24" fill="#6a6a6a"/><rect x="751.8" y="73" width="3.2" height="16.5" fill="#fff"/><rect x="757.9" y="73" width="3.2" height="16.5" fill="#fff"/><rect x="764" y="73" width="3.2" height="16.5" fill="#fff"/></svg>
<svg style="left:820px;top:58px" width="40" height="36" viewBox="820 58 40 36"><g transform="translate(824.5,62) scale(1.0)"><path d="M12 25 L26 11 Q29.5 7 26.5 3.5 Q23 0.5 19.5 4 L4 19.5 Q0.5 23.5 3.5 26.5 Q6.5 29 10 25.5 L22 13.5 Q23.5 11.5 22 10 Q20.5 8.5 18.5 10.5 L8 21" fill="none" stroke="#2f6fb5" stroke-width="2.6" stroke-linecap="round"/></g></svg>
<svg style="left:905px;top:58px" width="40" height="38" viewBox="905 58 40 38"><path d="M911.5 62.5 H929 L935.5 69 V90.5 H911.5 Z" fill="#fff" stroke="#aaa" stroke-width="1"/><path d="M929 62.5 V69 H935.5" fill="none" stroke="#aaa" stroke-width="1"/><g transform="translate(915,71) scale(0.55)"><path d="M12 25 L26 11 Q29.5 7 26.5 3.5 Q23 0.5 19.5 4 L4 19.5 Q0.5 23.5 3.5 26.5 Q6.5 29 10 25.5 L22 13.5 Q23.5 11.5 22 10 Q20.5 8.5 18.5 10.5 L8 21" fill="none" stroke="#aaa" stroke-width="3" stroke-linecap="round"/></g><path d="M926 87 Q932 80 940 87 Q932 94 926 87 Z" fill="#aaa" stroke="#fff" stroke-width="1"/><circle cx="933" cy="87" r="2.3" fill="#fff"/><circle cx="933" cy="87" r="1.2" fill="#aaa"/></svg>
<svg style="left:980px;top:58px" width="44" height="38" viewBox="980 58 44 38"><g transform="translate(988,62) scale(0.95)"><path d="M12 25 L26 11 Q29.5 7 26.5 3.5 Q23 0.5 19.5 4 L4 19.5 Q0.5 23.5 3.5 26.5 Q6.5 29 10 25.5 L22 13.5 Q23.5 11.5 22 10 Q20.5 8.5 18.5 10.5 L8 21" fill="none" stroke="#aaa" stroke-width="2.8" stroke-linecap="round"/></g><path d="M1010 80 V86 H1005 L1013 93 L1021 86 H1016 V80 Z" fill="#b0b0b0" stroke="#fff" stroke-width="1"/></svg>
<svg style="left:1050px;top:58px" width="44" height="38" viewBox="1050 58 44 38"><g transform="translate(1052,62) scale(0.95)"><path d="M12 25 L26 11 Q29.5 7 26.5 3.5 Q23 0.5 19.5 4 L4 19.5 Q0.5 23.5 3.5 26.5 Q6.5 29 10 25.5 L22 13.5 Q23.5 11.5 22 10 Q20.5 8.5 18.5 10.5 L8 21" fill="none" stroke="#aaa" stroke-width="2.8" stroke-linecap="round"/></g><path d="M1068.5 75.5 H1078 L1083.5 81 V92.5 H1068.5 Z" fill="#fff" stroke="#aaa" stroke-width="1"/><path d="M1078 75.5 V81 H1083.5" fill="none" stroke="#aaa" stroke-width="1"/></svg>
<svg style="left:1110px;top:58px" width="44" height="38" viewBox="1110 58 44 38"><g transform="translate(1111,62) scale(0.95)"><path d="M12 25 L26 11 Q29.5 7 26.5 3.5 Q23 0.5 19.5 4 L4 19.5 Q0.5 23.5 3.5 26.5 Q6.5 29 10 25.5 L22 13.5 Q23.5 11.5 22 10 Q20.5 8.5 18.5 10.5 L8 21" fill="none" stroke="#aaa" stroke-width="2.8" stroke-linecap="round"/></g><circle cx="1133.5" cy="86" r="7" fill="#aaa" stroke="#fff" stroke-width="1.2"/><path d="M1130.5 83 L1136.5 89 M1136.5 83 L1130.5 89" stroke="#fff" stroke-width="1.8"/></svg>
<svg style="left:1186px;top:58px" width="36" height="36" viewBox="1186 58 36 36"><circle cx="1201" cy="69" r="7.4" fill="#2f6fb5"/><path d="M1189 90 Q1188.5 77.5 1197 77 H1206 Q1213 77.5 1213.5 88 V90 Z" fill="#2f6fb5" stroke="#fff" stroke-width="0.8"/><circle cx="1211.5" cy="84.5" r="7" fill="#8e4fb5" stroke="#fff" stroke-width="1"/><rect x="1210.6" y="83" width="2" height="6" fill="#fff"/><circle cx="1211.6" cy="80.6" r="1.1" fill="#fff"/></svg>
<svg style="left:1260px;top:58px" width="36" height="36" viewBox="1260 58 36 36"><circle cx="1284" cy="68.5" r="5.6" fill="#2f6fb5"/><path d="M1277 85 Q1276 74.5 1283 74.5 H1286 Q1293 75 1293 82 V85 Z" fill="#2f6fb5" stroke="#fff" stroke-width="0.8"/><circle cx="1272.5" cy="71.5" r="5.6" fill="#2f6fb5" stroke="#fff" stroke-width="0.8"/><path d="M1263 89 Q1263 77.5 1270 77.5 H1275 Q1282 78 1282 86 V89 Z" fill="#2f6fb5" stroke="#fff" stroke-width="0.8"/></svg>
<svg style="left:1335px;top:62px" width="36" height="30" viewBox="1335 62 36 30"><rect x="1337.5" y="64.5" width="31" height="23.5" fill="#fff" stroke="#3d78b8" stroke-width="1.2"/><rect x="1337" y="64" width="32" height="5" fill="#3d78b8"/><circle cx="1345" cy="75" r="3.8" fill="#e8ae5a"/><path d="M1343.5 77 V85 L1345.5 86.5 L1347.5 84.5 V83 H1346 V81.5 H1347.5 V77 Z" fill="#e8ae5a"/><circle cx="1345" cy="74.5" r="1" fill="#fff"/><path d="M1354 75.5 H1365 M1354 78.5 H1365 M1354 81.5 H1365" stroke="#999" stroke-width="0.9"/></svg>
<svg style="left:1420px;top:58px" width="36" height="38" viewBox="1420 58 36 38"><rect x="1424.5" y="65.5" width="28" height="26" fill="#fff" stroke="#aaa" stroke-width="1.2"/><rect x="1424" y="65" width="29" height="4.5" fill="#aaa"/><rect x="1430.5" y="62" width="1.5" height="5" fill="#aaa"/><rect x="1445" y="62" width="1.5" height="5" fill="#aaa"/><path d="M1427 76 H1450 M1427 80.5 H1450 M1427 85 H1450 M1432 72 V89 M1437 72 V89 M1442 72 V89 M1447 72 V89" stroke="#bbb" stroke-width="0.9"/></svg>
<svg style="left:5px;top:155px" width="22" height="22" viewBox="5 155 22 22"><path d="M7 158 H22 V173 H7 Z" fill="#8e4fb5"/><rect x="9.5" y="159.5" width="10" height="6.5" fill="#fff"/><path d="M11 161.5 H18 M11 163.5 H17" stroke="#bbb" stroke-width="0.8"/><rect x="10" y="168" width="3" height="5" fill="#fff"/><circle cx="18.5" cy="168.5" r="4.8" fill="#2f9a5e" stroke="#fff" stroke-width="0.6"/><path d="M16 168.5 L18 170.5 L21.3 167" fill="none" stroke="#fff" stroke-width="1.3"/></svg>
<svg style="left:10px;top:184px" width="60" height="30" viewBox="10 184 60 30"><rect x="15" y="189" width="15" height="3.5" fill="#3070b8"/><rect x="19" y="195" width="12" height="2.5" fill="#3070b8"/><rect x="19" y="199" width="12" height="2.5" fill="#3070b8"/><rect x="19" y="203" width="12" height="2.5" fill="#3070b8"/><path d="M16 192 V205" stroke="#555" stroke-width="0.8"/><circle cx="16.3" cy="196.3" r="1.3" fill="#fff" stroke="#555" stroke-width="0.7"/><circle cx="16.3" cy="200.3" r="1.3" fill="#fff" stroke="#555" stroke-width="0.7"/><circle cx="16.3" cy="204.3" r="1.3" fill="#fff" stroke="#555" stroke-width="0.7"/><rect x="48" y="189" width="4" height="3.5" fill="#555"/><rect x="54" y="189" width="12" height="3.5" fill="#888"/><rect x="48" y="196" width="4" height="3.5" fill="#555"/><rect x="54" y="196" width="12" height="3.5" fill="#888"/><rect x="48" y="203" width="4" height="3.5" fill="#555"/><rect x="54" y="203" width="12" height="3.5" fill="#888"/></svg>
<svg style="left:1688px;top:186px" width="26" height="26" viewBox="1688 186 26 26"><rect x="1692" y="190" width="17" height="2.2" fill="#3d78b8"/><rect x="1698.5" y="188" width="4" height="2.5" fill="#3d78b8"/><rect x="1693.5" y="193.5" width="14" height="13" fill="#666"/><rect x="1696" y="195.5" width="2" height="9" fill="#fff"/><rect x="1699.5" y="195.5" width="2" height="9" fill="#fff"/><rect x="1703" y="195.5" width="2" height="9" fill="#fff"/></svg>
<svg style="left:1716px;top:188px" width="200" height="22" viewBox="1716 188 200 22"><circle cx="1724.5" cy="199" r="4.3" fill="none" stroke="#555" stroke-width="0.9"/><rect x="1724" y="196.5" width="1" height="4.5" fill="#555"/><path d="M1900 197 H1909 L1904.5 201.5 Z" fill="#555"/></svg>
<svg style="left:174px;top:218px" width="26" height="26" viewBox="174 218 26 26"><g transform="translate(187,230)"><circle r="6.5" fill="#7b52c1"/><rect x="-2.2" y="-9.5" width="4.4" height="5" fill="#7b52c1" transform="rotate(0)"/><rect x="-2.2" y="-9.5" width="4.4" height="5" fill="#7b52c1" transform="rotate(45)"/><rect x="-2.2" y="-9.5" width="4.4" height="5" fill="#7b52c1" transform="rotate(90)"/><rect x="-2.2" y="-9.5" width="4.4" height="5" fill="#7b52c1" transform="rotate(135)"/><rect x="-2.2" y="-9.5" width="4.4" height="5" fill="#7b52c1" transform="rotate(180)"/><rect x="-2.2" y="-9.5" width="4.4" height="5" fill="#7b52c1" transform="rotate(225)"/><rect x="-2.2" y="-9.5" width="4.4" height="5" fill="#7b52c1" transform="rotate(270)"/><rect x="-2.2" y="-9.5" width="4.4" height="5" fill="#7b52c1" transform="rotate(315)"/><circle r="2.8" fill="#fff"/></g></svg>
<svg style="left:14px;top:268px" width="22" height="22" viewBox="14 268 22 22"><circle cx="25" cy="276" r="5" fill="none" stroke="#555" stroke-width="1.2"/><path d="M21.5 279.5 L16.5 284.5" stroke="#555" stroke-width="1.3"/></svg>
<svg style="left:10px;top:300px" width="26" height="26" viewBox="10 300 26 26"><path d="M16.5 309.5 A7.5 7.5 0 1 1 17 318.5" fill="none" stroke="#555" stroke-width="2.6"/><path d="M12.5 304 V312 H20.5 Z" fill="#555"/></svg>
<svg style="left:12px;top:336px" width="24" height="26" viewBox="12 336 24 26"><path d="M16 339.5 H25 L29.5 344 V358 Q29.5 358.5 29 358.5 H16.5 Q16 358.5 16 358 Z" fill="none" stroke="#555" stroke-width="1.5"/><path d="M25 339.5 V344 H29.5" fill="none" stroke="#555" stroke-width="1.2"/><path d="M19 350 H26.5 M19 353 H26.5" stroke="#555" stroke-width="1.4"/></svg>
<svg style="left:12px;top:398px" width="24" height="26" viewBox="12 398 24 26"><path d="M16 401.5 H25 L29.5 406 V420 Q29.5 420.5 29 420.5 H16.5 Q16 420.5 16 420 Z" fill="none" stroke="#555" stroke-width="1.5"/><path d="M25 401.5 V406 H29.5" fill="none" stroke="#555" stroke-width="1.2"/><path d="M19 412 H26.5 M19 415 H26.5" stroke="#555" stroke-width="1.4"/></svg>
<svg style="left:12px;top:545px" width="24" height="26" viewBox="12 545 24 26"><path d="M16 548.5 H25 L29.5 553 V567 Q29.5 567.5 29 567.5 H16.5 Q16 567.5 16 567 Z" fill="none" stroke="#555" stroke-width="1.5"/><path d="M25 548.5 V553 H29.5" fill="none" stroke="#555" stroke-width="1.2"/><path d="M19 559 H26.5 M19 562 H26.5" stroke="#555" stroke-width="1.4"/></svg>
<svg style="left:12px;top:448px" width="24" height="26" viewBox="12 448 24 26"><rect x="14" y="450.5" width="17" height="2.2" fill="#555"/><rect x="20" y="449" width="5" height="2" fill="#555"/><path d="M15.5 454 H29.5 V467 Q29.5 468 28.5 468 H16.5 Q15.5 468 15.5 467 Z" fill="#555"/><rect x="18" y="456" width="2" height="10" fill="#fff"/><rect x="21.5" y="456" width="2" height="10" fill="#fff"/><rect x="25" y="456" width="2" height="10" fill="#fff"/></svg>
<svg style="left:10px;top:496px" width="26" height="26" viewBox="10 496 26 26"><path d="M14.5 499.5 H22 L25 502.5 V504" fill="none" stroke="#555" stroke-width="1.4"/><path d="M14.5 499.5 V517.5 H23" fill="none" stroke="#555" stroke-width="1.4"/><circle cx="26" cy="511" r="4" fill="none" stroke="#555" stroke-width="1.4"/><path d="M29 514 L32.5 517.5" stroke="#555" stroke-width="1.6"/></svg>
<svg style="left:38px;top:1010px" width="22" height="20" viewBox="38 1010 22 20"><circle cx="48.5" cy="1018.5" r="4.3" fill="#7b52c1"/><rect x="46.5" y="1021" width="4" height="3.5" fill="#7b52c1"/><rect x="47" y="1025" width="3" height="1.2" fill="#7b52c1"/><path d="M41.5 1018.5 H43.3 M53.7 1018.5 H55.5 M43 1014 L44.5 1015.2 M54 1014 L52.5 1015.2 M43 1023 L44.5 1021.8 M54 1023 L52.5 1021.8" stroke="#7b52c1" stroke-width="1.1"/></svg>
<svg style="left:207px;top:612px" width="15" height="26" viewBox="207 612 15 26"><path d="M217 619 L211.5 625 L217 631" fill="none" stroke="#fff" stroke-width="1.6"/></svg>
<svg style="left:1867px;top:215px" width="43" height="47" viewBox="1867 215 43 47"><path d="M1877.5 234 L1872.5 240 L1877.5 246" fill="none" stroke="#fff" stroke-width="1.3"/><rect x="1882" y="228" width="21.5" height="23" fill="#fff"/><path d="M1886.5 230 V227 Q1886.5 225.5 1888 225.5 H1890 Q1892 222 1894 225.5 H1896 Q1897.5 225.5 1897.5 227 V230 Z" fill="#fff" stroke="#5331a2" stroke-width="1"/><g transform="translate(1886.5,237.8)"><circle r="1.9" fill="#5331a2"/><rect x="-0.6649999999999999" y="-2.755" width="1.3299999999999998" height="1.71" fill="#5331a2" transform="rotate(0)"/><rect x="-0.6649999999999999" y="-2.755" width="1.3299999999999998" height="1.71" fill="#5331a2" transform="rotate(45)"/><rect x="-0.6649999999999999" y="-2.755" width="1.3299999999999998" height="1.71" fill="#5331a2" transform="rotate(90)"/><rect x="-0.6649999999999999" y="-2.755" width="1.3299999999999998" height="1.71" fill="#5331a2" transform="rotate(135)"/><rect x="-0.6649999999999999" y="-2.755" width="1.3299999999999998" height="1.71" fill="#5331a2" transform="rotate(180)"/><rect x="-0.6649999999999999" y="-2.755" width="1.3299999999999998" height="1.71" fill="#5331a2" transform="rotate(225)"/><rect x="-0.6649999999999999" y="-2.755" width="1.3299999999999998" height="1.71" fill="#5331a2" transform="rotate(270)"/><rect x="-0.6649999999999999" y="-2.755" width="1.3299999999999998" height="1.71" fill="#5331a2" transform="rotate(315)"/><circle r="0.855" fill="#fff"/></g><g transform="translate(1886.5,245.5)"><circle r="1.9" fill="#5331a2"/><rect x="-0.6649999999999999" y="-2.755" width="1.3299999999999998" height="1.71" fill="#5331a2" transform="rotate(0)"/><rect x="-0.6649999999999999" y="-2.755" width="1.3299999999999998" height="1.71" fill="#5331a2" transform="rotate(45)"/><rect x="-0.6649999999999999" y="-2.755" width="1.3299999999999998" height="1.71" fill="#5331a2" transform="rotate(90)"/><rect x="-0.6649999999999999" y="-2.755" width="1.3299999999999998" height="1.71" fill="#5331a2" transform="rotate(135)"/><rect x="-0.6649999999999999" y="-2.755" width="1.3299999999999998" height="1.71" fill="#5331a2" transform="rotate(180)"/><rect x="-0.6649999999999999" y="-2.755" width="1.3299999999999998" height="1.71" fill="#5331a2" transform="rotate(225)"/><rect x="-0.6649999999999999" y="-2.755" width="1.3299999999999998" height="1.71" fill="#5331a2" transform="rotate(270)"/><rect x="-0.6649999999999999" y="-2.755" width="1.3299999999999998" height="1.71" fill="#5331a2" transform="rotate(315)"/><circle r="0.855" fill="#fff"/></g><path d="M1891 236.5 H1901 M1891 239 H1901 M1891 244.2 H1901 M1891 246.8 H1901" stroke="#5331a2" stroke-width="1.1"/></svg>
<svg style="left:1896px;top:158px" width="14" height="14" viewBox="1896 158 14 14"><path d="M1899 161.5 L1906 168.5 M1906 161.5 L1899 168.5" stroke="#777" stroke-width="1"/></svg>
<svg style="left:222px;top:238px" width="120" height="22" viewBox="222 238 120 22"><rect x="226.5" y="247" width="9" height="7.5" rx="0.8" fill="#e8ae5a"/><path d="M228.3 247.5 V245 Q231.0 241 233.7 245 V247.5" fill="none" stroke="#e8ae5a" stroke-width="1.6"/><rect x="230.3" y="249.5" width="1.4" height="2.6" fill="#fff"/><rect x="281.5" y="247" width="9" height="7.5" rx="0.8" fill="#e8ae5a"/><path d="M283.3 247.5 V245 Q286.0 241 288.7 245 V247.5" fill="none" stroke="#e8ae5a" stroke-width="1.6"/><rect x="285.3" y="249.5" width="1.4" height="2.6" fill="#fff"/><rect x="301.5" y="247" width="9" height="7.5" rx="0.8" fill="#e8ae5a"/><path d="M303.3 247.5 V245 Q306.0 241 308.7 245 V247.5" fill="none" stroke="#e8ae5a" stroke-width="1.6"/><rect x="305.3" y="249.5" width="1.4" height="2.6" fill="#fff"/><rect x="321.5" y="247" width="9" height="7.5" rx="0.8" fill="#e8ae5a"/><path d="M323.3 247.5 V245 Q326.0 241 328.7 245 V247.5" fill="none" stroke="#e8ae5a" stroke-width="1.6"/><rect x="325.3" y="249.5" width="1.4" height="2.6" fill="#fff"/></svg>
<svg style="left:744px;top:36px" width="12" height="12" viewBox="744 36 12 12"><path d="M746 42 L749 45.5 L754.5 38.5" fill="none" stroke="#333" stroke-width="1.6"/></svg>
<svg style="left:290px;top:130px" width="90" height="420" viewBox="0 0 90 420">
<defs><filter id="sh" x="-50%" y="-50%" width="200%" height="200%"><feGaussianBlur in="SourceAlpha" stdDeviation="2.5"/><feOffset dx="3" dy="3" result="b"/><feComponentTransfer><feFuncA type="linear" slope="0.32"/></feComponentTransfer><feMerge><feMergeNode/><feMergeNode in="SourceGraphic"/></feMerge></filter></defs>
<g filter="url(#sh)">
<path d="M42 70 L33 386" stroke="#ff1fa6" stroke-width="5" fill="none"/>
<path d="M24.5 384 L39 384 L31.5 399 Z" fill="#ff1fa6"/>
<circle cx="46" cy="32" r="20" fill="#ff1fa6"/>
</g>
</svg>
<div class="t" style="left:328.5px;top:152.1px;font-size:27px;line-height:27px;color:#fff;">7</div>
</body></html>
